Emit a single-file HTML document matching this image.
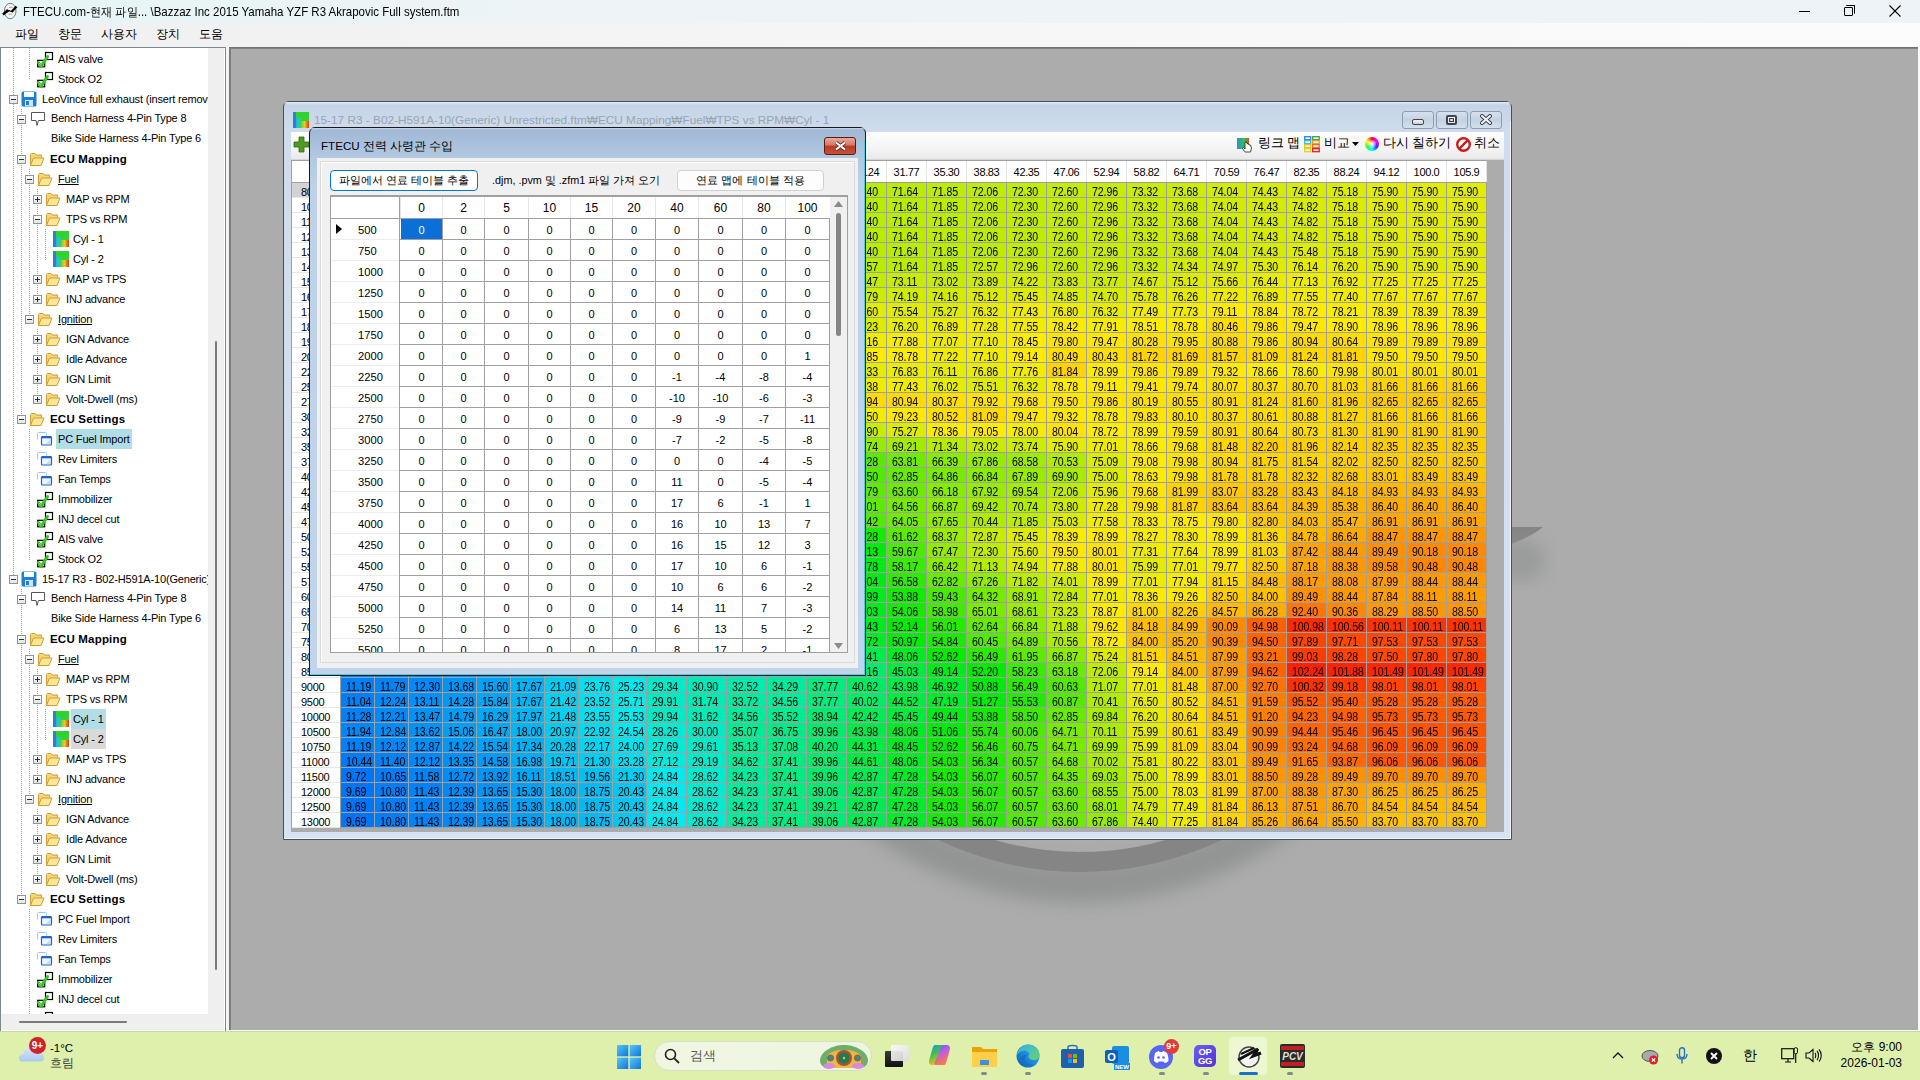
<!DOCTYPE html><html><head><meta charset="utf-8"><style>

*{margin:0;padding:0;box-sizing:border-box}
html,body{width:1920px;height:1080px;overflow:hidden;background:#abacac;font-family:"Liberation Sans", sans-serif;font-size:12px;color:#000}
div,span{position:absolute}
.t{white-space:nowrap;line-height:1}

</style></head><body>
<div style="left:0px;top:0px;width:1920px;height:23px;background:#eef3f7"></div>
<div style="left:0px;top:0px;width:600px;height:23px;background:linear-gradient(90deg,#e6f5f6,#eef3f7)"></div>
<svg style="position:absolute;left:0px;top:0px" width="22" height="23" viewBox="0 0 22 23"><ellipse cx="10.2" cy="11" rx="5.8" ry="7.7" fill="#f6f6f6" stroke="#7a7a7a" stroke-width="1"/><path d="M9 7.5q2-.7 3.5 0M8.5 14q2 .7 3.5 0" stroke="#888" stroke-width="0.8" fill="none"/><path d="M2.5 15L7.8 9.8L10.2 10.6L7.5 12.5z" fill="#000"/><path d="M3 14.5L8 10" stroke="#000" stroke-width="2.4"/><path d="M11.5 12L16.5 6.5" stroke="#000" stroke-width="2.4"/><path d="M8 10.5L12 11.5" stroke="#000" stroke-width="1.2"/></svg>
<div class="t" style="left:23px;top:6px;width:800px;height:14px;font-size:12.4px;color:#000;transform:scaleX(0.927);transform-origin:0 0">FTECU.com-현재 파일... \Bazzaz Inc 2015 Yamaha YZF R3 Akrapovic Full system.ftm</div>
<div style="left:1799px;top:11px;width:11px;height:1px;background:#000"></div>
<div style="left:1844px;top:7px;width:9px;height:9px;border:1px solid #000;border-radius:1px"></div>
<div style="left:1846px;top:5px;width:9px;height:9px;border-top:1px solid #000;border-right:1px solid #000;border-radius:1px"></div>
<svg style="position:absolute;left:1889px;top:5px" width="12" height="12" viewBox="0 0 12 12"><path d="M0.5 0.5L11.5 11.5M11.5 0.5L0.5 11.5" stroke="#000" stroke-width="1.1"/></svg>
<div style="left:0px;top:23px;width:1920px;height:24px;background:linear-gradient(90deg,#f0f0f0,#fcfcfc)"></div>
<div class="t" style="left:15px;top:28px;width:60px;height:14px;font-size:12px">파일</div>
<div class="t" style="left:58px;top:28px;width:60px;height:14px;font-size:12px">창문</div>
<div class="t" style="left:101px;top:28px;width:60px;height:14px;font-size:12px">사용자</div>
<div class="t" style="left:156px;top:28px;width:60px;height:14px;font-size:12px">장치</div>
<div class="t" style="left:199px;top:28px;width:60px;height:14px;font-size:12px">도움</div>
<div style="left:0px;top:47px;width:226px;height:985px;background:#fff;border:1px solid #7f8790;border-right:1px solid #7f8790"></div>
<div style="left:208px;top:48px;width:17px;height:983px;background:#efefef"></div>
<div style="left:1px;top:1014px;width:207px;height:17px;background:#efefef"></div>
<div style="left:215px;top:341px;width:2px;height:629px;background:#7a7a7a;border-radius:1px"></div>
<div style="left:19px;top:1021px;width:108px;height:2px;background:#7a7a7a;border-radius:1px"></div>
<div style="left:224px;top:48px;width:1px;height:983px;background:#fff"></div>
<div style="left:1px;top:1030px;width:224px;height:1px;background:#fff"></div>
<div style="left:226px;top:47px;width:3px;height:985px;background:#f4f4f4"></div>
<div style="left:1px;top:48px;width:207px;height:966px;overflow:hidden"><div style="left:-1px;top:-48px;width:1px;height:1px"><div style="left:13px;top:48px;width:1px;height:532px;background:repeating-linear-gradient(#a0a0a0 0 1px,transparent 1px 2px)"></div><div style="left:29px;top:48px;width:1px;height:32px;background:repeating-linear-gradient(#a0a0a0 0 1px,transparent 1px 2px)"></div><div style="left:21px;top:109px;width:1px;height:311px;background:repeating-linear-gradient(#a0a0a0 0 1px,transparent 1px 2px)"></div><div style="left:29px;top:169px;width:1px;height:151px;background:repeating-linear-gradient(#a0a0a0 0 1px,transparent 1px 2px)"></div><div style="left:37px;top:189px;width:1px;height:111px;background:repeating-linear-gradient(#a0a0a0 0 1px,transparent 1px 2px)"></div><div style="left:37px;top:329px;width:1px;height:71px;background:repeating-linear-gradient(#a0a0a0 0 1px,transparent 1px 2px)"></div><div style="left:45px;top:229px;width:1px;height:31px;background:repeating-linear-gradient(#a0a0a0 0 1px,transparent 1px 2px)"></div><div style="left:29px;top:429px;width:1px;height:131px;background:repeating-linear-gradient(#a0a0a0 0 1px,transparent 1px 2px)"></div><div style="left:21px;top:589px;width:1px;height:311px;background:repeating-linear-gradient(#a0a0a0 0 1px,transparent 1px 2px)"></div><div style="left:29px;top:649px;width:1px;height:151px;background:repeating-linear-gradient(#a0a0a0 0 1px,transparent 1px 2px)"></div><div style="left:37px;top:669px;width:1px;height:111px;background:repeating-linear-gradient(#a0a0a0 0 1px,transparent 1px 2px)"></div><div style="left:37px;top:809px;width:1px;height:71px;background:repeating-linear-gradient(#a0a0a0 0 1px,transparent 1px 2px)"></div><div style="left:45px;top:709px;width:1px;height:31px;background:repeating-linear-gradient(#a0a0a0 0 1px,transparent 1px 2px)"></div><div style="left:29px;top:909px;width:1px;height:105px;background:repeating-linear-gradient(#a0a0a0 0 1px,transparent 1px 2px)"></div><div style="left:37px;top:51px;width:17px;height:17px;background:#fff"><svg width="17" height="17" viewBox="0 0 17 17"><rect x="8.5" y="1.5" width="7" height="7" fill="#fff" stroke="#000" stroke-width="1.2"/><rect x="0.7" y="9.3" width="7" height="6.5" fill="#fff" stroke="#000" stroke-width="1.2"/><path d="M1.5 11.5l2.5 4 6.5-10" fill="none" stroke="#3cbf2c" stroke-width="3" stroke-linecap="round" stroke-linejoin="round"/><path d="M2 11.8l2 3" stroke="#8ee070" stroke-width="1"/></svg></div><div class="t" style="left:56px;top:49px;height:20px;padding:5px 2px 0 2px;font-size:11px;letter-spacing:-0.17px;">AIS valve</div><div style="left:37px;top:71px;width:17px;height:17px;background:#fff"><svg width="17" height="17" viewBox="0 0 17 17"><rect x="8.5" y="1.5" width="7" height="7" fill="#fff" stroke="#000" stroke-width="1.2"/><rect x="0.7" y="9.3" width="7" height="6.5" fill="#fff" stroke="#000" stroke-width="1.2"/><path d="M1.5 11.5l2.5 4 6.5-10" fill="none" stroke="#3cbf2c" stroke-width="3" stroke-linecap="round" stroke-linejoin="round"/><path d="M2 11.8l2 3" stroke="#8ee070" stroke-width="1"/></svg></div><div class="t" style="left:56px;top:69px;height:20px;padding:5px 2px 0 2px;font-size:11px;letter-spacing:-0.17px;">Stock O2</div><div style="left:9px;top:95px;width:9px;height:9px;border:1px solid #929292;background:linear-gradient(#fff,#e4e4e4)"></div><div style="left:11px;top:99px;width:5px;height:1px;background:#1b2f5a"></div><div style="left:21px;top:91px;width:17px;height:17px;background:#fff"><svg width="16" height="16" viewBox="0 0 16 16"><rect x="0.5" y="0.5" width="15" height="15" rx="1.5" fill="#1e7fd8"/><rect x="3" y="1" width="10" height="5" fill="#fff"/><rect x="4" y="9" width="8" height="6" fill="#cfe6fb"/><rect x="5" y="10" width="3" height="4" fill="#1e7fd8"/></svg></div><div class="t" style="left:40px;top:89px;height:20px;padding:5px 2px 0 2px;font-size:11px;letter-spacing:-0.17px;">LeoVince full exhaust (insert removed)</div><div style="left:17px;top:115px;width:9px;height:9px;border:1px solid #929292;background:linear-gradient(#fff,#e4e4e4)"></div><div style="left:19px;top:119px;width:5px;height:1px;background:#1b2f5a"></div><div style="left:30px;top:111px;width:17px;height:17px;background:#fff"><svg width="16" height="16" viewBox="0 0 16 16"><path d="M1.5 1.5h13v8h-6l-1.5 5-1-5h-4.5z" fill="#fff" stroke="#555" stroke-width="1"/></svg></div><div class="t" style="left:49px;top:108px;height:20px;padding:5px 2px 0 2px;font-size:11px;letter-spacing:-0.17px;">Bench Harness 4-Pin Type 8</div><div class="t" style="left:49px;top:128px;height:20px;padding:5px 2px 0 2px;font-size:11px;letter-spacing:-0.17px;">Bike Side Harness 4-Pin Type 6</div><div style="left:17px;top:155px;width:9px;height:9px;border:1px solid #929292;background:linear-gradient(#fff,#e4e4e4)"></div><div style="left:19px;top:159px;width:5px;height:1px;background:#1b2f5a"></div><div style="left:29px;top:151px;width:17px;height:17px;background:#fff"><svg width="16" height="16" viewBox="0 0 16 16"><path d="M1.5 14.5V3.5l1-1h3.5l1 1.5h5.5v2.5" fill="#f3d77a" stroke="#d09a30" stroke-width="1"/><path d="M1.5 14.5l3-7.5h10.5l-3 7.5z" fill="#fbe79a" stroke="#d49c2c" stroke-width="1" stroke-linejoin="round"/></svg></div><div class="t" style="left:48px;top:149px;height:20px;padding:5px 2px 0 2px;font-size:11.5px;letter-spacing:0.2px;font-weight:bold;">ECU Mapping</div><div style="left:25px;top:175px;width:9px;height:9px;border:1px solid #929292;background:linear-gradient(#fff,#e4e4e4)"></div><div style="left:27px;top:179px;width:5px;height:1px;background:#1b2f5a"></div><div style="left:37px;top:171px;width:17px;height:17px;background:#fff"><svg width="16" height="16" viewBox="0 0 16 16"><path d="M1.5 14.5V3.5l1-1h3.5l1 1.5h5.5v2.5" fill="#f3d77a" stroke="#d09a30" stroke-width="1"/><path d="M1.5 14.5l3-7.5h10.5l-3 7.5z" fill="#fbe79a" stroke="#d49c2c" stroke-width="1" stroke-linejoin="round"/></svg></div><div class="t" style="left:56px;top:169px;height:20px;padding:5px 2px 0 2px;font-size:11px;letter-spacing:-0.17px;text-decoration:underline;">Fuel</div><div style="left:33px;top:195px;width:9px;height:9px;border:1px solid #929292;background:linear-gradient(#fff,#e4e4e4)"></div><div style="left:35px;top:199px;width:5px;height:1px;background:#1b2f5a"></div><div style="left:37px;top:197px;width:1px;height:5px;background:#1b2f5a"></div><div style="left:45px;top:191px;width:17px;height:17px;background:#fff"><svg width="16" height="16" viewBox="0 0 16 16"><path d="M1.5 14.5V3.5l1-1h3.5l1 1.5h5.5v2.5" fill="#f3d77a" stroke="#d09a30" stroke-width="1"/><path d="M1.5 14.5l3-7.5h10.5l-3 7.5z" fill="#fbe79a" stroke="#d49c2c" stroke-width="1" stroke-linejoin="round"/></svg></div><div class="t" style="left:64px;top:189px;height:20px;padding:5px 2px 0 2px;font-size:11px;letter-spacing:-0.17px;">MAP vs RPM</div><div style="left:33px;top:215px;width:9px;height:9px;border:1px solid #929292;background:linear-gradient(#fff,#e4e4e4)"></div><div style="left:35px;top:219px;width:5px;height:1px;background:#1b2f5a"></div><div style="left:45px;top:211px;width:17px;height:17px;background:#fff"><svg width="16" height="16" viewBox="0 0 16 16"><path d="M1.5 14.5V3.5l1-1h3.5l1 1.5h5.5v2.5" fill="#f3d77a" stroke="#d09a30" stroke-width="1"/><path d="M1.5 14.5l3-7.5h10.5l-3 7.5z" fill="#fbe79a" stroke="#d49c2c" stroke-width="1" stroke-linejoin="round"/></svg></div><div class="t" style="left:64px;top:209px;height:20px;padding:5px 2px 0 2px;font-size:11px;letter-spacing:-0.17px;">TPS vs RPM</div><div style="left:53px;top:231px;width:17px;height:17px;background:#fff"><svg width="16" height="16" viewBox="0 0 16 16"><defs><linearGradient id="hg1" x1="0" y1="0" x2="1" y2="0"><stop offset="0" stop-color="#2a7ae8"/><stop offset="0.3" stop-color="#28c8c8"/><stop offset="0.6" stop-color="#30d040"/><stop offset="1" stop-color="#40d030"/></linearGradient><linearGradient id="hg2" x1="0" y1="0" x2="1" y2="0"><stop offset="0" stop-color="#30d060"/><stop offset="0.5" stop-color="#e0d020"/><stop offset="1" stop-color="#e83018"/></linearGradient></defs><rect width="16" height="16" fill="url(#hg1)"/><rect x="0" y="0" width="16" height="6" fill="#30d030"/><rect x="2" y="0" width="14" height="6" fill="#2fd22f"/><path d="M0 0h3v16H0z" fill="#2a7ae8" opacity="0.9"/><path d="M7 9h9v7H7z" fill="url(#hg2)"/></svg></div><div class="t" style="left:71px;top:229px;height:20px;padding:5px 2px 0 2px;font-size:11px;letter-spacing:-0.17px;">Cyl - 1</div><div style="left:53px;top:251px;width:17px;height:17px;background:#fff"><svg width="16" height="16" viewBox="0 0 16 16"><defs><linearGradient id="hg1" x1="0" y1="0" x2="1" y2="0"><stop offset="0" stop-color="#2a7ae8"/><stop offset="0.3" stop-color="#28c8c8"/><stop offset="0.6" stop-color="#30d040"/><stop offset="1" stop-color="#40d030"/></linearGradient><linearGradient id="hg2" x1="0" y1="0" x2="1" y2="0"><stop offset="0" stop-color="#30d060"/><stop offset="0.5" stop-color="#e0d020"/><stop offset="1" stop-color="#e83018"/></linearGradient></defs><rect width="16" height="16" fill="url(#hg1)"/><rect x="0" y="0" width="16" height="6" fill="#30d030"/><rect x="2" y="0" width="14" height="6" fill="#2fd22f"/><path d="M0 0h3v16H0z" fill="#2a7ae8" opacity="0.9"/><path d="M7 9h9v7H7z" fill="url(#hg2)"/></svg></div><div class="t" style="left:71px;top:249px;height:20px;padding:5px 2px 0 2px;font-size:11px;letter-spacing:-0.17px;">Cyl - 2</div><div style="left:33px;top:275px;width:9px;height:9px;border:1px solid #929292;background:linear-gradient(#fff,#e4e4e4)"></div><div style="left:35px;top:279px;width:5px;height:1px;background:#1b2f5a"></div><div style="left:37px;top:277px;width:1px;height:5px;background:#1b2f5a"></div><div style="left:45px;top:271px;width:17px;height:17px;background:#fff"><svg width="16" height="16" viewBox="0 0 16 16"><path d="M1.5 14.5V3.5l1-1h3.5l1 1.5h5.5v2.5" fill="#f3d77a" stroke="#d09a30" stroke-width="1"/><path d="M1.5 14.5l3-7.5h10.5l-3 7.5z" fill="#fbe79a" stroke="#d49c2c" stroke-width="1" stroke-linejoin="round"/></svg></div><div class="t" style="left:64px;top:269px;height:20px;padding:5px 2px 0 2px;font-size:11px;letter-spacing:-0.17px;">MAP vs TPS</div><div style="left:33px;top:295px;width:9px;height:9px;border:1px solid #929292;background:linear-gradient(#fff,#e4e4e4)"></div><div style="left:35px;top:299px;width:5px;height:1px;background:#1b2f5a"></div><div style="left:37px;top:297px;width:1px;height:5px;background:#1b2f5a"></div><div style="left:45px;top:291px;width:17px;height:17px;background:#fff"><svg width="16" height="16" viewBox="0 0 16 16"><path d="M1.5 14.5V3.5l1-1h3.5l1 1.5h5.5v2.5" fill="#f3d77a" stroke="#d09a30" stroke-width="1"/><path d="M1.5 14.5l3-7.5h10.5l-3 7.5z" fill="#fbe79a" stroke="#d49c2c" stroke-width="1" stroke-linejoin="round"/></svg></div><div class="t" style="left:64px;top:289px;height:20px;padding:5px 2px 0 2px;font-size:11px;letter-spacing:-0.17px;">INJ advance</div><div style="left:25px;top:315px;width:9px;height:9px;border:1px solid #929292;background:linear-gradient(#fff,#e4e4e4)"></div><div style="left:27px;top:319px;width:5px;height:1px;background:#1b2f5a"></div><div style="left:37px;top:311px;width:17px;height:17px;background:#fff"><svg width="16" height="16" viewBox="0 0 16 16"><path d="M1.5 14.5V3.5l1-1h3.5l1 1.5h5.5v2.5" fill="#f3d77a" stroke="#d09a30" stroke-width="1"/><path d="M1.5 14.5l3-7.5h10.5l-3 7.5z" fill="#fbe79a" stroke="#d49c2c" stroke-width="1" stroke-linejoin="round"/></svg></div><div class="t" style="left:56px;top:309px;height:20px;padding:5px 2px 0 2px;font-size:11px;letter-spacing:-0.17px;text-decoration:underline;">Ignition</div><div style="left:33px;top:335px;width:9px;height:9px;border:1px solid #929292;background:linear-gradient(#fff,#e4e4e4)"></div><div style="left:35px;top:339px;width:5px;height:1px;background:#1b2f5a"></div><div style="left:37px;top:337px;width:1px;height:5px;background:#1b2f5a"></div><div style="left:45px;top:331px;width:17px;height:17px;background:#fff"><svg width="16" height="16" viewBox="0 0 16 16"><path d="M1.5 14.5V3.5l1-1h3.5l1 1.5h5.5v2.5" fill="#f3d77a" stroke="#d09a30" stroke-width="1"/><path d="M1.5 14.5l3-7.5h10.5l-3 7.5z" fill="#fbe79a" stroke="#d49c2c" stroke-width="1" stroke-linejoin="round"/></svg></div><div class="t" style="left:64px;top:329px;height:20px;padding:5px 2px 0 2px;font-size:11px;letter-spacing:-0.17px;">IGN Advance</div><div style="left:33px;top:355px;width:9px;height:9px;border:1px solid #929292;background:linear-gradient(#fff,#e4e4e4)"></div><div style="left:35px;top:359px;width:5px;height:1px;background:#1b2f5a"></div><div style="left:37px;top:357px;width:1px;height:5px;background:#1b2f5a"></div><div style="left:45px;top:351px;width:17px;height:17px;background:#fff"><svg width="16" height="16" viewBox="0 0 16 16"><path d="M1.5 14.5V3.5l1-1h3.5l1 1.5h5.5v2.5" fill="#f3d77a" stroke="#d09a30" stroke-width="1"/><path d="M1.5 14.5l3-7.5h10.5l-3 7.5z" fill="#fbe79a" stroke="#d49c2c" stroke-width="1" stroke-linejoin="round"/></svg></div><div class="t" style="left:64px;top:349px;height:20px;padding:5px 2px 0 2px;font-size:11px;letter-spacing:-0.17px;">Idle Advance</div><div style="left:33px;top:375px;width:9px;height:9px;border:1px solid #929292;background:linear-gradient(#fff,#e4e4e4)"></div><div style="left:35px;top:379px;width:5px;height:1px;background:#1b2f5a"></div><div style="left:37px;top:377px;width:1px;height:5px;background:#1b2f5a"></div><div style="left:45px;top:371px;width:17px;height:17px;background:#fff"><svg width="16" height="16" viewBox="0 0 16 16"><path d="M1.5 14.5V3.5l1-1h3.5l1 1.5h5.5v2.5" fill="#f3d77a" stroke="#d09a30" stroke-width="1"/><path d="M1.5 14.5l3-7.5h10.5l-3 7.5z" fill="#fbe79a" stroke="#d49c2c" stroke-width="1" stroke-linejoin="round"/></svg></div><div class="t" style="left:64px;top:369px;height:20px;padding:5px 2px 0 2px;font-size:11px;letter-spacing:-0.17px;">IGN Limit</div><div style="left:33px;top:395px;width:9px;height:9px;border:1px solid #929292;background:linear-gradient(#fff,#e4e4e4)"></div><div style="left:35px;top:399px;width:5px;height:1px;background:#1b2f5a"></div><div style="left:37px;top:397px;width:1px;height:5px;background:#1b2f5a"></div><div style="left:45px;top:391px;width:17px;height:17px;background:#fff"><svg width="16" height="16" viewBox="0 0 16 16"><path d="M1.5 14.5V3.5l1-1h3.5l1 1.5h5.5v2.5" fill="#f3d77a" stroke="#d09a30" stroke-width="1"/><path d="M1.5 14.5l3-7.5h10.5l-3 7.5z" fill="#fbe79a" stroke="#d49c2c" stroke-width="1" stroke-linejoin="round"/></svg></div><div class="t" style="left:64px;top:389px;height:20px;padding:5px 2px 0 2px;font-size:11px;letter-spacing:-0.17px;">Volt-Dwell (ms)</div><div style="left:17px;top:415px;width:9px;height:9px;border:1px solid #929292;background:linear-gradient(#fff,#e4e4e4)"></div><div style="left:19px;top:419px;width:5px;height:1px;background:#1b2f5a"></div><div style="left:29px;top:411px;width:17px;height:17px;background:#fff"><svg width="16" height="16" viewBox="0 0 16 16"><path d="M1.5 14.5V3.5l1-1h3.5l1 1.5h5.5v2.5" fill="#f3d77a" stroke="#d09a30" stroke-width="1"/><path d="M1.5 14.5l3-7.5h10.5l-3 7.5z" fill="#fbe79a" stroke="#d49c2c" stroke-width="1" stroke-linejoin="round"/></svg></div><div class="t" style="left:48px;top:409px;height:20px;padding:5px 2px 0 2px;font-size:11.5px;letter-spacing:0.2px;font-weight:bold;">ECU Settings</div><div style="left:37px;top:431px;width:17px;height:17px;background:#fff"><svg width="16" height="16" viewBox="0 0 16 16"><path d="M0.5 8.5V2.5q0-1 1-1h7q1 0 1 1v2" fill="none" stroke="#9cc8e8" stroke-width="1"/><rect x="4.5" y="5.5" width="10" height="8.5" rx="1" fill="#eef4fb" stroke="#1a66d0" stroke-width="1.2"/><rect x="4.5" y="5.5" width="10" height="1.8" fill="#1a66d0"/><path d="M9 13l5-5v5z" fill="#c6dcf2"/></svg></div><div class="t" style="left:56px;top:429px;height:20px;padding:5px 2px 0 2px;background:#b0dde6;font-size:11px;letter-spacing:-0.17px;">PC Fuel Import</div><div style="left:37px;top:451px;width:17px;height:17px;background:#fff"><svg width="16" height="16" viewBox="0 0 16 16"><path d="M0.5 8.5V2.5q0-1 1-1h7q1 0 1 1v2" fill="none" stroke="#9cc8e8" stroke-width="1"/><rect x="4.5" y="5.5" width="10" height="8.5" rx="1" fill="#eef4fb" stroke="#1a66d0" stroke-width="1.2"/><rect x="4.5" y="5.5" width="10" height="1.8" fill="#1a66d0"/><path d="M9 13l5-5v5z" fill="#c6dcf2"/></svg></div><div class="t" style="left:56px;top:449px;height:20px;padding:5px 2px 0 2px;font-size:11px;letter-spacing:-0.17px;">Rev Limiters</div><div style="left:37px;top:471px;width:17px;height:17px;background:#fff"><svg width="16" height="16" viewBox="0 0 16 16"><path d="M0.5 8.5V2.5q0-1 1-1h7q1 0 1 1v2" fill="none" stroke="#9cc8e8" stroke-width="1"/><rect x="4.5" y="5.5" width="10" height="8.5" rx="1" fill="#eef4fb" stroke="#1a66d0" stroke-width="1.2"/><rect x="4.5" y="5.5" width="10" height="1.8" fill="#1a66d0"/><path d="M9 13l5-5v5z" fill="#c6dcf2"/></svg></div><div class="t" style="left:56px;top:469px;height:20px;padding:5px 2px 0 2px;font-size:11px;letter-spacing:-0.17px;">Fan Temps</div><div style="left:37px;top:491px;width:17px;height:17px;background:#fff"><svg width="17" height="17" viewBox="0 0 17 17"><rect x="8.5" y="1.5" width="7" height="7" fill="#fff" stroke="#000" stroke-width="1.2"/><rect x="0.7" y="9.3" width="7" height="6.5" fill="#fff" stroke="#000" stroke-width="1.2"/><path d="M1.5 11.5l2.5 4 6.5-10" fill="none" stroke="#3cbf2c" stroke-width="3" stroke-linecap="round" stroke-linejoin="round"/><path d="M2 11.8l2 3" stroke="#8ee070" stroke-width="1"/></svg></div><div class="t" style="left:56px;top:489px;height:20px;padding:5px 2px 0 2px;font-size:11px;letter-spacing:-0.17px;">Immobilizer</div><div style="left:37px;top:511px;width:17px;height:17px;background:#fff"><svg width="17" height="17" viewBox="0 0 17 17"><rect x="8.5" y="1.5" width="7" height="7" fill="#fff" stroke="#000" stroke-width="1.2"/><rect x="0.7" y="9.3" width="7" height="6.5" fill="#fff" stroke="#000" stroke-width="1.2"/><path d="M1.5 11.5l2.5 4 6.5-10" fill="none" stroke="#3cbf2c" stroke-width="3" stroke-linecap="round" stroke-linejoin="round"/><path d="M2 11.8l2 3" stroke="#8ee070" stroke-width="1"/></svg></div><div class="t" style="left:56px;top:509px;height:20px;padding:5px 2px 0 2px;font-size:11px;letter-spacing:-0.17px;">INJ decel cut</div><div style="left:37px;top:531px;width:17px;height:17px;background:#fff"><svg width="17" height="17" viewBox="0 0 17 17"><rect x="8.5" y="1.5" width="7" height="7" fill="#fff" stroke="#000" stroke-width="1.2"/><rect x="0.7" y="9.3" width="7" height="6.5" fill="#fff" stroke="#000" stroke-width="1.2"/><path d="M1.5 11.5l2.5 4 6.5-10" fill="none" stroke="#3cbf2c" stroke-width="3" stroke-linecap="round" stroke-linejoin="round"/><path d="M2 11.8l2 3" stroke="#8ee070" stroke-width="1"/></svg></div><div class="t" style="left:56px;top:529px;height:20px;padding:5px 2px 0 2px;font-size:11px;letter-spacing:-0.17px;">AIS valve</div><div style="left:37px;top:551px;width:17px;height:17px;background:#fff"><svg width="17" height="17" viewBox="0 0 17 17"><rect x="8.5" y="1.5" width="7" height="7" fill="#fff" stroke="#000" stroke-width="1.2"/><rect x="0.7" y="9.3" width="7" height="6.5" fill="#fff" stroke="#000" stroke-width="1.2"/><path d="M1.5 11.5l2.5 4 6.5-10" fill="none" stroke="#3cbf2c" stroke-width="3" stroke-linecap="round" stroke-linejoin="round"/><path d="M2 11.8l2 3" stroke="#8ee070" stroke-width="1"/></svg></div><div class="t" style="left:56px;top:549px;height:20px;padding:5px 2px 0 2px;font-size:11px;letter-spacing:-0.17px;">Stock O2</div><div style="left:9px;top:575px;width:9px;height:9px;border:1px solid #929292;background:linear-gradient(#fff,#e4e4e4)"></div><div style="left:11px;top:579px;width:5px;height:1px;background:#1b2f5a"></div><div style="left:21px;top:571px;width:17px;height:17px;background:#fff"><svg width="16" height="16" viewBox="0 0 16 16"><rect x="0.5" y="0.5" width="15" height="15" rx="1.5" fill="#1e7fd8"/><rect x="3" y="1" width="10" height="5" fill="#fff"/><rect x="4" y="9" width="8" height="6" fill="#cfe6fb"/><rect x="5" y="10" width="3" height="4" fill="#1e7fd8"/></svg></div><div class="t" style="left:40px;top:569px;height:20px;padding:5px 2px 0 2px;font-size:11px;letter-spacing:-0.17px;">15-17 R3 - B02-H591A-10(Generic) Unrestricted</div><div style="left:17px;top:595px;width:9px;height:9px;border:1px solid #929292;background:linear-gradient(#fff,#e4e4e4)"></div><div style="left:19px;top:599px;width:5px;height:1px;background:#1b2f5a"></div><div style="left:30px;top:591px;width:17px;height:17px;background:#fff"><svg width="16" height="16" viewBox="0 0 16 16"><path d="M1.5 1.5h13v8h-6l-1.5 5-1-5h-4.5z" fill="#fff" stroke="#555" stroke-width="1"/></svg></div><div class="t" style="left:49px;top:588px;height:20px;padding:5px 2px 0 2px;font-size:11px;letter-spacing:-0.17px;">Bench Harness 4-Pin Type 8</div><div class="t" style="left:49px;top:608px;height:20px;padding:5px 2px 0 2px;font-size:11px;letter-spacing:-0.17px;">Bike Side Harness 4-Pin Type 6</div><div style="left:17px;top:635px;width:9px;height:9px;border:1px solid #929292;background:linear-gradient(#fff,#e4e4e4)"></div><div style="left:19px;top:639px;width:5px;height:1px;background:#1b2f5a"></div><div style="left:29px;top:631px;width:17px;height:17px;background:#fff"><svg width="16" height="16" viewBox="0 0 16 16"><path d="M1.5 14.5V3.5l1-1h3.5l1 1.5h5.5v2.5" fill="#f3d77a" stroke="#d09a30" stroke-width="1"/><path d="M1.5 14.5l3-7.5h10.5l-3 7.5z" fill="#fbe79a" stroke="#d49c2c" stroke-width="1" stroke-linejoin="round"/></svg></div><div class="t" style="left:48px;top:629px;height:20px;padding:5px 2px 0 2px;font-size:11.5px;letter-spacing:0.2px;font-weight:bold;">ECU Mapping</div><div style="left:25px;top:655px;width:9px;height:9px;border:1px solid #929292;background:linear-gradient(#fff,#e4e4e4)"></div><div style="left:27px;top:659px;width:5px;height:1px;background:#1b2f5a"></div><div style="left:37px;top:651px;width:17px;height:17px;background:#fff"><svg width="16" height="16" viewBox="0 0 16 16"><path d="M1.5 14.5V3.5l1-1h3.5l1 1.5h5.5v2.5" fill="#f3d77a" stroke="#d09a30" stroke-width="1"/><path d="M1.5 14.5l3-7.5h10.5l-3 7.5z" fill="#fbe79a" stroke="#d49c2c" stroke-width="1" stroke-linejoin="round"/></svg></div><div class="t" style="left:56px;top:649px;height:20px;padding:5px 2px 0 2px;font-size:11px;letter-spacing:-0.17px;text-decoration:underline;">Fuel</div><div style="left:33px;top:675px;width:9px;height:9px;border:1px solid #929292;background:linear-gradient(#fff,#e4e4e4)"></div><div style="left:35px;top:679px;width:5px;height:1px;background:#1b2f5a"></div><div style="left:37px;top:677px;width:1px;height:5px;background:#1b2f5a"></div><div style="left:45px;top:671px;width:17px;height:17px;background:#fff"><svg width="16" height="16" viewBox="0 0 16 16"><path d="M1.5 14.5V3.5l1-1h3.5l1 1.5h5.5v2.5" fill="#f3d77a" stroke="#d09a30" stroke-width="1"/><path d="M1.5 14.5l3-7.5h10.5l-3 7.5z" fill="#fbe79a" stroke="#d49c2c" stroke-width="1" stroke-linejoin="round"/></svg></div><div class="t" style="left:64px;top:669px;height:20px;padding:5px 2px 0 2px;font-size:11px;letter-spacing:-0.17px;">MAP vs RPM</div><div style="left:33px;top:695px;width:9px;height:9px;border:1px solid #929292;background:linear-gradient(#fff,#e4e4e4)"></div><div style="left:35px;top:699px;width:5px;height:1px;background:#1b2f5a"></div><div style="left:45px;top:691px;width:17px;height:17px;background:#fff"><svg width="16" height="16" viewBox="0 0 16 16"><path d="M1.5 14.5V3.5l1-1h3.5l1 1.5h5.5v2.5" fill="#f3d77a" stroke="#d09a30" stroke-width="1"/><path d="M1.5 14.5l3-7.5h10.5l-3 7.5z" fill="#fbe79a" stroke="#d49c2c" stroke-width="1" stroke-linejoin="round"/></svg></div><div class="t" style="left:64px;top:689px;height:20px;padding:5px 2px 0 2px;font-size:11px;letter-spacing:-0.17px;">TPS vs RPM</div><div style="left:53px;top:711px;width:17px;height:17px;background:#fff"><svg width="16" height="16" viewBox="0 0 16 16"><defs><linearGradient id="hg1" x1="0" y1="0" x2="1" y2="0"><stop offset="0" stop-color="#2a7ae8"/><stop offset="0.3" stop-color="#28c8c8"/><stop offset="0.6" stop-color="#30d040"/><stop offset="1" stop-color="#40d030"/></linearGradient><linearGradient id="hg2" x1="0" y1="0" x2="1" y2="0"><stop offset="0" stop-color="#30d060"/><stop offset="0.5" stop-color="#e0d020"/><stop offset="1" stop-color="#e83018"/></linearGradient></defs><rect width="16" height="16" fill="url(#hg1)"/><rect x="0" y="0" width="16" height="6" fill="#30d030"/><rect x="2" y="0" width="14" height="6" fill="#2fd22f"/><path d="M0 0h3v16H0z" fill="#2a7ae8" opacity="0.9"/><path d="M7 9h9v7H7z" fill="url(#hg2)"/></svg></div><div class="t" style="left:71px;top:709px;height:20px;padding:5px 2px 0 2px;background:#b0dde6;font-size:11px;letter-spacing:-0.17px;">Cyl - 1</div><div style="left:53px;top:731px;width:17px;height:17px;background:#fff"><svg width="16" height="16" viewBox="0 0 16 16"><defs><linearGradient id="hg1" x1="0" y1="0" x2="1" y2="0"><stop offset="0" stop-color="#2a7ae8"/><stop offset="0.3" stop-color="#28c8c8"/><stop offset="0.6" stop-color="#30d040"/><stop offset="1" stop-color="#40d030"/></linearGradient><linearGradient id="hg2" x1="0" y1="0" x2="1" y2="0"><stop offset="0" stop-color="#30d060"/><stop offset="0.5" stop-color="#e0d020"/><stop offset="1" stop-color="#e83018"/></linearGradient></defs><rect width="16" height="16" fill="url(#hg1)"/><rect x="0" y="0" width="16" height="6" fill="#30d030"/><rect x="2" y="0" width="14" height="6" fill="#2fd22f"/><path d="M0 0h3v16H0z" fill="#2a7ae8" opacity="0.9"/><path d="M7 9h9v7H7z" fill="url(#hg2)"/></svg></div><div class="t" style="left:71px;top:729px;height:20px;padding:5px 2px 0 2px;background:#d9d9d9;font-size:11px;letter-spacing:-0.17px;">Cyl - 2</div><div style="left:33px;top:755px;width:9px;height:9px;border:1px solid #929292;background:linear-gradient(#fff,#e4e4e4)"></div><div style="left:35px;top:759px;width:5px;height:1px;background:#1b2f5a"></div><div style="left:37px;top:757px;width:1px;height:5px;background:#1b2f5a"></div><div style="left:45px;top:751px;width:17px;height:17px;background:#fff"><svg width="16" height="16" viewBox="0 0 16 16"><path d="M1.5 14.5V3.5l1-1h3.5l1 1.5h5.5v2.5" fill="#f3d77a" stroke="#d09a30" stroke-width="1"/><path d="M1.5 14.5l3-7.5h10.5l-3 7.5z" fill="#fbe79a" stroke="#d49c2c" stroke-width="1" stroke-linejoin="round"/></svg></div><div class="t" style="left:64px;top:749px;height:20px;padding:5px 2px 0 2px;font-size:11px;letter-spacing:-0.17px;">MAP vs TPS</div><div style="left:33px;top:775px;width:9px;height:9px;border:1px solid #929292;background:linear-gradient(#fff,#e4e4e4)"></div><div style="left:35px;top:779px;width:5px;height:1px;background:#1b2f5a"></div><div style="left:37px;top:777px;width:1px;height:5px;background:#1b2f5a"></div><div style="left:45px;top:771px;width:17px;height:17px;background:#fff"><svg width="16" height="16" viewBox="0 0 16 16"><path d="M1.5 14.5V3.5l1-1h3.5l1 1.5h5.5v2.5" fill="#f3d77a" stroke="#d09a30" stroke-width="1"/><path d="M1.5 14.5l3-7.5h10.5l-3 7.5z" fill="#fbe79a" stroke="#d49c2c" stroke-width="1" stroke-linejoin="round"/></svg></div><div class="t" style="left:64px;top:769px;height:20px;padding:5px 2px 0 2px;font-size:11px;letter-spacing:-0.17px;">INJ advance</div><div style="left:25px;top:795px;width:9px;height:9px;border:1px solid #929292;background:linear-gradient(#fff,#e4e4e4)"></div><div style="left:27px;top:799px;width:5px;height:1px;background:#1b2f5a"></div><div style="left:37px;top:791px;width:17px;height:17px;background:#fff"><svg width="16" height="16" viewBox="0 0 16 16"><path d="M1.5 14.5V3.5l1-1h3.5l1 1.5h5.5v2.5" fill="#f3d77a" stroke="#d09a30" stroke-width="1"/><path d="M1.5 14.5l3-7.5h10.5l-3 7.5z" fill="#fbe79a" stroke="#d49c2c" stroke-width="1" stroke-linejoin="round"/></svg></div><div class="t" style="left:56px;top:789px;height:20px;padding:5px 2px 0 2px;font-size:11px;letter-spacing:-0.17px;text-decoration:underline;">Ignition</div><div style="left:33px;top:815px;width:9px;height:9px;border:1px solid #929292;background:linear-gradient(#fff,#e4e4e4)"></div><div style="left:35px;top:819px;width:5px;height:1px;background:#1b2f5a"></div><div style="left:37px;top:817px;width:1px;height:5px;background:#1b2f5a"></div><div style="left:45px;top:811px;width:17px;height:17px;background:#fff"><svg width="16" height="16" viewBox="0 0 16 16"><path d="M1.5 14.5V3.5l1-1h3.5l1 1.5h5.5v2.5" fill="#f3d77a" stroke="#d09a30" stroke-width="1"/><path d="M1.5 14.5l3-7.5h10.5l-3 7.5z" fill="#fbe79a" stroke="#d49c2c" stroke-width="1" stroke-linejoin="round"/></svg></div><div class="t" style="left:64px;top:809px;height:20px;padding:5px 2px 0 2px;font-size:11px;letter-spacing:-0.17px;">IGN Advance</div><div style="left:33px;top:835px;width:9px;height:9px;border:1px solid #929292;background:linear-gradient(#fff,#e4e4e4)"></div><div style="left:35px;top:839px;width:5px;height:1px;background:#1b2f5a"></div><div style="left:37px;top:837px;width:1px;height:5px;background:#1b2f5a"></div><div style="left:45px;top:831px;width:17px;height:17px;background:#fff"><svg width="16" height="16" viewBox="0 0 16 16"><path d="M1.5 14.5V3.5l1-1h3.5l1 1.5h5.5v2.5" fill="#f3d77a" stroke="#d09a30" stroke-width="1"/><path d="M1.5 14.5l3-7.5h10.5l-3 7.5z" fill="#fbe79a" stroke="#d49c2c" stroke-width="1" stroke-linejoin="round"/></svg></div><div class="t" style="left:64px;top:829px;height:20px;padding:5px 2px 0 2px;font-size:11px;letter-spacing:-0.17px;">Idle Advance</div><div style="left:33px;top:855px;width:9px;height:9px;border:1px solid #929292;background:linear-gradient(#fff,#e4e4e4)"></div><div style="left:35px;top:859px;width:5px;height:1px;background:#1b2f5a"></div><div style="left:37px;top:857px;width:1px;height:5px;background:#1b2f5a"></div><div style="left:45px;top:851px;width:17px;height:17px;background:#fff"><svg width="16" height="16" viewBox="0 0 16 16"><path d="M1.5 14.5V3.5l1-1h3.5l1 1.5h5.5v2.5" fill="#f3d77a" stroke="#d09a30" stroke-width="1"/><path d="M1.5 14.5l3-7.5h10.5l-3 7.5z" fill="#fbe79a" stroke="#d49c2c" stroke-width="1" stroke-linejoin="round"/></svg></div><div class="t" style="left:64px;top:849px;height:20px;padding:5px 2px 0 2px;font-size:11px;letter-spacing:-0.17px;">IGN Limit</div><div style="left:33px;top:875px;width:9px;height:9px;border:1px solid #929292;background:linear-gradient(#fff,#e4e4e4)"></div><div style="left:35px;top:879px;width:5px;height:1px;background:#1b2f5a"></div><div style="left:37px;top:877px;width:1px;height:5px;background:#1b2f5a"></div><div style="left:45px;top:871px;width:17px;height:17px;background:#fff"><svg width="16" height="16" viewBox="0 0 16 16"><path d="M1.5 14.5V3.5l1-1h3.5l1 1.5h5.5v2.5" fill="#f3d77a" stroke="#d09a30" stroke-width="1"/><path d="M1.5 14.5l3-7.5h10.5l-3 7.5z" fill="#fbe79a" stroke="#d49c2c" stroke-width="1" stroke-linejoin="round"/></svg></div><div class="t" style="left:64px;top:869px;height:20px;padding:5px 2px 0 2px;font-size:11px;letter-spacing:-0.17px;">Volt-Dwell (ms)</div><div style="left:17px;top:895px;width:9px;height:9px;border:1px solid #929292;background:linear-gradient(#fff,#e4e4e4)"></div><div style="left:19px;top:899px;width:5px;height:1px;background:#1b2f5a"></div><div style="left:29px;top:891px;width:17px;height:17px;background:#fff"><svg width="16" height="16" viewBox="0 0 16 16"><path d="M1.5 14.5V3.5l1-1h3.5l1 1.5h5.5v2.5" fill="#f3d77a" stroke="#d09a30" stroke-width="1"/><path d="M1.5 14.5l3-7.5h10.5l-3 7.5z" fill="#fbe79a" stroke="#d49c2c" stroke-width="1" stroke-linejoin="round"/></svg></div><div class="t" style="left:48px;top:889px;height:20px;padding:5px 2px 0 2px;font-size:11.5px;letter-spacing:0.2px;font-weight:bold;">ECU Settings</div><div style="left:37px;top:911px;width:17px;height:17px;background:#fff"><svg width="16" height="16" viewBox="0 0 16 16"><path d="M0.5 8.5V2.5q0-1 1-1h7q1 0 1 1v2" fill="none" stroke="#9cc8e8" stroke-width="1"/><rect x="4.5" y="5.5" width="10" height="8.5" rx="1" fill="#eef4fb" stroke="#1a66d0" stroke-width="1.2"/><rect x="4.5" y="5.5" width="10" height="1.8" fill="#1a66d0"/><path d="M9 13l5-5v5z" fill="#c6dcf2"/></svg></div><div class="t" style="left:56px;top:909px;height:20px;padding:5px 2px 0 2px;font-size:11px;letter-spacing:-0.17px;">PC Fuel Import</div><div style="left:37px;top:931px;width:17px;height:17px;background:#fff"><svg width="16" height="16" viewBox="0 0 16 16"><path d="M0.5 8.5V2.5q0-1 1-1h7q1 0 1 1v2" fill="none" stroke="#9cc8e8" stroke-width="1"/><rect x="4.5" y="5.5" width="10" height="8.5" rx="1" fill="#eef4fb" stroke="#1a66d0" stroke-width="1.2"/><rect x="4.5" y="5.5" width="10" height="1.8" fill="#1a66d0"/><path d="M9 13l5-5v5z" fill="#c6dcf2"/></svg></div><div class="t" style="left:56px;top:929px;height:20px;padding:5px 2px 0 2px;font-size:11px;letter-spacing:-0.17px;">Rev Limiters</div><div style="left:37px;top:951px;width:17px;height:17px;background:#fff"><svg width="16" height="16" viewBox="0 0 16 16"><path d="M0.5 8.5V2.5q0-1 1-1h7q1 0 1 1v2" fill="none" stroke="#9cc8e8" stroke-width="1"/><rect x="4.5" y="5.5" width="10" height="8.5" rx="1" fill="#eef4fb" stroke="#1a66d0" stroke-width="1.2"/><rect x="4.5" y="5.5" width="10" height="1.8" fill="#1a66d0"/><path d="M9 13l5-5v5z" fill="#c6dcf2"/></svg></div><div class="t" style="left:56px;top:949px;height:20px;padding:5px 2px 0 2px;font-size:11px;letter-spacing:-0.17px;">Fan Temps</div><div style="left:37px;top:971px;width:17px;height:17px;background:#fff"><svg width="17" height="17" viewBox="0 0 17 17"><rect x="8.5" y="1.5" width="7" height="7" fill="#fff" stroke="#000" stroke-width="1.2"/><rect x="0.7" y="9.3" width="7" height="6.5" fill="#fff" stroke="#000" stroke-width="1.2"/><path d="M1.5 11.5l2.5 4 6.5-10" fill="none" stroke="#3cbf2c" stroke-width="3" stroke-linecap="round" stroke-linejoin="round"/><path d="M2 11.8l2 3" stroke="#8ee070" stroke-width="1"/></svg></div><div class="t" style="left:56px;top:969px;height:20px;padding:5px 2px 0 2px;font-size:11px;letter-spacing:-0.17px;">Immobilizer</div><div style="left:37px;top:991px;width:17px;height:17px;background:#fff"><svg width="17" height="17" viewBox="0 0 17 17"><rect x="8.5" y="1.5" width="7" height="7" fill="#fff" stroke="#000" stroke-width="1.2"/><rect x="0.7" y="9.3" width="7" height="6.5" fill="#fff" stroke="#000" stroke-width="1.2"/><path d="M1.5 11.5l2.5 4 6.5-10" fill="none" stroke="#3cbf2c" stroke-width="3" stroke-linecap="round" stroke-linejoin="round"/><path d="M2 11.8l2 3" stroke="#8ee070" stroke-width="1"/></svg></div><div class="t" style="left:56px;top:989px;height:20px;padding:5px 2px 0 2px;font-size:11px;letter-spacing:-0.17px;">INJ decel cut</div><div style="left:37px;top:1011px;width:17px;height:17px;background:#fff"><svg width="17" height="17" viewBox="0 0 17 17"><rect x="8.5" y="1.5" width="7" height="7" fill="#fff" stroke="#000" stroke-width="1.2"/><rect x="0.7" y="9.3" width="7" height="6.5" fill="#fff" stroke="#000" stroke-width="1.2"/><path d="M1.5 11.5l2.5 4 6.5-10" fill="none" stroke="#3cbf2c" stroke-width="3" stroke-linecap="round" stroke-linejoin="round"/><path d="M2 11.8l2 3" stroke="#8ee070" stroke-width="1"/></svg></div><div class="t" style="left:56px;top:1009px;height:20px;padding:5px 2px 0 2px;font-size:11px;letter-spacing:-0.17px;">AIS valve</div></div></div>
<div style="left:229px;top:47px;width:1691px;height:985px;background:#acacac"></div>
<div style="left:229px;top:47px;width:2px;height:984px;background:linear-gradient(90deg,#6a6a6a,#8a8a8a)"></div>
<div style="left:229px;top:47px;width:1690px;height:2px;background:linear-gradient(#6a6a6a,#8a8a8a)"></div>
<div style="left:1918px;top:47px;width:2px;height:985px;background:#fafafa"></div>
<div style="left:229px;top:1030px;width:1691px;height:2px;background:#f8f8f8"></div>
<svg style="position:absolute;left:231px;top:49px" width="1686" height="981" viewBox="231 49 1686 981">
<defs><filter id="blur1" x="-20%" y="-20%" width="140%" height="140%"><feGaussianBlur stdDeviation="9"/></filter></defs>
<ellipse cx="1080" cy="548" rx="335" ry="335" fill="none" stroke="#8c8f8f" stroke-width="40" filter="url(#blur1)" opacity="0.8"/>
<circle cx="1080" cy="542" r="320" fill="none" stroke="#858585" stroke-width="20"/>
<path d="M1500 527 L1543 527 Q1530 538 1500 548 Z" fill="#858585"/>
<ellipse cx="1520" cy="560" rx="26" ry="22" fill="#8e9090" filter="url(#blur1)" opacity="0.6"/>
</svg>
<div style="left:283px;top:101px;width:1229px;height:739px;border:1px solid #4a4f55;border-radius:6px 6px 0 0;background:linear-gradient(#c3d3e6 0px,#cfdcec 30px,#d6e3f1 100%)"></div>
<div style="left:284px;top:102px;width:1227px;height:3px;background:linear-gradient(#e6eef7,transparent);border-radius:5px 5px 0 0"></div>
<div style="left:1510px;top:121px;width:1px;height:718px;background:#f0f5fa"></div>
<div style="left:284px;top:838px;width:1227px;height:1px;background:#f0f5fa"></div>
<div style="left:293px;top:112px;width:16px;height:16px"><svg width="16" height="16" viewBox="0 0 16 16"><defs><linearGradient id="hg1" x1="0" y1="0" x2="1" y2="0"><stop offset="0" stop-color="#2a7ae8"/><stop offset="0.3" stop-color="#28c8c8"/><stop offset="0.6" stop-color="#30d040"/><stop offset="1" stop-color="#40d030"/></linearGradient><linearGradient id="hg2" x1="0" y1="0" x2="1" y2="0"><stop offset="0" stop-color="#30d060"/><stop offset="0.5" stop-color="#e0d020"/><stop offset="1" stop-color="#e83018"/></linearGradient></defs><rect width="16" height="16" fill="url(#hg1)"/><rect x="0" y="0" width="16" height="6" fill="#30d030"/><rect x="2" y="0" width="14" height="6" fill="#2fd22f"/><path d="M0 0h3v16H0z" fill="#2a7ae8" opacity="0.9"/><path d="M7 9h9v7H7z" fill="url(#hg2)"/></svg></div>
<div class="t" style="left:314px;top:115px;width:900px;height:14px;font-size:11.8px;color:#9aa4b0">15-17 R3 - B02-H591A-10(Generic) Unrestricted.ftm₩ECU Mapping₩Fuel₩TPS vs RPM₩Cyl - 1</div>
<div style="left:1402px;top:111px;width:32px;height:18px;border:1px solid #8a9cb4;border-radius:3px;background:linear-gradient(#d6e1ec,#c3d2e2 50%,#d3e0ee)"></div>
<div style="left:1412px;top:119px;width:12px;height:6px;border:1px solid #3d4550;border-radius:2px;background:linear-gradient(#f2f2f2,#cfcfcf)"></div>
<div style="left:1436px;top:111px;width:32px;height:18px;border:1px solid #8a9cb4;border-radius:3px;background:linear-gradient(#d6e1ec,#c3d2e2 50%,#d3e0ee)"></div>
<div style="left:1446px;top:115px;width:11px;height:10px;border:2px solid #3d4550;border-radius:2px;background:linear-gradient(#fff,#ddd)"></div>
<div style="left:1449px;top:118px;width:5px;height:4px;border:1px solid #3d4550;background:#c8d0da"></div>
<div style="left:1470px;top:111px;width:32px;height:18px;border:1px solid #8a9cb4;border-radius:3px;background:linear-gradient(#d6e1ec,#c3d2e2 50%,#d3e0ee)"></div>
<svg style="position:absolute;left:1480px;top:114px" width="12" height="11" viewBox="0 0 12 11"><path d="M2 2L10 9M10 2L2 9" stroke="#3d4550" stroke-width="4" stroke-linecap="round"/><path d="M2 2L10 9M10 2L2 9" stroke="#f4f4f4" stroke-width="2" stroke-linecap="round"/></svg>
<div style="left:291px;top:132px;width:1213px;height:700px;background:#acacac"></div>
<div style="left:291px;top:132px;width:1213px;height:28px;background:linear-gradient(#fdfdfd,#f4f4f4 60%,#e9e9e9)"></div>
<div style="left:291px;top:159px;width:1213px;height:1px;background:#d5d5d5"></div>
<svg style="position:absolute;left:293px;top:136px" width="17" height="17" viewBox="0 0 17 17"><path d="M6 1h5v5h5v5h-5v5H6v-5H1V6h5z" fill="#4f9a23" stroke="#2f6a12" stroke-width="0.8"/></svg>
<svg style="position:absolute;left:1237px;top:136px" width="18" height="18" viewBox="0 0 18 18"><defs><linearGradient id="lg2" x1="0" x2="1"><stop offset="0" stop-color="#2a8fe0"/><stop offset="0.6" stop-color="#33c24a"/><stop offset="1" stop-color="#e04a2a"/></linearGradient></defs><rect x="0" y="2" width="12" height="11" fill="url(#lg2)"/><path d="M8 6v7l-1.5-1.5-1 1 2.5 3.5h5.5l1-4-1-3h-1.5v-1h-1.5v-1h-1V6z" fill="#fff" stroke="#222" stroke-width="0.8"/></svg>
<div class="t" style="left:1258px;top:137px;width:60px;height:14px;font-size:12.5px">링크 맵</div>
<svg style="position:absolute;left:1304px;top:136px" width="16" height="17" viewBox="0 0 16 17"><g stroke-width="1.3" fill="none"><rect x="0.7" y="0.7" width="6" height="3" stroke="#3a7be0"/><rect x="8.7" y="0.7" width="6.5" height="3" stroke="#3aa03a"/><rect x="0.7" y="4.7" width="6" height="3" stroke="#3ac0c0"/><rect x="8.7" y="4.7" width="6.5" height="3" stroke="#e0a020"/><rect x="0.7" y="8.7" width="6" height="3" stroke="#e0c020"/><rect x="8.7" y="8.7" width="6.5" height="3" stroke="#e07020"/><rect x="0.7" y="12.7" width="6" height="3" stroke="#e0d020"/><rect x="8.7" y="12.7" width="6.5" height="3" stroke="#e02020"/></g></svg>
<div class="t" style="left:1324px;top:137px;width:40px;height:14px;font-size:12.5px">비교</div>
<svg style="position:absolute;left:1352px;top:142px" width="7" height="4" viewBox="0 0 7 4"><path d="M0 0h7L3.5 4z" fill="#000"/></svg>
<div style="left:1365px;top:137px;width:14px;height:14px;border-radius:50%;background:conic-gradient(#f03 0deg,#f0f 60deg,#33f 120deg,#0ff 180deg,#3f3 240deg,#ff0 300deg,#f03 360deg)"><div style="left:3px;top:3px;width:8px;height:8px;border-radius:50%;background:radial-gradient(#fff,rgba(255,255,255,0))"></div></div>
<div class="t" style="left:1383px;top:137px;width:70px;height:14px;font-size:12.5px">다시 칠하기</div>
<svg style="position:absolute;left:1456px;top:137px" width="15" height="15" viewBox="0 0 15 15"><circle cx="7.5" cy="7.5" r="6.3" fill="#fff" stroke="#c81e1e" stroke-width="2.4"/><path d="M3.2 11.8L11.8 3.2" stroke="#c81e1e" stroke-width="2.4"/></svg>
<div class="t" style="left:1474px;top:137px;width:30px;height:14px;font-size:12.5px">취소</div>
<style>.c{height:15px;border-right:1px solid #a0a0a0;border-bottom:1px solid #a0a0a0;line-height:1;white-space:nowrap;overflow:hidden}.c i{position:absolute;left:5px;top:3px;font-style:normal;font-size:12px;letter-spacing:-0.1px;transform:scaleX(0.88);transform-origin:0 0}</style>
<div style="left:291px;top:160px;width:1196px;height:23px;background:#fff;border-top:1px solid #a0a0a0;border-bottom:1px solid #a0a0a0"></div><div style="left:291px;top:160px;width:50px;height:23px;background:#fff;border:1px solid #a0a0a0"></div><div style="left:291px;top:183px;width:1px;height:645px;background:#a0a0a0"></div><div style="left:340px;top:183px;width:1px;height:645px;background:#a0a0a0"></div><div class="t" style="left:341px;top:161px;width:34px;height:21px;border-right:1px solid #e4e4e4;text-align:center;padding-top:6px;font-size:11px;letter-spacing:-0.35px"></div><div class="t" style="left:375px;top:161px;width:34px;height:21px;border-right:1px solid #e4e4e4;text-align:center;padding-top:6px;font-size:11px;letter-spacing:-0.35px"></div><div class="t" style="left:409px;top:161px;width:34px;height:21px;border-right:1px solid #e4e4e4;text-align:center;padding-top:6px;font-size:11px;letter-spacing:-0.35px"></div><div class="t" style="left:443px;top:161px;width:34px;height:21px;border-right:1px solid #e4e4e4;text-align:center;padding-top:6px;font-size:11px;letter-spacing:-0.35px"></div><div class="t" style="left:477px;top:161px;width:34px;height:21px;border-right:1px solid #e4e4e4;text-align:center;padding-top:6px;font-size:11px;letter-spacing:-0.35px"></div><div class="t" style="left:511px;top:161px;width:34px;height:21px;border-right:1px solid #e4e4e4;text-align:center;padding-top:6px;font-size:11px;letter-spacing:-0.35px"></div><div class="t" style="left:545px;top:161px;width:34px;height:21px;border-right:1px solid #e4e4e4;text-align:center;padding-top:6px;font-size:11px;letter-spacing:-0.35px"></div><div class="t" style="left:579px;top:161px;width:34px;height:21px;border-right:1px solid #e4e4e4;text-align:center;padding-top:6px;font-size:11px;letter-spacing:-0.35px"></div><div class="t" style="left:613px;top:161px;width:34px;height:21px;border-right:1px solid #e4e4e4;text-align:center;padding-top:6px;font-size:11px;letter-spacing:-0.35px"></div><div class="t" style="left:647px;top:161px;width:40px;height:21px;border-right:1px solid #e4e4e4;text-align:center;padding-top:6px;font-size:11px;letter-spacing:-0.35px"></div><div class="t" style="left:687px;top:161px;width:40px;height:21px;border-right:1px solid #e4e4e4;text-align:center;padding-top:6px;font-size:11px;letter-spacing:-0.35px"></div><div class="t" style="left:727px;top:161px;width:40px;height:21px;border-right:1px solid #e4e4e4;text-align:center;padding-top:6px;font-size:11px;letter-spacing:-0.35px"></div><div class="t" style="left:767px;top:161px;width:40px;height:21px;border-right:1px solid #e4e4e4;text-align:center;padding-top:6px;font-size:11px;letter-spacing:-0.35px"></div><div class="t" style="left:807px;top:161px;width:40px;height:21px;border-right:1px solid #e4e4e4;text-align:center;padding-top:6px;font-size:11px;letter-spacing:-0.35px"></div><div class="t" style="left:847px;top:161px;width:40px;height:21px;border-right:1px solid #e4e4e4;text-align:center;padding-top:6px;font-size:11px;letter-spacing:-0.35px">28.24</div><div class="t" style="left:887px;top:161px;width:40px;height:21px;border-right:1px solid #e4e4e4;text-align:center;padding-top:6px;font-size:11px;letter-spacing:-0.35px">31.77</div><div class="t" style="left:927px;top:161px;width:40px;height:21px;border-right:1px solid #e4e4e4;text-align:center;padding-top:6px;font-size:11px;letter-spacing:-0.35px">35.30</div><div class="t" style="left:967px;top:161px;width:40px;height:21px;border-right:1px solid #e4e4e4;text-align:center;padding-top:6px;font-size:11px;letter-spacing:-0.35px">38.83</div><div class="t" style="left:1007px;top:161px;width:40px;height:21px;border-right:1px solid #e4e4e4;text-align:center;padding-top:6px;font-size:11px;letter-spacing:-0.35px">42.35</div><div class="t" style="left:1047px;top:161px;width:40px;height:21px;border-right:1px solid #e4e4e4;text-align:center;padding-top:6px;font-size:11px;letter-spacing:-0.35px">47.06</div><div class="t" style="left:1087px;top:161px;width:40px;height:21px;border-right:1px solid #e4e4e4;text-align:center;padding-top:6px;font-size:11px;letter-spacing:-0.35px">52.94</div><div class="t" style="left:1127px;top:161px;width:40px;height:21px;border-right:1px solid #e4e4e4;text-align:center;padding-top:6px;font-size:11px;letter-spacing:-0.35px">58.82</div><div class="t" style="left:1167px;top:161px;width:40px;height:21px;border-right:1px solid #e4e4e4;text-align:center;padding-top:6px;font-size:11px;letter-spacing:-0.35px">64.71</div><div class="t" style="left:1207px;top:161px;width:40px;height:21px;border-right:1px solid #e4e4e4;text-align:center;padding-top:6px;font-size:11px;letter-spacing:-0.35px">70.59</div><div class="t" style="left:1247px;top:161px;width:40px;height:21px;border-right:1px solid #e4e4e4;text-align:center;padding-top:6px;font-size:11px;letter-spacing:-0.35px">76.47</div><div class="t" style="left:1287px;top:161px;width:40px;height:21px;border-right:1px solid #e4e4e4;text-align:center;padding-top:6px;font-size:11px;letter-spacing:-0.35px">82.35</div><div class="t" style="left:1327px;top:161px;width:40px;height:21px;border-right:1px solid #e4e4e4;text-align:center;padding-top:6px;font-size:11px;letter-spacing:-0.35px">88.24</div><div class="t" style="left:1367px;top:161px;width:40px;height:21px;border-right:1px solid #e4e4e4;text-align:center;padding-top:6px;font-size:11px;letter-spacing:-0.35px">94.12</div><div class="t" style="left:1407px;top:161px;width:40px;height:21px;border-right:1px solid #e4e4e4;text-align:center;padding-top:6px;font-size:11px;letter-spacing:-0.35px">100.0</div><div class="t" style="left:1447px;top:161px;width:40px;height:21px;border-right:1px solid #e4e4e4;text-align:center;padding-top:6px;font-size:11px;letter-spacing:-0.35px">105.9</div><div class="t" style="left:292px;top:183px;width:48px;height:15px;background:#d3d3d3;border-bottom:1px solid #e6e6e6;padding:4px 0 0 9px;font-size:11px;letter-spacing:-0.3px">800</div><div class="t" style="left:292px;top:198px;width:48px;height:15px;background:#fff;border-bottom:1px solid #e6e6e6;padding:4px 0 0 9px;font-size:11px;letter-spacing:-0.3px">1000</div><div class="t" style="left:292px;top:213px;width:48px;height:15px;background:#fff;border-bottom:1px solid #e6e6e6;padding:4px 0 0 9px;font-size:11px;letter-spacing:-0.3px">1100</div><div class="t" style="left:292px;top:228px;width:48px;height:15px;background:#fff;border-bottom:1px solid #e6e6e6;padding:4px 0 0 9px;font-size:11px;letter-spacing:-0.3px">1200</div><div class="t" style="left:292px;top:243px;width:48px;height:15px;background:#fff;border-bottom:1px solid #e6e6e6;padding:4px 0 0 9px;font-size:11px;letter-spacing:-0.3px">1300</div><div class="t" style="left:292px;top:258px;width:48px;height:15px;background:#fff;border-bottom:1px solid #e6e6e6;padding:4px 0 0 9px;font-size:11px;letter-spacing:-0.3px">1400</div><div class="t" style="left:292px;top:273px;width:48px;height:15px;background:#fff;border-bottom:1px solid #e6e6e6;padding:4px 0 0 9px;font-size:11px;letter-spacing:-0.3px">1500</div><div class="t" style="left:292px;top:288px;width:48px;height:15px;background:#fff;border-bottom:1px solid #e6e6e6;padding:4px 0 0 9px;font-size:11px;letter-spacing:-0.3px">1600</div><div class="t" style="left:292px;top:303px;width:48px;height:15px;background:#fff;border-bottom:1px solid #e6e6e6;padding:4px 0 0 9px;font-size:11px;letter-spacing:-0.3px">1700</div><div class="t" style="left:292px;top:318px;width:48px;height:15px;background:#fff;border-bottom:1px solid #e6e6e6;padding:4px 0 0 9px;font-size:11px;letter-spacing:-0.3px">1800</div><div class="t" style="left:292px;top:333px;width:48px;height:15px;background:#fff;border-bottom:1px solid #e6e6e6;padding:4px 0 0 9px;font-size:11px;letter-spacing:-0.3px">1900</div><div class="t" style="left:292px;top:348px;width:48px;height:15px;background:#fff;border-bottom:1px solid #e6e6e6;padding:4px 0 0 9px;font-size:11px;letter-spacing:-0.3px">2000</div><div class="t" style="left:292px;top:363px;width:48px;height:15px;background:#fff;border-bottom:1px solid #e6e6e6;padding:4px 0 0 9px;font-size:11px;letter-spacing:-0.3px">2250</div><div class="t" style="left:292px;top:378px;width:48px;height:15px;background:#fff;border-bottom:1px solid #e6e6e6;padding:4px 0 0 9px;font-size:11px;letter-spacing:-0.3px">2500</div><div class="t" style="left:292px;top:393px;width:48px;height:15px;background:#fff;border-bottom:1px solid #e6e6e6;padding:4px 0 0 9px;font-size:11px;letter-spacing:-0.3px">2750</div><div class="t" style="left:292px;top:408px;width:48px;height:15px;background:#fff;border-bottom:1px solid #e6e6e6;padding:4px 0 0 9px;font-size:11px;letter-spacing:-0.3px">3000</div><div class="t" style="left:292px;top:423px;width:48px;height:15px;background:#fff;border-bottom:1px solid #e6e6e6;padding:4px 0 0 9px;font-size:11px;letter-spacing:-0.3px">3250</div><div class="t" style="left:292px;top:438px;width:48px;height:15px;background:#fff;border-bottom:1px solid #e6e6e6;padding:4px 0 0 9px;font-size:11px;letter-spacing:-0.3px">3500</div><div class="t" style="left:292px;top:453px;width:48px;height:15px;background:#fff;border-bottom:1px solid #e6e6e6;padding:4px 0 0 9px;font-size:11px;letter-spacing:-0.3px">3750</div><div class="t" style="left:292px;top:468px;width:48px;height:15px;background:#fff;border-bottom:1px solid #e6e6e6;padding:4px 0 0 9px;font-size:11px;letter-spacing:-0.3px">4000</div><div class="t" style="left:292px;top:483px;width:48px;height:15px;background:#fff;border-bottom:1px solid #e6e6e6;padding:4px 0 0 9px;font-size:11px;letter-spacing:-0.3px">4250</div><div class="t" style="left:292px;top:498px;width:48px;height:15px;background:#fff;border-bottom:1px solid #e6e6e6;padding:4px 0 0 9px;font-size:11px;letter-spacing:-0.3px">4500</div><div class="t" style="left:292px;top:513px;width:48px;height:15px;background:#fff;border-bottom:1px solid #e6e6e6;padding:4px 0 0 9px;font-size:11px;letter-spacing:-0.3px">4750</div><div class="t" style="left:292px;top:528px;width:48px;height:15px;background:#fff;border-bottom:1px solid #e6e6e6;padding:4px 0 0 9px;font-size:11px;letter-spacing:-0.3px">5000</div><div class="t" style="left:292px;top:543px;width:48px;height:15px;background:#fff;border-bottom:1px solid #e6e6e6;padding:4px 0 0 9px;font-size:11px;letter-spacing:-0.3px">5250</div><div class="t" style="left:292px;top:558px;width:48px;height:15px;background:#fff;border-bottom:1px solid #e6e6e6;padding:4px 0 0 9px;font-size:11px;letter-spacing:-0.3px">5500</div><div class="t" style="left:292px;top:573px;width:48px;height:15px;background:#fff;border-bottom:1px solid #e6e6e6;padding:4px 0 0 9px;font-size:11px;letter-spacing:-0.3px">5750</div><div class="t" style="left:292px;top:588px;width:48px;height:15px;background:#fff;border-bottom:1px solid #e6e6e6;padding:4px 0 0 9px;font-size:11px;letter-spacing:-0.3px">6000</div><div class="t" style="left:292px;top:603px;width:48px;height:15px;background:#fff;border-bottom:1px solid #e6e6e6;padding:4px 0 0 9px;font-size:11px;letter-spacing:-0.3px">6500</div><div class="t" style="left:292px;top:618px;width:48px;height:15px;background:#fff;border-bottom:1px solid #e6e6e6;padding:4px 0 0 9px;font-size:11px;letter-spacing:-0.3px">7000</div><div class="t" style="left:292px;top:633px;width:48px;height:15px;background:#fff;border-bottom:1px solid #e6e6e6;padding:4px 0 0 9px;font-size:11px;letter-spacing:-0.3px">7500</div><div class="t" style="left:292px;top:648px;width:48px;height:15px;background:#fff;border-bottom:1px solid #e6e6e6;padding:4px 0 0 9px;font-size:11px;letter-spacing:-0.3px">8000</div><div class="t" style="left:292px;top:663px;width:48px;height:15px;background:#fff;border-bottom:1px solid #e6e6e6;padding:4px 0 0 9px;font-size:11px;letter-spacing:-0.3px">8500</div><div class="t" style="left:292px;top:678px;width:48px;height:15px;background:#fff;border-bottom:1px solid #e6e6e6;padding:4px 0 0 9px;font-size:11px;letter-spacing:-0.3px">9000</div><div class="t" style="left:292px;top:693px;width:48px;height:15px;background:#fff;border-bottom:1px solid #e6e6e6;padding:4px 0 0 9px;font-size:11px;letter-spacing:-0.3px">9500</div><div class="t" style="left:292px;top:708px;width:48px;height:15px;background:#fff;border-bottom:1px solid #e6e6e6;padding:4px 0 0 9px;font-size:11px;letter-spacing:-0.3px">10000</div><div class="t" style="left:292px;top:723px;width:48px;height:15px;background:#fff;border-bottom:1px solid #e6e6e6;padding:4px 0 0 9px;font-size:11px;letter-spacing:-0.3px">10500</div><div class="t" style="left:292px;top:738px;width:48px;height:15px;background:#fff;border-bottom:1px solid #e6e6e6;padding:4px 0 0 9px;font-size:11px;letter-spacing:-0.3px">10750</div><div class="t" style="left:292px;top:753px;width:48px;height:15px;background:#fff;border-bottom:1px solid #e6e6e6;padding:4px 0 0 9px;font-size:11px;letter-spacing:-0.3px">11000</div><div class="t" style="left:292px;top:768px;width:48px;height:15px;background:#fff;border-bottom:1px solid #e6e6e6;padding:4px 0 0 9px;font-size:11px;letter-spacing:-0.3px">11500</div><div class="t" style="left:292px;top:783px;width:48px;height:15px;background:#fff;border-bottom:1px solid #e6e6e6;padding:4px 0 0 9px;font-size:11px;letter-spacing:-0.3px">12000</div><div class="t" style="left:292px;top:798px;width:48px;height:15px;background:#fff;border-bottom:1px solid #e6e6e6;padding:4px 0 0 9px;font-size:11px;letter-spacing:-0.3px">12500</div><div class="t" style="left:292px;top:813px;width:48px;height:15px;background:#fff;border-bottom:1px solid #e6e6e6;padding:4px 0 0 9px;font-size:11px;letter-spacing:-0.3px">13000</div><div class="c" style="left:341px;top:183px;width:34px;background:#002afe"><i>0.00</i></div><div class="c" style="left:375px;top:183px;width:34px;background:#002afe"><i>0.00</i></div><div class="c" style="left:409px;top:183px;width:34px;background:#002afe"><i>0.00</i></div><div class="c" style="left:443px;top:183px;width:34px;background:#002afe"><i>0.00</i></div><div class="c" style="left:477px;top:183px;width:34px;background:#002afe"><i>0.00</i></div><div class="c" style="left:511px;top:183px;width:34px;background:#002afe"><i>0.00</i></div><div class="c" style="left:545px;top:183px;width:34px;background:#002afe"><i>0.00</i></div><div class="c" style="left:579px;top:183px;width:34px;background:#002afe"><i>0.00</i></div><div class="c" style="left:613px;top:183px;width:34px;background:#002afe"><i>0.00</i></div><div class="c" style="left:647px;top:183px;width:40px;background:#002afe"><i>0.00</i></div><div class="c" style="left:687px;top:183px;width:40px;background:#002afe"><i>0.00</i></div><div class="c" style="left:727px;top:183px;width:40px;background:#002afe"><i>0.00</i></div><div class="c" style="left:767px;top:183px;width:40px;background:#002afe"><i>0.00</i></div><div class="c" style="left:807px;top:183px;width:40px;background:#002afe"><i>0.00</i></div><div class="c" style="left:847px;top:183px;width:40px;background:#b8ec00"><i>71.40</i></div><div class="c" style="left:887px;top:183px;width:40px;background:#baec00"><i>71.64</i></div><div class="c" style="left:927px;top:183px;width:40px;background:#bcec00"><i>71.85</i></div><div class="c" style="left:967px;top:183px;width:40px;background:#beec00"><i>72.06</i></div><div class="c" style="left:1007px;top:183px;width:40px;background:#c0ec00"><i>72.30</i></div><div class="c" style="left:1047px;top:183px;width:40px;background:#c3ec00"><i>72.60</i></div><div class="c" style="left:1087px;top:183px;width:40px;background:#c7ec00"><i>72.96</i></div><div class="c" style="left:1127px;top:183px;width:40px;background:#caec00"><i>73.32</i></div><div class="c" style="left:1167px;top:183px;width:40px;background:#cdec00"><i>73.68</i></div><div class="c" style="left:1207px;top:183px;width:40px;background:#d1ec00"><i>74.04</i></div><div class="c" style="left:1247px;top:183px;width:40px;background:#d5ec00"><i>74.43</i></div><div class="c" style="left:1287px;top:183px;width:40px;background:#d8ec00"><i>74.82</i></div><div class="c" style="left:1327px;top:183px;width:40px;background:#dcec00"><i>75.18</i></div><div class="c" style="left:1367px;top:183px;width:40px;background:#e2ec00"><i>75.90</i></div><div class="c" style="left:1407px;top:183px;width:40px;background:#e2ec00"><i>75.90</i></div><div class="c" style="left:1447px;top:183px;width:40px;background:#e2ec00"><i>75.90</i></div><div class="c" style="left:341px;top:198px;width:34px;background:#002afe"><i>0.00</i></div><div class="c" style="left:375px;top:198px;width:34px;background:#002afe"><i>0.00</i></div><div class="c" style="left:409px;top:198px;width:34px;background:#002afe"><i>0.00</i></div><div class="c" style="left:443px;top:198px;width:34px;background:#002afe"><i>0.00</i></div><div class="c" style="left:477px;top:198px;width:34px;background:#002afe"><i>0.00</i></div><div class="c" style="left:511px;top:198px;width:34px;background:#002afe"><i>0.00</i></div><div class="c" style="left:545px;top:198px;width:34px;background:#002afe"><i>0.00</i></div><div class="c" style="left:579px;top:198px;width:34px;background:#002afe"><i>0.00</i></div><div class="c" style="left:613px;top:198px;width:34px;background:#002afe"><i>0.00</i></div><div class="c" style="left:647px;top:198px;width:40px;background:#002afe"><i>0.00</i></div><div class="c" style="left:687px;top:198px;width:40px;background:#002afe"><i>0.00</i></div><div class="c" style="left:727px;top:198px;width:40px;background:#002afe"><i>0.00</i></div><div class="c" style="left:767px;top:198px;width:40px;background:#002afe"><i>0.00</i></div><div class="c" style="left:807px;top:198px;width:40px;background:#002afe"><i>0.00</i></div><div class="c" style="left:847px;top:198px;width:40px;background:#b8ec00"><i>71.40</i></div><div class="c" style="left:887px;top:198px;width:40px;background:#baec00"><i>71.64</i></div><div class="c" style="left:927px;top:198px;width:40px;background:#bcec00"><i>71.85</i></div><div class="c" style="left:967px;top:198px;width:40px;background:#beec00"><i>72.06</i></div><div class="c" style="left:1007px;top:198px;width:40px;background:#c0ec00"><i>72.30</i></div><div class="c" style="left:1047px;top:198px;width:40px;background:#c3ec00"><i>72.60</i></div><div class="c" style="left:1087px;top:198px;width:40px;background:#c7ec00"><i>72.96</i></div><div class="c" style="left:1127px;top:198px;width:40px;background:#caec00"><i>73.32</i></div><div class="c" style="left:1167px;top:198px;width:40px;background:#cdec00"><i>73.68</i></div><div class="c" style="left:1207px;top:198px;width:40px;background:#d1ec00"><i>74.04</i></div><div class="c" style="left:1247px;top:198px;width:40px;background:#d5ec00"><i>74.43</i></div><div class="c" style="left:1287px;top:198px;width:40px;background:#d8ec00"><i>74.82</i></div><div class="c" style="left:1327px;top:198px;width:40px;background:#dcec00"><i>75.18</i></div><div class="c" style="left:1367px;top:198px;width:40px;background:#e2ec00"><i>75.90</i></div><div class="c" style="left:1407px;top:198px;width:40px;background:#e2ec00"><i>75.90</i></div><div class="c" style="left:1447px;top:198px;width:40px;background:#e2ec00"><i>75.90</i></div><div class="c" style="left:341px;top:213px;width:34px;background:#002afe"><i>0.00</i></div><div class="c" style="left:375px;top:213px;width:34px;background:#002afe"><i>0.00</i></div><div class="c" style="left:409px;top:213px;width:34px;background:#002afe"><i>0.00</i></div><div class="c" style="left:443px;top:213px;width:34px;background:#002afe"><i>0.00</i></div><div class="c" style="left:477px;top:213px;width:34px;background:#002afe"><i>0.00</i></div><div class="c" style="left:511px;top:213px;width:34px;background:#002afe"><i>0.00</i></div><div class="c" style="left:545px;top:213px;width:34px;background:#002afe"><i>0.00</i></div><div class="c" style="left:579px;top:213px;width:34px;background:#002afe"><i>0.00</i></div><div class="c" style="left:613px;top:213px;width:34px;background:#002afe"><i>0.00</i></div><div class="c" style="left:647px;top:213px;width:40px;background:#002afe"><i>0.00</i></div><div class="c" style="left:687px;top:213px;width:40px;background:#002afe"><i>0.00</i></div><div class="c" style="left:727px;top:213px;width:40px;background:#002afe"><i>0.00</i></div><div class="c" style="left:767px;top:213px;width:40px;background:#002afe"><i>0.00</i></div><div class="c" style="left:807px;top:213px;width:40px;background:#002afe"><i>0.00</i></div><div class="c" style="left:847px;top:213px;width:40px;background:#b8ec00"><i>71.40</i></div><div class="c" style="left:887px;top:213px;width:40px;background:#baec00"><i>71.64</i></div><div class="c" style="left:927px;top:213px;width:40px;background:#bcec00"><i>71.85</i></div><div class="c" style="left:967px;top:213px;width:40px;background:#beec00"><i>72.06</i></div><div class="c" style="left:1007px;top:213px;width:40px;background:#c0ec00"><i>72.30</i></div><div class="c" style="left:1047px;top:213px;width:40px;background:#c3ec00"><i>72.60</i></div><div class="c" style="left:1087px;top:213px;width:40px;background:#c7ec00"><i>72.96</i></div><div class="c" style="left:1127px;top:213px;width:40px;background:#caec00"><i>73.32</i></div><div class="c" style="left:1167px;top:213px;width:40px;background:#cdec00"><i>73.68</i></div><div class="c" style="left:1207px;top:213px;width:40px;background:#d1ec00"><i>74.04</i></div><div class="c" style="left:1247px;top:213px;width:40px;background:#d5ec00"><i>74.43</i></div><div class="c" style="left:1287px;top:213px;width:40px;background:#d8ec00"><i>74.82</i></div><div class="c" style="left:1327px;top:213px;width:40px;background:#dcec00"><i>75.18</i></div><div class="c" style="left:1367px;top:213px;width:40px;background:#e2ec00"><i>75.90</i></div><div class="c" style="left:1407px;top:213px;width:40px;background:#e2ec00"><i>75.90</i></div><div class="c" style="left:1447px;top:213px;width:40px;background:#e2ec00"><i>75.90</i></div><div class="c" style="left:341px;top:228px;width:34px;background:#002afe"><i>0.00</i></div><div class="c" style="left:375px;top:228px;width:34px;background:#002afe"><i>0.00</i></div><div class="c" style="left:409px;top:228px;width:34px;background:#002afe"><i>0.00</i></div><div class="c" style="left:443px;top:228px;width:34px;background:#002afe"><i>0.00</i></div><div class="c" style="left:477px;top:228px;width:34px;background:#002afe"><i>0.00</i></div><div class="c" style="left:511px;top:228px;width:34px;background:#002afe"><i>0.00</i></div><div class="c" style="left:545px;top:228px;width:34px;background:#002afe"><i>0.00</i></div><div class="c" style="left:579px;top:228px;width:34px;background:#002afe"><i>0.00</i></div><div class="c" style="left:613px;top:228px;width:34px;background:#002afe"><i>0.00</i></div><div class="c" style="left:647px;top:228px;width:40px;background:#002afe"><i>0.00</i></div><div class="c" style="left:687px;top:228px;width:40px;background:#002afe"><i>0.00</i></div><div class="c" style="left:727px;top:228px;width:40px;background:#002afe"><i>0.00</i></div><div class="c" style="left:767px;top:228px;width:40px;background:#002afe"><i>0.00</i></div><div class="c" style="left:807px;top:228px;width:40px;background:#002afe"><i>0.00</i></div><div class="c" style="left:847px;top:228px;width:40px;background:#b8ec00"><i>71.40</i></div><div class="c" style="left:887px;top:228px;width:40px;background:#baec00"><i>71.64</i></div><div class="c" style="left:927px;top:228px;width:40px;background:#bcec00"><i>71.85</i></div><div class="c" style="left:967px;top:228px;width:40px;background:#beec00"><i>72.06</i></div><div class="c" style="left:1007px;top:228px;width:40px;background:#c0ec00"><i>72.30</i></div><div class="c" style="left:1047px;top:228px;width:40px;background:#c3ec00"><i>72.60</i></div><div class="c" style="left:1087px;top:228px;width:40px;background:#c7ec00"><i>72.96</i></div><div class="c" style="left:1127px;top:228px;width:40px;background:#caec00"><i>73.32</i></div><div class="c" style="left:1167px;top:228px;width:40px;background:#cdec00"><i>73.68</i></div><div class="c" style="left:1207px;top:228px;width:40px;background:#d1ec00"><i>74.04</i></div><div class="c" style="left:1247px;top:228px;width:40px;background:#d5ec00"><i>74.43</i></div><div class="c" style="left:1287px;top:228px;width:40px;background:#d8ec00"><i>74.82</i></div><div class="c" style="left:1327px;top:228px;width:40px;background:#dcec00"><i>75.18</i></div><div class="c" style="left:1367px;top:228px;width:40px;background:#e2ec00"><i>75.90</i></div><div class="c" style="left:1407px;top:228px;width:40px;background:#e2ec00"><i>75.90</i></div><div class="c" style="left:1447px;top:228px;width:40px;background:#e2ec00"><i>75.90</i></div><div class="c" style="left:341px;top:243px;width:34px;background:#002afe"><i>0.00</i></div><div class="c" style="left:375px;top:243px;width:34px;background:#002afe"><i>0.00</i></div><div class="c" style="left:409px;top:243px;width:34px;background:#002afe"><i>0.00</i></div><div class="c" style="left:443px;top:243px;width:34px;background:#002afe"><i>0.00</i></div><div class="c" style="left:477px;top:243px;width:34px;background:#002afe"><i>0.00</i></div><div class="c" style="left:511px;top:243px;width:34px;background:#002afe"><i>0.00</i></div><div class="c" style="left:545px;top:243px;width:34px;background:#002afe"><i>0.00</i></div><div class="c" style="left:579px;top:243px;width:34px;background:#002afe"><i>0.00</i></div><div class="c" style="left:613px;top:243px;width:34px;background:#002afe"><i>0.00</i></div><div class="c" style="left:647px;top:243px;width:40px;background:#002afe"><i>0.00</i></div><div class="c" style="left:687px;top:243px;width:40px;background:#002afe"><i>0.00</i></div><div class="c" style="left:727px;top:243px;width:40px;background:#002afe"><i>0.00</i></div><div class="c" style="left:767px;top:243px;width:40px;background:#002afe"><i>0.00</i></div><div class="c" style="left:807px;top:243px;width:40px;background:#002afe"><i>0.00</i></div><div class="c" style="left:847px;top:243px;width:40px;background:#b8ec00"><i>71.40</i></div><div class="c" style="left:887px;top:243px;width:40px;background:#baec00"><i>71.64</i></div><div class="c" style="left:927px;top:243px;width:40px;background:#bcec00"><i>71.85</i></div><div class="c" style="left:967px;top:243px;width:40px;background:#beec00"><i>72.06</i></div><div class="c" style="left:1007px;top:243px;width:40px;background:#c0ec00"><i>72.30</i></div><div class="c" style="left:1047px;top:243px;width:40px;background:#c3ec00"><i>72.60</i></div><div class="c" style="left:1087px;top:243px;width:40px;background:#c7ec00"><i>72.96</i></div><div class="c" style="left:1127px;top:243px;width:40px;background:#caec00"><i>73.32</i></div><div class="c" style="left:1167px;top:243px;width:40px;background:#cdec00"><i>73.68</i></div><div class="c" style="left:1207px;top:243px;width:40px;background:#d1ec00"><i>74.04</i></div><div class="c" style="left:1247px;top:243px;width:40px;background:#d5ec00"><i>74.43</i></div><div class="c" style="left:1287px;top:243px;width:40px;background:#deec00"><i>75.48</i></div><div class="c" style="left:1327px;top:243px;width:40px;background:#dcec00"><i>75.18</i></div><div class="c" style="left:1367px;top:243px;width:40px;background:#e2ec00"><i>75.90</i></div><div class="c" style="left:1407px;top:243px;width:40px;background:#e2ec00"><i>75.90</i></div><div class="c" style="left:1447px;top:243px;width:40px;background:#e2ec00"><i>75.90</i></div><div class="c" style="left:341px;top:258px;width:34px;background:#002afe"><i>0.00</i></div><div class="c" style="left:375px;top:258px;width:34px;background:#002afe"><i>0.00</i></div><div class="c" style="left:409px;top:258px;width:34px;background:#002afe"><i>0.00</i></div><div class="c" style="left:443px;top:258px;width:34px;background:#002afe"><i>0.00</i></div><div class="c" style="left:477px;top:258px;width:34px;background:#002afe"><i>0.00</i></div><div class="c" style="left:511px;top:258px;width:34px;background:#002afe"><i>0.00</i></div><div class="c" style="left:545px;top:258px;width:34px;background:#002afe"><i>0.00</i></div><div class="c" style="left:579px;top:258px;width:34px;background:#002afe"><i>0.00</i></div><div class="c" style="left:613px;top:258px;width:34px;background:#002afe"><i>0.00</i></div><div class="c" style="left:647px;top:258px;width:40px;background:#002afe"><i>0.00</i></div><div class="c" style="left:687px;top:258px;width:40px;background:#002afe"><i>0.00</i></div><div class="c" style="left:727px;top:258px;width:40px;background:#002afe"><i>0.00</i></div><div class="c" style="left:767px;top:258px;width:40px;background:#002afe"><i>0.00</i></div><div class="c" style="left:807px;top:258px;width:40px;background:#002afe"><i>0.00</i></div><div class="c" style="left:847px;top:258px;width:40px;background:#b9ec00"><i>71.57</i></div><div class="c" style="left:887px;top:258px;width:40px;background:#baec00"><i>71.64</i></div><div class="c" style="left:927px;top:258px;width:40px;background:#bcec00"><i>71.85</i></div><div class="c" style="left:967px;top:258px;width:40px;background:#c3ec00"><i>72.57</i></div><div class="c" style="left:1007px;top:258px;width:40px;background:#c7ec00"><i>72.96</i></div><div class="c" style="left:1047px;top:258px;width:40px;background:#c3ec00"><i>72.60</i></div><div class="c" style="left:1087px;top:258px;width:40px;background:#c7ec00"><i>72.96</i></div><div class="c" style="left:1127px;top:258px;width:40px;background:#caec00"><i>73.32</i></div><div class="c" style="left:1167px;top:258px;width:40px;background:#d4ec00"><i>74.34</i></div><div class="c" style="left:1207px;top:258px;width:40px;background:#daec00"><i>74.97</i></div><div class="c" style="left:1247px;top:258px;width:40px;background:#ddec00"><i>75.30</i></div><div class="c" style="left:1287px;top:258px;width:40px;background:#e5ec00"><i>76.14</i></div><div class="c" style="left:1327px;top:258px;width:40px;background:#e5ec00"><i>76.20</i></div><div class="c" style="left:1367px;top:258px;width:40px;background:#e2ec00"><i>75.90</i></div><div class="c" style="left:1407px;top:258px;width:40px;background:#e2ec00"><i>75.90</i></div><div class="c" style="left:1447px;top:258px;width:40px;background:#e2ec00"><i>75.90</i></div><div class="c" style="left:341px;top:273px;width:34px;background:#002afe"><i>0.00</i></div><div class="c" style="left:375px;top:273px;width:34px;background:#002afe"><i>0.00</i></div><div class="c" style="left:409px;top:273px;width:34px;background:#002afe"><i>0.00</i></div><div class="c" style="left:443px;top:273px;width:34px;background:#002afe"><i>0.00</i></div><div class="c" style="left:477px;top:273px;width:34px;background:#002afe"><i>0.00</i></div><div class="c" style="left:511px;top:273px;width:34px;background:#002afe"><i>0.00</i></div><div class="c" style="left:545px;top:273px;width:34px;background:#002afe"><i>0.00</i></div><div class="c" style="left:579px;top:273px;width:34px;background:#002afe"><i>0.00</i></div><div class="c" style="left:613px;top:273px;width:34px;background:#002afe"><i>0.00</i></div><div class="c" style="left:647px;top:273px;width:40px;background:#002afe"><i>0.00</i></div><div class="c" style="left:687px;top:273px;width:40px;background:#002afe"><i>0.00</i></div><div class="c" style="left:727px;top:273px;width:40px;background:#002afe"><i>0.00</i></div><div class="c" style="left:767px;top:273px;width:40px;background:#002afe"><i>0.00</i></div><div class="c" style="left:807px;top:273px;width:40px;background:#002afe"><i>0.00</i></div><div class="c" style="left:847px;top:273px;width:40px;background:#c2ec00"><i>72.47</i></div><div class="c" style="left:887px;top:273px;width:40px;background:#c8ec00"><i>73.11</i></div><div class="c" style="left:927px;top:273px;width:40px;background:#c7ec00"><i>73.02</i></div><div class="c" style="left:967px;top:273px;width:40px;background:#cfec00"><i>73.89</i></div><div class="c" style="left:1007px;top:273px;width:40px;background:#d3ec00"><i>74.22</i></div><div class="c" style="left:1047px;top:273px;width:40px;background:#cfec00"><i>73.83</i></div><div class="c" style="left:1087px;top:273px;width:40px;background:#ceec00"><i>73.77</i></div><div class="c" style="left:1127px;top:273px;width:40px;background:#d7ec00"><i>74.67</i></div><div class="c" style="left:1167px;top:273px;width:40px;background:#dbec00"><i>75.12</i></div><div class="c" style="left:1207px;top:273px;width:40px;background:#e0ec00"><i>75.66</i></div><div class="c" style="left:1247px;top:273px;width:40px;background:#e8ec00"><i>76.44</i></div><div class="c" style="left:1287px;top:273px;width:40px;background:#eeec00"><i>77.13</i></div><div class="c" style="left:1327px;top:273px;width:40px;background:#ecec00"><i>76.92</i></div><div class="c" style="left:1367px;top:273px;width:40px;background:#efec00"><i>77.25</i></div><div class="c" style="left:1407px;top:273px;width:40px;background:#efec00"><i>77.25</i></div><div class="c" style="left:1447px;top:273px;width:40px;background:#efec00"><i>77.25</i></div><div class="c" style="left:341px;top:288px;width:34px;background:#002afe"><i>0.00</i></div><div class="c" style="left:375px;top:288px;width:34px;background:#002afe"><i>0.00</i></div><div class="c" style="left:409px;top:288px;width:34px;background:#002afe"><i>0.00</i></div><div class="c" style="left:443px;top:288px;width:34px;background:#002afe"><i>0.00</i></div><div class="c" style="left:477px;top:288px;width:34px;background:#002afe"><i>0.00</i></div><div class="c" style="left:511px;top:288px;width:34px;background:#002afe"><i>0.00</i></div><div class="c" style="left:545px;top:288px;width:34px;background:#002afe"><i>0.00</i></div><div class="c" style="left:579px;top:288px;width:34px;background:#002afe"><i>0.00</i></div><div class="c" style="left:613px;top:288px;width:34px;background:#002afe"><i>0.00</i></div><div class="c" style="left:647px;top:288px;width:40px;background:#002afe"><i>0.00</i></div><div class="c" style="left:687px;top:288px;width:40px;background:#002afe"><i>0.00</i></div><div class="c" style="left:727px;top:288px;width:40px;background:#002afe"><i>0.00</i></div><div class="c" style="left:767px;top:288px;width:40px;background:#002afe"><i>0.00</i></div><div class="c" style="left:807px;top:288px;width:40px;background:#002afe"><i>0.00</i></div><div class="c" style="left:847px;top:288px;width:40px;background:#ceec00"><i>73.79</i></div><div class="c" style="left:887px;top:288px;width:40px;background:#d2ec00"><i>74.19</i></div><div class="c" style="left:927px;top:288px;width:40px;background:#d2ec00"><i>74.16</i></div><div class="c" style="left:967px;top:288px;width:40px;background:#dbec00"><i>75.12</i></div><div class="c" style="left:1007px;top:288px;width:40px;background:#deec00"><i>75.45</i></div><div class="c" style="left:1047px;top:288px;width:40px;background:#d8ec00"><i>74.85</i></div><div class="c" style="left:1087px;top:288px;width:40px;background:#d7ec00"><i>74.70</i></div><div class="c" style="left:1127px;top:288px;width:40px;background:#e1ec00"><i>75.78</i></div><div class="c" style="left:1167px;top:288px;width:40px;background:#e6ec00"><i>76.26</i></div><div class="c" style="left:1207px;top:288px;width:40px;background:#efec00"><i>77.22</i></div><div class="c" style="left:1247px;top:288px;width:40px;background:#ecec00"><i>76.89</i></div><div class="c" style="left:1287px;top:288px;width:40px;background:#f2ec00"><i>77.55</i></div><div class="c" style="left:1327px;top:288px;width:40px;background:#f1ec00"><i>77.40</i></div><div class="c" style="left:1367px;top:288px;width:40px;background:#f3ec00"><i>77.67</i></div><div class="c" style="left:1407px;top:288px;width:40px;background:#f3ec00"><i>77.67</i></div><div class="c" style="left:1447px;top:288px;width:40px;background:#f3ec00"><i>77.67</i></div><div class="c" style="left:341px;top:303px;width:34px;background:#002afe"><i>0.00</i></div><div class="c" style="left:375px;top:303px;width:34px;background:#002afe"><i>0.00</i></div><div class="c" style="left:409px;top:303px;width:34px;background:#002afe"><i>0.00</i></div><div class="c" style="left:443px;top:303px;width:34px;background:#002afe"><i>0.00</i></div><div class="c" style="left:477px;top:303px;width:34px;background:#002afe"><i>0.00</i></div><div class="c" style="left:511px;top:303px;width:34px;background:#002afe"><i>0.00</i></div><div class="c" style="left:545px;top:303px;width:34px;background:#002afe"><i>0.00</i></div><div class="c" style="left:579px;top:303px;width:34px;background:#002afe"><i>0.00</i></div><div class="c" style="left:613px;top:303px;width:34px;background:#002afe"><i>0.00</i></div><div class="c" style="left:647px;top:303px;width:40px;background:#002afe"><i>0.00</i></div><div class="c" style="left:687px;top:303px;width:40px;background:#002afe"><i>0.00</i></div><div class="c" style="left:727px;top:303px;width:40px;background:#002afe"><i>0.00</i></div><div class="c" style="left:767px;top:303px;width:40px;background:#002afe"><i>0.00</i></div><div class="c" style="left:807px;top:303px;width:40px;background:#002afe"><i>0.00</i></div><div class="c" style="left:847px;top:303px;width:40px;background:#e0ec00"><i>75.60</i></div><div class="c" style="left:887px;top:303px;width:40px;background:#dfec00"><i>75.54</i></div><div class="c" style="left:927px;top:303px;width:40px;background:#dcec00"><i>75.27</i></div><div class="c" style="left:967px;top:303px;width:40px;background:#e6ec00"><i>76.32</i></div><div class="c" style="left:1007px;top:303px;width:40px;background:#f1ec00"><i>77.43</i></div><div class="c" style="left:1047px;top:303px;width:40px;background:#ebec00"><i>76.80</i></div><div class="c" style="left:1087px;top:303px;width:40px;background:#e6ec00"><i>76.32</i></div><div class="c" style="left:1127px;top:303px;width:40px;background:#f1ec00"><i>77.49</i></div><div class="c" style="left:1167px;top:303px;width:40px;background:#f4ec00"><i>77.73</i></div><div class="c" style="left:1207px;top:303px;width:40px;background:#ffea00"><i>79.11</i></div><div class="c" style="left:1247px;top:303px;width:40px;background:#feec00"><i>78.84</i></div><div class="c" style="left:1287px;top:303px;width:40px;background:#fdec00"><i>78.72</i></div><div class="c" style="left:1327px;top:303px;width:40px;background:#f8ec00"><i>78.21</i></div><div class="c" style="left:1367px;top:303px;width:40px;background:#faec00"><i>78.39</i></div><div class="c" style="left:1407px;top:303px;width:40px;background:#faec00"><i>78.39</i></div><div class="c" style="left:1447px;top:303px;width:40px;background:#faec00"><i>78.39</i></div><div class="c" style="left:341px;top:318px;width:34px;background:#002afe"><i>0.00</i></div><div class="c" style="left:375px;top:318px;width:34px;background:#002afe"><i>0.00</i></div><div class="c" style="left:409px;top:318px;width:34px;background:#002afe"><i>0.00</i></div><div class="c" style="left:443px;top:318px;width:34px;background:#002afe"><i>0.00</i></div><div class="c" style="left:477px;top:318px;width:34px;background:#002afe"><i>0.00</i></div><div class="c" style="left:511px;top:318px;width:34px;background:#002afe"><i>0.00</i></div><div class="c" style="left:545px;top:318px;width:34px;background:#002afe"><i>0.00</i></div><div class="c" style="left:579px;top:318px;width:34px;background:#002afe"><i>0.00</i></div><div class="c" style="left:613px;top:318px;width:34px;background:#002afe"><i>0.00</i></div><div class="c" style="left:647px;top:318px;width:40px;background:#002afe"><i>0.00</i></div><div class="c" style="left:687px;top:318px;width:40px;background:#002afe"><i>0.00</i></div><div class="c" style="left:727px;top:318px;width:40px;background:#002afe"><i>0.00</i></div><div class="c" style="left:767px;top:318px;width:40px;background:#002afe"><i>0.00</i></div><div class="c" style="left:807px;top:318px;width:40px;background:#002afe"><i>0.00</i></div><div class="c" style="left:847px;top:318px;width:40px;background:#dcec00"><i>75.23</i></div><div class="c" style="left:887px;top:318px;width:40px;background:#e5ec00"><i>76.20</i></div><div class="c" style="left:927px;top:318px;width:40px;background:#ecec00"><i>76.89</i></div><div class="c" style="left:967px;top:318px;width:40px;background:#efec00"><i>77.28</i></div><div class="c" style="left:1007px;top:318px;width:40px;background:#f2ec00"><i>77.55</i></div><div class="c" style="left:1047px;top:318px;width:40px;background:#faec00"><i>78.42</i></div><div class="c" style="left:1087px;top:318px;width:40px;background:#f5ec00"><i>77.91</i></div><div class="c" style="left:1127px;top:318px;width:40px;background:#fbec00"><i>78.51</i></div><div class="c" style="left:1167px;top:318px;width:40px;background:#feec00"><i>78.78</i></div><div class="c" style="left:1207px;top:318px;width:40px;background:#ffdf00"><i>80.46</i></div><div class="c" style="left:1247px;top:318px;width:40px;background:#ffe400"><i>79.86</i></div><div class="c" style="left:1287px;top:318px;width:40px;background:#ffe700"><i>79.47</i></div><div class="c" style="left:1327px;top:318px;width:40px;background:#ffec00"><i>78.90</i></div><div class="c" style="left:1367px;top:318px;width:40px;background:#ffec00"><i>78.96</i></div><div class="c" style="left:1407px;top:318px;width:40px;background:#ffec00"><i>78.96</i></div><div class="c" style="left:1447px;top:318px;width:40px;background:#ffec00"><i>78.96</i></div><div class="c" style="left:341px;top:333px;width:34px;background:#002afe"><i>0.00</i></div><div class="c" style="left:375px;top:333px;width:34px;background:#002afe"><i>0.00</i></div><div class="c" style="left:409px;top:333px;width:34px;background:#002afe"><i>0.00</i></div><div class="c" style="left:443px;top:333px;width:34px;background:#002afe"><i>0.00</i></div><div class="c" style="left:477px;top:333px;width:34px;background:#002afe"><i>0.00</i></div><div class="c" style="left:511px;top:333px;width:34px;background:#002afe"><i>0.00</i></div><div class="c" style="left:545px;top:333px;width:34px;background:#002afe"><i>0.00</i></div><div class="c" style="left:579px;top:333px;width:34px;background:#002afe"><i>0.00</i></div><div class="c" style="left:613px;top:333px;width:34px;background:#002afe"><i>0.00</i></div><div class="c" style="left:647px;top:333px;width:40px;background:#002afe"><i>0.00</i></div><div class="c" style="left:687px;top:333px;width:40px;background:#002afe"><i>0.00</i></div><div class="c" style="left:727px;top:333px;width:40px;background:#002afe"><i>0.00</i></div><div class="c" style="left:767px;top:333px;width:40px;background:#002afe"><i>0.00</i></div><div class="c" style="left:807px;top:333px;width:40px;background:#002afe"><i>0.00</i></div><div class="c" style="left:847px;top:333px;width:40px;background:#eeec00"><i>77.16</i></div><div class="c" style="left:887px;top:333px;width:40px;background:#f5ec00"><i>77.88</i></div><div class="c" style="left:927px;top:333px;width:40px;background:#edec00"><i>77.07</i></div><div class="c" style="left:967px;top:333px;width:40px;background:#eeec00"><i>77.10</i></div><div class="c" style="left:1007px;top:333px;width:40px;background:#fbec00"><i>78.45</i></div><div class="c" style="left:1047px;top:333px;width:40px;background:#ffe400"><i>79.80</i></div><div class="c" style="left:1087px;top:333px;width:40px;background:#ffe700"><i>79.47</i></div><div class="c" style="left:1127px;top:333px;width:40px;background:#ffe000"><i>80.28</i></div><div class="c" style="left:1167px;top:333px;width:40px;background:#ffe300"><i>79.95</i></div><div class="c" style="left:1207px;top:333px;width:40px;background:#ffdb00"><i>80.88</i></div><div class="c" style="left:1247px;top:333px;width:40px;background:#ffe400"><i>79.86</i></div><div class="c" style="left:1287px;top:333px;width:40px;background:#ffda00"><i>80.94</i></div><div class="c" style="left:1327px;top:333px;width:40px;background:#ffdd00"><i>80.64</i></div><div class="c" style="left:1367px;top:333px;width:40px;background:#ffe400"><i>79.89</i></div><div class="c" style="left:1407px;top:333px;width:40px;background:#ffe400"><i>79.89</i></div><div class="c" style="left:1447px;top:333px;width:40px;background:#ffe400"><i>79.89</i></div><div class="c" style="left:341px;top:348px;width:34px;background:#002afe"><i>0.00</i></div><div class="c" style="left:375px;top:348px;width:34px;background:#002afe"><i>0.00</i></div><div class="c" style="left:409px;top:348px;width:34px;background:#002afe"><i>0.00</i></div><div class="c" style="left:443px;top:348px;width:34px;background:#002afe"><i>0.00</i></div><div class="c" style="left:477px;top:348px;width:34px;background:#002afe"><i>0.00</i></div><div class="c" style="left:511px;top:348px;width:34px;background:#002afe"><i>0.00</i></div><div class="c" style="left:545px;top:348px;width:34px;background:#002afe"><i>0.00</i></div><div class="c" style="left:579px;top:348px;width:34px;background:#002afe"><i>0.00</i></div><div class="c" style="left:613px;top:348px;width:34px;background:#002afe"><i>0.00</i></div><div class="c" style="left:647px;top:348px;width:40px;background:#002afe"><i>0.00</i></div><div class="c" style="left:687px;top:348px;width:40px;background:#002afe"><i>0.00</i></div><div class="c" style="left:727px;top:348px;width:40px;background:#002afe"><i>0.00</i></div><div class="c" style="left:767px;top:348px;width:40px;background:#002afe"><i>0.00</i></div><div class="c" style="left:807px;top:348px;width:40px;background:#002afe"><i>0.00</i></div><div class="c" style="left:847px;top:348px;width:40px;background:#feec00"><i>78.85</i></div><div class="c" style="left:887px;top:348px;width:40px;background:#feec00"><i>78.78</i></div><div class="c" style="left:927px;top:348px;width:40px;background:#efec00"><i>77.22</i></div><div class="c" style="left:967px;top:348px;width:40px;background:#eeec00"><i>77.10</i></div><div class="c" style="left:1007px;top:348px;width:40px;background:#ffea00"><i>79.14</i></div><div class="c" style="left:1047px;top:348px;width:40px;background:#ffde00"><i>80.49</i></div><div class="c" style="left:1087px;top:348px;width:40px;background:#ffdf00"><i>80.43</i></div><div class="c" style="left:1127px;top:348px;width:40px;background:#ffd400"><i>81.72</i></div><div class="c" style="left:1167px;top:348px;width:40px;background:#ffd400"><i>81.69</i></div><div class="c" style="left:1207px;top:348px;width:40px;background:#ffd500"><i>81.57</i></div><div class="c" style="left:1247px;top:348px;width:40px;background:#ffd900"><i>81.09</i></div><div class="c" style="left:1287px;top:348px;width:40px;background:#ffd800"><i>81.24</i></div><div class="c" style="left:1327px;top:348px;width:40px;background:#ffd300"><i>81.81</i></div><div class="c" style="left:1367px;top:348px;width:40px;background:#ffe700"><i>79.50</i></div><div class="c" style="left:1407px;top:348px;width:40px;background:#ffe700"><i>79.50</i></div><div class="c" style="left:1447px;top:348px;width:40px;background:#ffe700"><i>79.50</i></div><div class="c" style="left:341px;top:363px;width:34px;background:#002afe"><i>0.00</i></div><div class="c" style="left:375px;top:363px;width:34px;background:#002afe"><i>0.00</i></div><div class="c" style="left:409px;top:363px;width:34px;background:#002afe"><i>0.00</i></div><div class="c" style="left:443px;top:363px;width:34px;background:#002afe"><i>0.00</i></div><div class="c" style="left:477px;top:363px;width:34px;background:#002afe"><i>0.00</i></div><div class="c" style="left:511px;top:363px;width:34px;background:#002afe"><i>0.00</i></div><div class="c" style="left:545px;top:363px;width:34px;background:#002afe"><i>0.00</i></div><div class="c" style="left:579px;top:363px;width:34px;background:#002afe"><i>0.00</i></div><div class="c" style="left:613px;top:363px;width:34px;background:#002afe"><i>0.00</i></div><div class="c" style="left:647px;top:363px;width:40px;background:#002afe"><i>0.00</i></div><div class="c" style="left:687px;top:363px;width:40px;background:#002afe"><i>0.00</i></div><div class="c" style="left:727px;top:363px;width:40px;background:#002afe"><i>0.00</i></div><div class="c" style="left:767px;top:363px;width:40px;background:#002afe"><i>0.00</i></div><div class="c" style="left:807px;top:363px;width:40px;background:#002afe"><i>0.00</i></div><div class="c" style="left:847px;top:363px;width:40px;background:#e6ec00"><i>76.33</i></div><div class="c" style="left:887px;top:363px;width:40px;background:#ebec00"><i>76.83</i></div><div class="c" style="left:927px;top:363px;width:40px;background:#e4ec00"><i>76.11</i></div><div class="c" style="left:967px;top:363px;width:40px;background:#ebec00"><i>76.86</i></div><div class="c" style="left:1007px;top:363px;width:40px;background:#f4ec00"><i>77.76</i></div><div class="c" style="left:1047px;top:363px;width:40px;background:#ffd200"><i>81.84</i></div><div class="c" style="left:1087px;top:363px;width:40px;background:#ffeb00"><i>78.99</i></div><div class="c" style="left:1127px;top:363px;width:40px;background:#ffe400"><i>79.86</i></div><div class="c" style="left:1167px;top:363px;width:40px;background:#ffe400"><i>79.89</i></div><div class="c" style="left:1207px;top:363px;width:40px;background:#ffe900"><i>79.32</i></div><div class="c" style="left:1247px;top:363px;width:40px;background:#fcec00"><i>78.66</i></div><div class="c" style="left:1287px;top:363px;width:40px;background:#fcec00"><i>78.60</i></div><div class="c" style="left:1327px;top:363px;width:40px;background:#ffe300"><i>79.98</i></div><div class="c" style="left:1367px;top:363px;width:40px;background:#ffe300"><i>80.01</i></div><div class="c" style="left:1407px;top:363px;width:40px;background:#ffe300"><i>80.01</i></div><div class="c" style="left:1447px;top:363px;width:40px;background:#ffe300"><i>80.01</i></div><div class="c" style="left:341px;top:378px;width:34px;background:#002afe"><i>0.00</i></div><div class="c" style="left:375px;top:378px;width:34px;background:#002afe"><i>0.00</i></div><div class="c" style="left:409px;top:378px;width:34px;background:#002afe"><i>0.00</i></div><div class="c" style="left:443px;top:378px;width:34px;background:#002afe"><i>0.00</i></div><div class="c" style="left:477px;top:378px;width:34px;background:#002afe"><i>0.00</i></div><div class="c" style="left:511px;top:378px;width:34px;background:#002afe"><i>0.00</i></div><div class="c" style="left:545px;top:378px;width:34px;background:#002afe"><i>0.00</i></div><div class="c" style="left:579px;top:378px;width:34px;background:#002afe"><i>0.00</i></div><div class="c" style="left:613px;top:378px;width:34px;background:#002afe"><i>0.00</i></div><div class="c" style="left:647px;top:378px;width:40px;background:#002afe"><i>0.00</i></div><div class="c" style="left:687px;top:378px;width:40px;background:#002afe"><i>0.00</i></div><div class="c" style="left:727px;top:378px;width:40px;background:#002afe"><i>0.00</i></div><div class="c" style="left:767px;top:378px;width:40px;background:#002afe"><i>0.00</i></div><div class="c" style="left:807px;top:378px;width:40px;background:#002afe"><i>0.00</i></div><div class="c" style="left:847px;top:378px;width:40px;background:#f0ec00"><i>77.38</i></div><div class="c" style="left:887px;top:378px;width:40px;background:#f1ec00"><i>77.43</i></div><div class="c" style="left:927px;top:378px;width:40px;background:#e4ec00"><i>76.02</i></div><div class="c" style="left:967px;top:378px;width:40px;background:#dfec00"><i>75.51</i></div><div class="c" style="left:1007px;top:378px;width:40px;background:#e6ec00"><i>76.32</i></div><div class="c" style="left:1047px;top:378px;width:40px;background:#feec00"><i>78.78</i></div><div class="c" style="left:1087px;top:378px;width:40px;background:#ffea00"><i>79.11</i></div><div class="c" style="left:1127px;top:378px;width:40px;background:#ffe800"><i>79.41</i></div><div class="c" style="left:1167px;top:378px;width:40px;background:#ffe500"><i>79.74</i></div><div class="c" style="left:1207px;top:378px;width:40px;background:#ffe200"><i>80.07</i></div><div class="c" style="left:1247px;top:378px;width:40px;background:#ffdf00"><i>80.37</i></div><div class="c" style="left:1287px;top:378px;width:40px;background:#ffdc00"><i>80.70</i></div><div class="c" style="left:1327px;top:378px;width:40px;background:#ffda00"><i>81.03</i></div><div class="c" style="left:1367px;top:378px;width:40px;background:#ffd400"><i>81.66</i></div><div class="c" style="left:1407px;top:378px;width:40px;background:#ffd400"><i>81.66</i></div><div class="c" style="left:1447px;top:378px;width:40px;background:#ffd400"><i>81.66</i></div><div class="c" style="left:341px;top:393px;width:34px;background:#002afe"><i>0.00</i></div><div class="c" style="left:375px;top:393px;width:34px;background:#002afe"><i>0.00</i></div><div class="c" style="left:409px;top:393px;width:34px;background:#002afe"><i>0.00</i></div><div class="c" style="left:443px;top:393px;width:34px;background:#002afe"><i>0.00</i></div><div class="c" style="left:477px;top:393px;width:34px;background:#002afe"><i>0.00</i></div><div class="c" style="left:511px;top:393px;width:34px;background:#002afe"><i>0.00</i></div><div class="c" style="left:545px;top:393px;width:34px;background:#002afe"><i>0.00</i></div><div class="c" style="left:579px;top:393px;width:34px;background:#002afe"><i>0.00</i></div><div class="c" style="left:613px;top:393px;width:34px;background:#002afe"><i>0.00</i></div><div class="c" style="left:647px;top:393px;width:40px;background:#002afe"><i>0.00</i></div><div class="c" style="left:687px;top:393px;width:40px;background:#002afe"><i>0.00</i></div><div class="c" style="left:727px;top:393px;width:40px;background:#002afe"><i>0.00</i></div><div class="c" style="left:767px;top:393px;width:40px;background:#002afe"><i>0.00</i></div><div class="c" style="left:807px;top:393px;width:40px;background:#002afe"><i>0.00</i></div><div class="c" style="left:847px;top:393px;width:40px;background:#ffda00"><i>80.94</i></div><div class="c" style="left:887px;top:393px;width:40px;background:#ffda00"><i>80.94</i></div><div class="c" style="left:927px;top:393px;width:40px;background:#ffdf00"><i>80.37</i></div><div class="c" style="left:967px;top:393px;width:40px;background:#ffe300"><i>79.92</i></div><div class="c" style="left:1007px;top:393px;width:40px;background:#ffe500"><i>79.68</i></div><div class="c" style="left:1047px;top:393px;width:40px;background:#ffe700"><i>79.50</i></div><div class="c" style="left:1087px;top:393px;width:40px;background:#ffe400"><i>79.86</i></div><div class="c" style="left:1127px;top:393px;width:40px;background:#ffe100"><i>80.19</i></div><div class="c" style="left:1167px;top:393px;width:40px;background:#ffde00"><i>80.55</i></div><div class="c" style="left:1207px;top:393px;width:40px;background:#ffdb00"><i>80.91</i></div><div class="c" style="left:1247px;top:393px;width:40px;background:#ffd800"><i>81.24</i></div><div class="c" style="left:1287px;top:393px;width:40px;background:#ffd500"><i>81.60</i></div><div class="c" style="left:1327px;top:393px;width:40px;background:#ffd100"><i>81.96</i></div><div class="c" style="left:1367px;top:393px;width:40px;background:#ffcb00"><i>82.65</i></div><div class="c" style="left:1407px;top:393px;width:40px;background:#ffcb00"><i>82.65</i></div><div class="c" style="left:1447px;top:393px;width:40px;background:#ffcb00"><i>82.65</i></div><div class="c" style="left:341px;top:408px;width:34px;background:#002afe"><i>0.00</i></div><div class="c" style="left:375px;top:408px;width:34px;background:#002afe"><i>0.00</i></div><div class="c" style="left:409px;top:408px;width:34px;background:#002afe"><i>0.00</i></div><div class="c" style="left:443px;top:408px;width:34px;background:#002afe"><i>0.00</i></div><div class="c" style="left:477px;top:408px;width:34px;background:#002afe"><i>0.00</i></div><div class="c" style="left:511px;top:408px;width:34px;background:#002afe"><i>0.00</i></div><div class="c" style="left:545px;top:408px;width:34px;background:#002afe"><i>0.00</i></div><div class="c" style="left:579px;top:408px;width:34px;background:#002afe"><i>0.00</i></div><div class="c" style="left:613px;top:408px;width:34px;background:#002afe"><i>0.00</i></div><div class="c" style="left:647px;top:408px;width:40px;background:#002afe"><i>0.00</i></div><div class="c" style="left:687px;top:408px;width:40px;background:#002afe"><i>0.00</i></div><div class="c" style="left:727px;top:408px;width:40px;background:#002afe"><i>0.00</i></div><div class="c" style="left:767px;top:408px;width:40px;background:#002afe"><i>0.00</i></div><div class="c" style="left:807px;top:408px;width:40px;background:#002afe"><i>0.00</i></div><div class="c" style="left:847px;top:408px;width:40px;background:#f2ec00"><i>77.50</i></div><div class="c" style="left:887px;top:408px;width:40px;background:#ffe900"><i>79.23</i></div><div class="c" style="left:927px;top:408px;width:40px;background:#ffde00"><i>80.52</i></div><div class="c" style="left:967px;top:408px;width:40px;background:#ffd900"><i>81.09</i></div><div class="c" style="left:1007px;top:408px;width:40px;background:#ffe700"><i>79.47</i></div><div class="c" style="left:1047px;top:408px;width:40px;background:#ffe900"><i>79.32</i></div><div class="c" style="left:1087px;top:408px;width:40px;background:#feec00"><i>78.78</i></div><div class="c" style="left:1127px;top:408px;width:40px;background:#ffe400"><i>79.83</i></div><div class="c" style="left:1167px;top:408px;width:40px;background:#ffe200"><i>80.10</i></div><div class="c" style="left:1207px;top:408px;width:40px;background:#ffdf00"><i>80.37</i></div><div class="c" style="left:1247px;top:408px;width:40px;background:#ffdd00"><i>80.61</i></div><div class="c" style="left:1287px;top:408px;width:40px;background:#ffdb00"><i>80.88</i></div><div class="c" style="left:1327px;top:408px;width:40px;background:#ffd700"><i>81.27</i></div><div class="c" style="left:1367px;top:408px;width:40px;background:#ffd400"><i>81.66</i></div><div class="c" style="left:1407px;top:408px;width:40px;background:#ffd400"><i>81.66</i></div><div class="c" style="left:1447px;top:408px;width:40px;background:#ffd400"><i>81.66</i></div><div class="c" style="left:341px;top:423px;width:34px;background:#002afe"><i>0.00</i></div><div class="c" style="left:375px;top:423px;width:34px;background:#002afe"><i>0.00</i></div><div class="c" style="left:409px;top:423px;width:34px;background:#002afe"><i>0.00</i></div><div class="c" style="left:443px;top:423px;width:34px;background:#002afe"><i>0.00</i></div><div class="c" style="left:477px;top:423px;width:34px;background:#002afe"><i>0.00</i></div><div class="c" style="left:511px;top:423px;width:34px;background:#002afe"><i>0.00</i></div><div class="c" style="left:545px;top:423px;width:34px;background:#002afe"><i>0.00</i></div><div class="c" style="left:579px;top:423px;width:34px;background:#002afe"><i>0.00</i></div><div class="c" style="left:613px;top:423px;width:34px;background:#002afe"><i>0.00</i></div><div class="c" style="left:647px;top:423px;width:40px;background:#002afe"><i>0.00</i></div><div class="c" style="left:687px;top:423px;width:40px;background:#002afe"><i>0.00</i></div><div class="c" style="left:727px;top:423px;width:40px;background:#002afe"><i>0.00</i></div><div class="c" style="left:767px;top:423px;width:40px;background:#002afe"><i>0.00</i></div><div class="c" style="left:807px;top:423px;width:40px;background:#002afe"><i>0.00</i></div><div class="c" style="left:847px;top:423px;width:40px;background:#c6ec00"><i>72.90</i></div><div class="c" style="left:887px;top:423px;width:40px;background:#dcec00"><i>75.27</i></div><div class="c" style="left:927px;top:423px;width:40px;background:#faec00"><i>78.36</i></div><div class="c" style="left:967px;top:423px;width:40px;background:#ffeb00"><i>79.05</i></div><div class="c" style="left:1007px;top:423px;width:40px;background:#f6ec00"><i>78.00</i></div><div class="c" style="left:1047px;top:423px;width:40px;background:#ffe200"><i>80.04</i></div><div class="c" style="left:1087px;top:423px;width:40px;background:#fdec00"><i>78.72</i></div><div class="c" style="left:1127px;top:423px;width:40px;background:#ffeb00"><i>78.99</i></div><div class="c" style="left:1167px;top:423px;width:40px;background:#ffe600"><i>79.59</i></div><div class="c" style="left:1207px;top:423px;width:40px;background:#ffdb00"><i>80.91</i></div><div class="c" style="left:1247px;top:423px;width:40px;background:#ffdd00"><i>80.64</i></div><div class="c" style="left:1287px;top:423px;width:40px;background:#ffdc00"><i>80.73</i></div><div class="c" style="left:1327px;top:423px;width:40px;background:#ffd700"><i>81.30</i></div><div class="c" style="left:1367px;top:423px;width:40px;background:#ffd200"><i>81.90</i></div><div class="c" style="left:1407px;top:423px;width:40px;background:#ffd200"><i>81.90</i></div><div class="c" style="left:1447px;top:423px;width:40px;background:#ffd200"><i>81.90</i></div><div class="c" style="left:341px;top:438px;width:34px;background:#002afe"><i>0.00</i></div><div class="c" style="left:375px;top:438px;width:34px;background:#002afe"><i>0.00</i></div><div class="c" style="left:409px;top:438px;width:34px;background:#002afe"><i>0.00</i></div><div class="c" style="left:443px;top:438px;width:34px;background:#002afe"><i>0.00</i></div><div class="c" style="left:477px;top:438px;width:34px;background:#002afe"><i>0.00</i></div><div class="c" style="left:511px;top:438px;width:34px;background:#002afe"><i>0.00</i></div><div class="c" style="left:545px;top:438px;width:34px;background:#002afe"><i>0.00</i></div><div class="c" style="left:579px;top:438px;width:34px;background:#002afe"><i>0.00</i></div><div class="c" style="left:613px;top:438px;width:34px;background:#002afe"><i>0.00</i></div><div class="c" style="left:647px;top:438px;width:40px;background:#002afe"><i>0.00</i></div><div class="c" style="left:687px;top:438px;width:40px;background:#002afe"><i>0.00</i></div><div class="c" style="left:727px;top:438px;width:40px;background:#002afe"><i>0.00</i></div><div class="c" style="left:767px;top:438px;width:40px;background:#002afe"><i>0.00</i></div><div class="c" style="left:807px;top:438px;width:40px;background:#002afe"><i>0.00</i></div><div class="c" style="left:847px;top:438px;width:40px;background:#95ec00"><i>67.74</i></div><div class="c" style="left:887px;top:438px;width:40px;background:#a3ec00"><i>69.21</i></div><div class="c" style="left:927px;top:438px;width:40px;background:#b7ec00"><i>71.34</i></div><div class="c" style="left:967px;top:438px;width:40px;background:#c7ec00"><i>73.02</i></div><div class="c" style="left:1007px;top:438px;width:40px;background:#ceec00"><i>73.74</i></div><div class="c" style="left:1047px;top:438px;width:40px;background:#e2ec00"><i>75.90</i></div><div class="c" style="left:1087px;top:438px;width:40px;background:#edec00"><i>77.01</i></div><div class="c" style="left:1127px;top:438px;width:40px;background:#fcec00"><i>78.66</i></div><div class="c" style="left:1167px;top:438px;width:40px;background:#ffe500"><i>79.68</i></div><div class="c" style="left:1207px;top:438px;width:40px;background:#ffd600"><i>81.48</i></div><div class="c" style="left:1247px;top:438px;width:40px;background:#ffcf00"><i>82.20</i></div><div class="c" style="left:1287px;top:438px;width:40px;background:#ffd100"><i>81.96</i></div><div class="c" style="left:1327px;top:438px;width:40px;background:#ffd000"><i>82.14</i></div><div class="c" style="left:1367px;top:438px;width:40px;background:#ffce00"><i>82.35</i></div><div class="c" style="left:1407px;top:438px;width:40px;background:#ffce00"><i>82.35</i></div><div class="c" style="left:1447px;top:438px;width:40px;background:#ffce00"><i>82.35</i></div><div class="c" style="left:341px;top:453px;width:34px;background:#002afe"><i>0.00</i></div><div class="c" style="left:375px;top:453px;width:34px;background:#002afe"><i>0.00</i></div><div class="c" style="left:409px;top:453px;width:34px;background:#002afe"><i>0.00</i></div><div class="c" style="left:443px;top:453px;width:34px;background:#002afe"><i>0.00</i></div><div class="c" style="left:477px;top:453px;width:34px;background:#002afe"><i>0.00</i></div><div class="c" style="left:511px;top:453px;width:34px;background:#002afe"><i>0.00</i></div><div class="c" style="left:545px;top:453px;width:34px;background:#002afe"><i>0.00</i></div><div class="c" style="left:579px;top:453px;width:34px;background:#002afe"><i>0.00</i></div><div class="c" style="left:613px;top:453px;width:34px;background:#002afe"><i>0.00</i></div><div class="c" style="left:647px;top:453px;width:40px;background:#002afe"><i>0.00</i></div><div class="c" style="left:687px;top:453px;width:40px;background:#002afe"><i>0.00</i></div><div class="c" style="left:727px;top:453px;width:40px;background:#002afe"><i>0.00</i></div><div class="c" style="left:767px;top:453px;width:40px;background:#002afe"><i>0.00</i></div><div class="c" style="left:807px;top:453px;width:40px;background:#002afe"><i>0.00</i></div><div class="c" style="left:847px;top:453px;width:40px;background:#58eb00"><i>61.28</i></div><div class="c" style="left:887px;top:453px;width:40px;background:#70eb00"><i>63.81</i></div><div class="c" style="left:927px;top:453px;width:40px;background:#89ec00"><i>66.39</i></div><div class="c" style="left:967px;top:453px;width:40px;background:#96ec00"><i>67.86</i></div><div class="c" style="left:1007px;top:453px;width:40px;background:#9dec00"><i>68.58</i></div><div class="c" style="left:1047px;top:453px;width:40px;background:#b0ec00"><i>70.53</i></div><div class="c" style="left:1087px;top:453px;width:40px;background:#dbec00"><i>75.09</i></div><div class="c" style="left:1127px;top:453px;width:40px;background:#ffeb00"><i>79.08</i></div><div class="c" style="left:1167px;top:453px;width:40px;background:#ffe300"><i>79.98</i></div><div class="c" style="left:1207px;top:453px;width:40px;background:#ffda00"><i>80.94</i></div><div class="c" style="left:1247px;top:453px;width:40px;background:#ffd300"><i>81.75</i></div><div class="c" style="left:1287px;top:453px;width:40px;background:#ffd500"><i>81.54</i></div><div class="c" style="left:1327px;top:453px;width:40px;background:#ffd100"><i>82.02</i></div><div class="c" style="left:1367px;top:453px;width:40px;background:#ffcd00"><i>82.50</i></div><div class="c" style="left:1407px;top:453px;width:40px;background:#ffcd00"><i>82.50</i></div><div class="c" style="left:1447px;top:453px;width:40px;background:#ffcd00"><i>82.50</i></div><div class="c" style="left:341px;top:468px;width:34px;background:#002afe"><i>0.00</i></div><div class="c" style="left:375px;top:468px;width:34px;background:#002afe"><i>0.00</i></div><div class="c" style="left:409px;top:468px;width:34px;background:#002afe"><i>0.00</i></div><div class="c" style="left:443px;top:468px;width:34px;background:#002afe"><i>0.00</i></div><div class="c" style="left:477px;top:468px;width:34px;background:#002afe"><i>0.00</i></div><div class="c" style="left:511px;top:468px;width:34px;background:#002afe"><i>0.00</i></div><div class="c" style="left:545px;top:468px;width:34px;background:#002afe"><i>0.00</i></div><div class="c" style="left:579px;top:468px;width:34px;background:#002afe"><i>0.00</i></div><div class="c" style="left:613px;top:468px;width:34px;background:#002afe"><i>0.00</i></div><div class="c" style="left:647px;top:468px;width:40px;background:#002afe"><i>0.00</i></div><div class="c" style="left:687px;top:468px;width:40px;background:#002afe"><i>0.00</i></div><div class="c" style="left:727px;top:468px;width:40px;background:#002afe"><i>0.00</i></div><div class="c" style="left:767px;top:468px;width:40px;background:#002afe"><i>0.00</i></div><div class="c" style="left:807px;top:468px;width:40px;background:#002afe"><i>0.00</i></div><div class="c" style="left:847px;top:468px;width:40px;background:#51eb00"><i>60.50</i></div><div class="c" style="left:887px;top:468px;width:40px;background:#67eb00"><i>62.85</i></div><div class="c" style="left:927px;top:468px;width:40px;background:#7aeb00"><i>64.86</i></div><div class="c" style="left:967px;top:468px;width:40px;background:#8dec00"><i>66.84</i></div><div class="c" style="left:1007px;top:468px;width:40px;background:#97ec00"><i>67.89</i></div><div class="c" style="left:1047px;top:468px;width:40px;background:#aaec00"><i>69.90</i></div><div class="c" style="left:1087px;top:468px;width:40px;background:#daec00"><i>75.00</i></div><div class="c" style="left:1127px;top:468px;width:40px;background:#fcec00"><i>78.63</i></div><div class="c" style="left:1167px;top:468px;width:40px;background:#ffe300"><i>79.98</i></div><div class="c" style="left:1207px;top:468px;width:40px;background:#ffd300"><i>81.78</i></div><div class="c" style="left:1247px;top:468px;width:40px;background:#ffd300"><i>81.78</i></div><div class="c" style="left:1287px;top:468px;width:40px;background:#ffce00"><i>82.32</i></div><div class="c" style="left:1327px;top:468px;width:40px;background:#ffcb00"><i>82.68</i></div><div class="c" style="left:1367px;top:468px;width:40px;background:#ffc800"><i>83.01</i></div><div class="c" style="left:1407px;top:468px;width:40px;background:#ffc400"><i>83.49</i></div><div class="c" style="left:1447px;top:468px;width:40px;background:#ffc400"><i>83.49</i></div><div class="c" style="left:341px;top:483px;width:34px;background:#002afe"><i>0.00</i></div><div class="c" style="left:375px;top:483px;width:34px;background:#002afe"><i>0.00</i></div><div class="c" style="left:409px;top:483px;width:34px;background:#002afe"><i>0.00</i></div><div class="c" style="left:443px;top:483px;width:34px;background:#002afe"><i>0.00</i></div><div class="c" style="left:477px;top:483px;width:34px;background:#002afe"><i>0.00</i></div><div class="c" style="left:511px;top:483px;width:34px;background:#002afe"><i>0.00</i></div><div class="c" style="left:545px;top:483px;width:34px;background:#002afe"><i>0.00</i></div><div class="c" style="left:579px;top:483px;width:34px;background:#002afe"><i>0.00</i></div><div class="c" style="left:613px;top:483px;width:34px;background:#002afe"><i>0.00</i></div><div class="c" style="left:647px;top:483px;width:40px;background:#002afe"><i>0.00</i></div><div class="c" style="left:687px;top:483px;width:40px;background:#002afe"><i>0.00</i></div><div class="c" style="left:727px;top:483px;width:40px;background:#002afe"><i>0.00</i></div><div class="c" style="left:767px;top:483px;width:40px;background:#002afe"><i>0.00</i></div><div class="c" style="left:807px;top:483px;width:40px;background:#002afe"><i>0.00</i></div><div class="c" style="left:847px;top:483px;width:40px;background:#5deb00"><i>61.79</i></div><div class="c" style="left:887px;top:483px;width:40px;background:#6eeb00"><i>63.60</i></div><div class="c" style="left:927px;top:483px;width:40px;background:#87ec00"><i>66.18</i></div><div class="c" style="left:967px;top:483px;width:40px;background:#97ec00"><i>67.92</i></div><div class="c" style="left:1007px;top:483px;width:40px;background:#a6ec00"><i>69.54</i></div><div class="c" style="left:1047px;top:483px;width:40px;background:#beec00"><i>72.06</i></div><div class="c" style="left:1087px;top:483px;width:40px;background:#e3ec00"><i>75.96</i></div><div class="c" style="left:1127px;top:483px;width:40px;background:#ffe500"><i>79.68</i></div><div class="c" style="left:1167px;top:483px;width:40px;background:#ffd100"><i>81.99</i></div><div class="c" style="left:1207px;top:483px;width:40px;background:#ffc800"><i>83.07</i></div><div class="c" style="left:1247px;top:483px;width:40px;background:#ffc600"><i>83.28</i></div><div class="c" style="left:1287px;top:483px;width:40px;background:#ffc500"><i>83.43</i></div><div class="c" style="left:1327px;top:483px;width:40px;background:#ffbe00"><i>84.18</i></div><div class="c" style="left:1367px;top:483px;width:40px;background:#ffb700"><i>84.93</i></div><div class="c" style="left:1407px;top:483px;width:40px;background:#ffb700"><i>84.93</i></div><div class="c" style="left:1447px;top:483px;width:40px;background:#ffb700"><i>84.93</i></div><div class="c" style="left:341px;top:498px;width:34px;background:#002afe"><i>0.00</i></div><div class="c" style="left:375px;top:498px;width:34px;background:#002afe"><i>0.00</i></div><div class="c" style="left:409px;top:498px;width:34px;background:#002afe"><i>0.00</i></div><div class="c" style="left:443px;top:498px;width:34px;background:#002afe"><i>0.00</i></div><div class="c" style="left:477px;top:498px;width:34px;background:#002afe"><i>0.00</i></div><div class="c" style="left:511px;top:498px;width:34px;background:#002afe"><i>0.00</i></div><div class="c" style="left:545px;top:498px;width:34px;background:#002afe"><i>0.00</i></div><div class="c" style="left:579px;top:498px;width:34px;background:#002afe"><i>0.00</i></div><div class="c" style="left:613px;top:498px;width:34px;background:#002afe"><i>0.00</i></div><div class="c" style="left:647px;top:498px;width:40px;background:#002afe"><i>0.00</i></div><div class="c" style="left:687px;top:498px;width:40px;background:#002afe"><i>0.00</i></div><div class="c" style="left:727px;top:498px;width:40px;background:#002afe"><i>0.00</i></div><div class="c" style="left:767px;top:498px;width:40px;background:#002afe"><i>0.00</i></div><div class="c" style="left:807px;top:498px;width:40px;background:#002afe"><i>0.00</i></div><div class="c" style="left:847px;top:498px;width:40px;background:#5feb00"><i>62.01</i></div><div class="c" style="left:887px;top:498px;width:40px;background:#77eb00"><i>64.56</i></div><div class="c" style="left:927px;top:498px;width:40px;background:#8dec00"><i>66.87</i></div><div class="c" style="left:967px;top:498px;width:40px;background:#a5ec00"><i>69.42</i></div><div class="c" style="left:1007px;top:498px;width:40px;background:#b2ec00"><i>70.74</i></div><div class="c" style="left:1047px;top:498px;width:40px;background:#cfec00"><i>73.80</i></div><div class="c" style="left:1087px;top:498px;width:40px;background:#efec00"><i>77.28</i></div><div class="c" style="left:1127px;top:498px;width:40px;background:#ffe300"><i>79.98</i></div><div class="c" style="left:1167px;top:498px;width:40px;background:#ffd200"><i>81.87</i></div><div class="c" style="left:1207px;top:498px;width:40px;background:#ffc300"><i>83.64</i></div><div class="c" style="left:1247px;top:498px;width:40px;background:#ffc300"><i>83.64</i></div><div class="c" style="left:1287px;top:498px;width:40px;background:#ffbc00"><i>84.39</i></div><div class="c" style="left:1327px;top:498px;width:40px;background:#ffb400"><i>85.38</i></div><div class="c" style="left:1367px;top:498px;width:40px;background:#ffab00"><i>86.40</i></div><div class="c" style="left:1407px;top:498px;width:40px;background:#ffab00"><i>86.40</i></div><div class="c" style="left:1447px;top:498px;width:40px;background:#ffab00"><i>86.40</i></div><div class="c" style="left:341px;top:513px;width:34px;background:#002afe"><i>0.00</i></div><div class="c" style="left:375px;top:513px;width:34px;background:#002afe"><i>0.00</i></div><div class="c" style="left:409px;top:513px;width:34px;background:#002afe"><i>0.00</i></div><div class="c" style="left:443px;top:513px;width:34px;background:#002afe"><i>0.00</i></div><div class="c" style="left:477px;top:513px;width:34px;background:#002afe"><i>0.00</i></div><div class="c" style="left:511px;top:513px;width:34px;background:#002afe"><i>0.00</i></div><div class="c" style="left:545px;top:513px;width:34px;background:#002afe"><i>0.00</i></div><div class="c" style="left:579px;top:513px;width:34px;background:#002afe"><i>0.00</i></div><div class="c" style="left:613px;top:513px;width:34px;background:#002afe"><i>0.00</i></div><div class="c" style="left:647px;top:513px;width:40px;background:#002afe"><i>0.00</i></div><div class="c" style="left:687px;top:513px;width:40px;background:#002afe"><i>0.00</i></div><div class="c" style="left:727px;top:513px;width:40px;background:#002afe"><i>0.00</i></div><div class="c" style="left:767px;top:513px;width:40px;background:#002afe"><i>0.00</i></div><div class="c" style="left:807px;top:513px;width:40px;background:#002afe"><i>0.00</i></div><div class="c" style="left:847px;top:513px;width:40px;background:#50eb00"><i>60.42</i></div><div class="c" style="left:887px;top:513px;width:40px;background:#72eb00"><i>64.05</i></div><div class="c" style="left:927px;top:513px;width:40px;background:#94ec00"><i>67.65</i></div><div class="c" style="left:967px;top:513px;width:40px;background:#afec00"><i>70.44</i></div><div class="c" style="left:1007px;top:513px;width:40px;background:#bcec00"><i>71.85</i></div><div class="c" style="left:1047px;top:513px;width:40px;background:#daec00"><i>75.03</i></div><div class="c" style="left:1087px;top:513px;width:40px;background:#f2ec00"><i>77.58</i></div><div class="c" style="left:1127px;top:513px;width:40px;background:#f9ec00"><i>78.33</i></div><div class="c" style="left:1167px;top:513px;width:40px;background:#fdec00"><i>78.75</i></div><div class="c" style="left:1207px;top:513px;width:40px;background:#ffe400"><i>79.80</i></div><div class="c" style="left:1247px;top:513px;width:40px;background:#ffca00"><i>82.80</i></div><div class="c" style="left:1287px;top:513px;width:40px;background:#ffbf00"><i>84.03</i></div><div class="c" style="left:1327px;top:513px;width:40px;background:#ffb300"><i>85.47</i></div><div class="c" style="left:1367px;top:513px;width:40px;background:#ffa600"><i>86.91</i></div><div class="c" style="left:1407px;top:513px;width:40px;background:#ffa600"><i>86.91</i></div><div class="c" style="left:1447px;top:513px;width:40px;background:#ffa600"><i>86.91</i></div><div class="c" style="left:341px;top:528px;width:34px;background:#002afe"><i>0.00</i></div><div class="c" style="left:375px;top:528px;width:34px;background:#002afe"><i>0.00</i></div><div class="c" style="left:409px;top:528px;width:34px;background:#002afe"><i>0.00</i></div><div class="c" style="left:443px;top:528px;width:34px;background:#002afe"><i>0.00</i></div><div class="c" style="left:477px;top:528px;width:34px;background:#002afe"><i>0.00</i></div><div class="c" style="left:511px;top:528px;width:34px;background:#002afe"><i>0.00</i></div><div class="c" style="left:545px;top:528px;width:34px;background:#002afe"><i>0.00</i></div><div class="c" style="left:579px;top:528px;width:34px;background:#002afe"><i>0.00</i></div><div class="c" style="left:613px;top:528px;width:34px;background:#002afe"><i>0.00</i></div><div class="c" style="left:647px;top:528px;width:40px;background:#002afe"><i>0.00</i></div><div class="c" style="left:687px;top:528px;width:40px;background:#002afe"><i>0.00</i></div><div class="c" style="left:727px;top:528px;width:40px;background:#002afe"><i>0.00</i></div><div class="c" style="left:767px;top:528px;width:40px;background:#002afe"><i>0.00</i></div><div class="c" style="left:807px;top:528px;width:40px;background:#002afe"><i>0.00</i></div><div class="c" style="left:847px;top:528px;width:40px;background:#16eb00"><i>54.28</i></div><div class="c" style="left:887px;top:528px;width:40px;background:#5beb00"><i>61.62</i></div><div class="c" style="left:927px;top:528px;width:40px;background:#9bec00"><i>68.37</i></div><div class="c" style="left:967px;top:528px;width:40px;background:#c6ec00"><i>72.87</i></div><div class="c" style="left:1007px;top:528px;width:40px;background:#deec00"><i>75.45</i></div><div class="c" style="left:1047px;top:528px;width:40px;background:#faec00"><i>78.39</i></div><div class="c" style="left:1087px;top:528px;width:40px;background:#ffeb00"><i>78.99</i></div><div class="c" style="left:1127px;top:528px;width:40px;background:#f9ec00"><i>78.27</i></div><div class="c" style="left:1167px;top:528px;width:40px;background:#f9ec00"><i>78.30</i></div><div class="c" style="left:1207px;top:528px;width:40px;background:#ffeb00"><i>78.99</i></div><div class="c" style="left:1247px;top:528px;width:40px;background:#ffd700"><i>81.36</i></div><div class="c" style="left:1287px;top:528px;width:40px;background:#ffb900"><i>84.78</i></div><div class="c" style="left:1327px;top:528px;width:40px;background:#ffa900"><i>86.64</i></div><div class="c" style="left:1367px;top:528px;width:40px;background:#ff9800"><i>88.47</i></div><div class="c" style="left:1407px;top:528px;width:40px;background:#ff9800"><i>88.47</i></div><div class="c" style="left:1447px;top:528px;width:40px;background:#ff9800"><i>88.47</i></div><div class="c" style="left:341px;top:543px;width:34px;background:#002afe"><i>0.00</i></div><div class="c" style="left:375px;top:543px;width:34px;background:#002afe"><i>0.00</i></div><div class="c" style="left:409px;top:543px;width:34px;background:#002afe"><i>0.00</i></div><div class="c" style="left:443px;top:543px;width:34px;background:#002afe"><i>0.00</i></div><div class="c" style="left:477px;top:543px;width:34px;background:#002afe"><i>0.00</i></div><div class="c" style="left:511px;top:543px;width:34px;background:#002afe"><i>0.00</i></div><div class="c" style="left:545px;top:543px;width:34px;background:#002afe"><i>0.00</i></div><div class="c" style="left:579px;top:543px;width:34px;background:#002afe"><i>0.00</i></div><div class="c" style="left:613px;top:543px;width:34px;background:#002afe"><i>0.00</i></div><div class="c" style="left:647px;top:543px;width:40px;background:#002afe"><i>0.00</i></div><div class="c" style="left:687px;top:543px;width:40px;background:#002afe"><i>0.00</i></div><div class="c" style="left:727px;top:543px;width:40px;background:#002afe"><i>0.00</i></div><div class="c" style="left:767px;top:543px;width:40px;background:#002afe"><i>0.00</i></div><div class="c" style="left:807px;top:543px;width:40px;background:#002afe"><i>0.00</i></div><div class="c" style="left:847px;top:543px;width:40px;background:#00eb07"><i>51.13</i></div><div class="c" style="left:887px;top:543px;width:40px;background:#49eb00"><i>59.67</i></div><div class="c" style="left:927px;top:543px;width:40px;background:#93ec00"><i>67.47</i></div><div class="c" style="left:967px;top:543px;width:40px;background:#c0ec00"><i>72.30</i></div><div class="c" style="left:1007px;top:543px;width:40px;background:#e0ec00"><i>75.60</i></div><div class="c" style="left:1047px;top:543px;width:40px;background:#ffe700"><i>79.50</i></div><div class="c" style="left:1087px;top:543px;width:40px;background:#ffe300"><i>80.01</i></div><div class="c" style="left:1127px;top:543px;width:40px;background:#f0ec00"><i>77.31</i></div><div class="c" style="left:1167px;top:543px;width:40px;background:#f3ec00"><i>77.64</i></div><div class="c" style="left:1207px;top:543px;width:40px;background:#ffeb00"><i>78.99</i></div><div class="c" style="left:1247px;top:543px;width:40px;background:#ffda00"><i>81.03</i></div><div class="c" style="left:1287px;top:543px;width:40px;background:#ffa200"><i>87.42</i></div><div class="c" style="left:1327px;top:543px;width:40px;background:#ff9900"><i>88.44</i></div><div class="c" style="left:1367px;top:543px;width:40px;background:#ff9000"><i>89.49</i></div><div class="c" style="left:1407px;top:543px;width:40px;background:#ff8a00"><i>90.18</i></div><div class="c" style="left:1447px;top:543px;width:40px;background:#ff8a00"><i>90.18</i></div><div class="c" style="left:341px;top:558px;width:34px;background:#002afe"><i>0.00</i></div><div class="c" style="left:375px;top:558px;width:34px;background:#002afe"><i>0.00</i></div><div class="c" style="left:409px;top:558px;width:34px;background:#002afe"><i>0.00</i></div><div class="c" style="left:443px;top:558px;width:34px;background:#002afe"><i>0.00</i></div><div class="c" style="left:477px;top:558px;width:34px;background:#002afe"><i>0.00</i></div><div class="c" style="left:511px;top:558px;width:34px;background:#002afe"><i>0.00</i></div><div class="c" style="left:545px;top:558px;width:34px;background:#002afe"><i>0.00</i></div><div class="c" style="left:579px;top:558px;width:34px;background:#002afe"><i>0.00</i></div><div class="c" style="left:613px;top:558px;width:34px;background:#002afe"><i>0.00</i></div><div class="c" style="left:647px;top:558px;width:40px;background:#002afe"><i>0.00</i></div><div class="c" style="left:687px;top:558px;width:40px;background:#002afe"><i>0.00</i></div><div class="c" style="left:727px;top:558px;width:40px;background:#002afe"><i>0.00</i></div><div class="c" style="left:767px;top:558px;width:40px;background:#002afe"><i>0.00</i></div><div class="c" style="left:807px;top:558px;width:40px;background:#002afe"><i>0.00</i></div><div class="c" style="left:847px;top:558px;width:40px;background:#00eb13"><i>49.78</i></div><div class="c" style="left:887px;top:558px;width:40px;background:#3beb00"><i>58.17</i></div><div class="c" style="left:927px;top:558px;width:40px;background:#89ec00"><i>66.42</i></div><div class="c" style="left:967px;top:558px;width:40px;background:#b5ec00"><i>71.13</i></div><div class="c" style="left:1007px;top:558px;width:40px;background:#d9ec00"><i>74.94</i></div><div class="c" style="left:1047px;top:558px;width:40px;background:#f5ec00"><i>77.88</i></div><div class="c" style="left:1087px;top:558px;width:40px;background:#ffe300"><i>80.01</i></div><div class="c" style="left:1127px;top:558px;width:40px;background:#e3ec00"><i>75.99</i></div><div class="c" style="left:1167px;top:558px;width:40px;background:#edec00"><i>77.01</i></div><div class="c" style="left:1207px;top:558px;width:40px;background:#ffe500"><i>79.77</i></div><div class="c" style="left:1247px;top:558px;width:40px;background:#ffcd00"><i>82.50</i></div><div class="c" style="left:1287px;top:558px;width:40px;background:#ffa400"><i>87.18</i></div><div class="c" style="left:1327px;top:558px;width:40px;background:#ff9900"><i>88.38</i></div><div class="c" style="left:1367px;top:558px;width:40px;background:#ff8f00"><i>89.58</i></div><div class="c" style="left:1407px;top:558px;width:40px;background:#ff8700"><i>90.48</i></div><div class="c" style="left:1447px;top:558px;width:40px;background:#ff8700"><i>90.48</i></div><div class="c" style="left:341px;top:573px;width:34px;background:#002afe"><i>0.00</i></div><div class="c" style="left:375px;top:573px;width:34px;background:#002afe"><i>0.00</i></div><div class="c" style="left:409px;top:573px;width:34px;background:#002afe"><i>0.00</i></div><div class="c" style="left:443px;top:573px;width:34px;background:#002afe"><i>0.00</i></div><div class="c" style="left:477px;top:573px;width:34px;background:#002afe"><i>0.00</i></div><div class="c" style="left:511px;top:573px;width:34px;background:#002afe"><i>0.00</i></div><div class="c" style="left:545px;top:573px;width:34px;background:#002afe"><i>0.00</i></div><div class="c" style="left:579px;top:573px;width:34px;background:#002afe"><i>0.00</i></div><div class="c" style="left:613px;top:573px;width:34px;background:#002afe"><i>0.00</i></div><div class="c" style="left:647px;top:573px;width:40px;background:#002afe"><i>0.00</i></div><div class="c" style="left:687px;top:573px;width:40px;background:#002afe"><i>0.00</i></div><div class="c" style="left:727px;top:573px;width:40px;background:#002afe"><i>0.00</i></div><div class="c" style="left:767px;top:573px;width:40px;background:#002afe"><i>0.00</i></div><div class="c" style="left:807px;top:573px;width:40px;background:#002afe"><i>0.00</i></div><div class="c" style="left:847px;top:573px;width:40px;background:#00eb11"><i>50.04</i></div><div class="c" style="left:887px;top:573px;width:40px;background:#2ceb00"><i>56.58</i></div><div class="c" style="left:927px;top:573px;width:40px;background:#67eb00"><i>62.82</i></div><div class="c" style="left:967px;top:573px;width:40px;background:#91ec00"><i>67.26</i></div><div class="c" style="left:1007px;top:573px;width:40px;background:#bcec00"><i>71.82</i></div><div class="c" style="left:1047px;top:573px;width:40px;background:#d1ec00"><i>74.01</i></div><div class="c" style="left:1087px;top:573px;width:40px;background:#ffeb00"><i>78.99</i></div><div class="c" style="left:1127px;top:573px;width:40px;background:#edec00"><i>77.01</i></div><div class="c" style="left:1167px;top:573px;width:40px;background:#f6ec00"><i>77.94</i></div><div class="c" style="left:1207px;top:573px;width:40px;background:#ffd900"><i>81.15</i></div><div class="c" style="left:1247px;top:573px;width:40px;background:#ffbb00"><i>84.48</i></div><div class="c" style="left:1287px;top:573px;width:40px;background:#ff9b00"><i>88.17</i></div><div class="c" style="left:1327px;top:573px;width:40px;background:#ff9c00"><i>88.08</i></div><div class="c" style="left:1367px;top:573px;width:40px;background:#ff9d00"><i>87.99</i></div><div class="c" style="left:1407px;top:573px;width:40px;background:#ff9900"><i>88.44</i></div><div class="c" style="left:1447px;top:573px;width:40px;background:#ff9900"><i>88.44</i></div><div class="c" style="left:341px;top:588px;width:34px;background:#002afe"><i>0.00</i></div><div class="c" style="left:375px;top:588px;width:34px;background:#002afe"><i>0.00</i></div><div class="c" style="left:409px;top:588px;width:34px;background:#002afe"><i>0.00</i></div><div class="c" style="left:443px;top:588px;width:34px;background:#002afe"><i>0.00</i></div><div class="c" style="left:477px;top:588px;width:34px;background:#002afe"><i>0.00</i></div><div class="c" style="left:511px;top:588px;width:34px;background:#002afe"><i>0.00</i></div><div class="c" style="left:545px;top:588px;width:34px;background:#002afe"><i>0.00</i></div><div class="c" style="left:579px;top:588px;width:34px;background:#002afe"><i>0.00</i></div><div class="c" style="left:613px;top:588px;width:34px;background:#002afe"><i>0.00</i></div><div class="c" style="left:647px;top:588px;width:40px;background:#002afe"><i>0.00</i></div><div class="c" style="left:687px;top:588px;width:40px;background:#002afe"><i>0.00</i></div><div class="c" style="left:727px;top:588px;width:40px;background:#002afe"><i>0.00</i></div><div class="c" style="left:767px;top:588px;width:40px;background:#002afe"><i>0.00</i></div><div class="c" style="left:807px;top:588px;width:40px;background:#002afe"><i>0.00</i></div><div class="c" style="left:847px;top:588px;width:40px;background:#00eb1a"><i>48.99</i></div><div class="c" style="left:887px;top:588px;width:40px;background:#12eb00"><i>53.88</i></div><div class="c" style="left:927px;top:588px;width:40px;background:#47eb00"><i>59.43</i></div><div class="c" style="left:967px;top:588px;width:40px;background:#75eb00"><i>64.32</i></div><div class="c" style="left:1007px;top:588px;width:40px;background:#a0ec00"><i>68.91</i></div><div class="c" style="left:1047px;top:588px;width:40px;background:#c5ec00"><i>72.84</i></div><div class="c" style="left:1087px;top:588px;width:40px;background:#edec00"><i>77.01</i></div><div class="c" style="left:1127px;top:588px;width:40px;background:#faec00"><i>78.36</i></div><div class="c" style="left:1167px;top:588px;width:40px;background:#ffe900"><i>79.26</i></div><div class="c" style="left:1207px;top:588px;width:40px;background:#ffcd00"><i>82.50</i></div><div class="c" style="left:1247px;top:588px;width:40px;background:#ffc000"><i>84.00</i></div><div class="c" style="left:1287px;top:588px;width:40px;background:#ff9000"><i>89.49</i></div><div class="c" style="left:1327px;top:588px;width:40px;background:#ff9900"><i>88.44</i></div><div class="c" style="left:1367px;top:588px;width:40px;background:#ff9e00"><i>87.84</i></div><div class="c" style="left:1407px;top:588px;width:40px;background:#ff9c00"><i>88.11</i></div><div class="c" style="left:1447px;top:588px;width:40px;background:#ff9c00"><i>88.11</i></div><div class="c" style="left:341px;top:603px;width:34px;background:#002afe"><i>0.00</i></div><div class="c" style="left:375px;top:603px;width:34px;background:#002afe"><i>0.00</i></div><div class="c" style="left:409px;top:603px;width:34px;background:#002afe"><i>0.00</i></div><div class="c" style="left:443px;top:603px;width:34px;background:#002afe"><i>0.00</i></div><div class="c" style="left:477px;top:603px;width:34px;background:#002afe"><i>0.00</i></div><div class="c" style="left:511px;top:603px;width:34px;background:#002afe"><i>0.00</i></div><div class="c" style="left:545px;top:603px;width:34px;background:#002afe"><i>0.00</i></div><div class="c" style="left:579px;top:603px;width:34px;background:#002afe"><i>0.00</i></div><div class="c" style="left:613px;top:603px;width:34px;background:#002afe"><i>0.00</i></div><div class="c" style="left:647px;top:603px;width:40px;background:#002afe"><i>0.00</i></div><div class="c" style="left:687px;top:603px;width:40px;background:#002afe"><i>0.00</i></div><div class="c" style="left:727px;top:603px;width:40px;background:#002afe"><i>0.00</i></div><div class="c" style="left:767px;top:603px;width:40px;background:#002afe"><i>0.00</i></div><div class="c" style="left:807px;top:603px;width:40px;background:#002afe"><i>0.00</i></div><div class="c" style="left:847px;top:603px;width:40px;background:#00eb1a"><i>49.03</i></div><div class="c" style="left:887px;top:603px;width:40px;background:#14eb00"><i>54.06</i></div><div class="c" style="left:927px;top:603px;width:40px;background:#42eb00"><i>58.98</i></div><div class="c" style="left:967px;top:603px;width:40px;background:#7beb00"><i>65.01</i></div><div class="c" style="left:1007px;top:603px;width:40px;background:#9dec00"><i>68.61</i></div><div class="c" style="left:1047px;top:603px;width:40px;background:#c9ec00"><i>73.23</i></div><div class="c" style="left:1087px;top:603px;width:40px;background:#feec00"><i>78.87</i></div><div class="c" style="left:1127px;top:603px;width:40px;background:#ffda00"><i>81.00</i></div><div class="c" style="left:1167px;top:603px;width:40px;background:#ffcf00"><i>82.26</i></div><div class="c" style="left:1207px;top:603px;width:40px;background:#ffbb00"><i>84.57</i></div><div class="c" style="left:1247px;top:603px;width:40px;background:#ffac00"><i>86.28</i></div><div class="c" style="left:1287px;top:603px;width:40px;background:#ff7600"><i>92.40</i></div><div class="c" style="left:1327px;top:603px;width:40px;background:#ff8800"><i>90.36</i></div><div class="c" style="left:1367px;top:603px;width:40px;background:#ff9a00"><i>88.29</i></div><div class="c" style="left:1407px;top:603px;width:40px;background:#ff9800"><i>88.50</i></div><div class="c" style="left:1447px;top:603px;width:40px;background:#ff9800"><i>88.50</i></div><div class="c" style="left:341px;top:618px;width:34px;background:#002afe"><i>0.00</i></div><div class="c" style="left:375px;top:618px;width:34px;background:#002afe"><i>0.00</i></div><div class="c" style="left:409px;top:618px;width:34px;background:#002afe"><i>0.00</i></div><div class="c" style="left:443px;top:618px;width:34px;background:#002afe"><i>0.00</i></div><div class="c" style="left:477px;top:618px;width:34px;background:#002afe"><i>0.00</i></div><div class="c" style="left:511px;top:618px;width:34px;background:#002afe"><i>0.00</i></div><div class="c" style="left:545px;top:618px;width:34px;background:#002afe"><i>0.00</i></div><div class="c" style="left:579px;top:618px;width:34px;background:#002afe"><i>0.00</i></div><div class="c" style="left:613px;top:618px;width:34px;background:#002afe"><i>0.00</i></div><div class="c" style="left:647px;top:618px;width:40px;background:#002afe"><i>0.00</i></div><div class="c" style="left:687px;top:618px;width:40px;background:#002afe"><i>0.00</i></div><div class="c" style="left:727px;top:618px;width:40px;background:#002afe"><i>0.00</i></div><div class="c" style="left:767px;top:618px;width:40px;background:#002afe"><i>0.00</i></div><div class="c" style="left:807px;top:618px;width:40px;background:#002afe"><i>0.00</i></div><div class="c" style="left:847px;top:618px;width:40px;background:#00eb1f"><i>48.43</i></div><div class="c" style="left:887px;top:618px;width:40px;background:#02eb00"><i>52.14</i></div><div class="c" style="left:927px;top:618px;width:40px;background:#26eb00"><i>56.01</i></div><div class="c" style="left:967px;top:618px;width:40px;background:#65eb00"><i>62.64</i></div><div class="c" style="left:1007px;top:618px;width:40px;background:#8dec00"><i>66.84</i></div><div class="c" style="left:1047px;top:618px;width:40px;background:#bcec00"><i>71.88</i></div><div class="c" style="left:1087px;top:618px;width:40px;background:#ffe600"><i>79.62</i></div><div class="c" style="left:1127px;top:618px;width:40px;background:#ffbe00"><i>84.18</i></div><div class="c" style="left:1167px;top:618px;width:40px;background:#ffb700"><i>84.99</i></div><div class="c" style="left:1207px;top:618px;width:40px;background:#ff8a00"><i>90.09</i></div><div class="c" style="left:1247px;top:618px;width:40px;background:#ff6000"><i>94.98</i></div><div class="c" style="left:1287px;top:618px;width:40px;background:#ff2b00"><i>100.98</i></div><div class="c" style="left:1327px;top:618px;width:40px;background:#ff2f00"><i>100.56</i></div><div class="c" style="left:1367px;top:618px;width:40px;background:#ff3300"><i>100.11</i></div><div class="c" style="left:1407px;top:618px;width:40px;background:#ff3300"><i>100.11</i></div><div class="c" style="left:1447px;top:618px;width:40px;background:#ff3300"><i>100.11</i></div><div class="c" style="left:341px;top:633px;width:34px;background:#002afe"><i>0.00</i></div><div class="c" style="left:375px;top:633px;width:34px;background:#002afe"><i>0.00</i></div><div class="c" style="left:409px;top:633px;width:34px;background:#002afe"><i>0.00</i></div><div class="c" style="left:443px;top:633px;width:34px;background:#002afe"><i>0.00</i></div><div class="c" style="left:477px;top:633px;width:34px;background:#002afe"><i>0.00</i></div><div class="c" style="left:511px;top:633px;width:34px;background:#002afe"><i>0.00</i></div><div class="c" style="left:545px;top:633px;width:34px;background:#002afe"><i>0.00</i></div><div class="c" style="left:579px;top:633px;width:34px;background:#002afe"><i>0.00</i></div><div class="c" style="left:613px;top:633px;width:34px;background:#002afe"><i>0.00</i></div><div class="c" style="left:647px;top:633px;width:40px;background:#002afe"><i>0.00</i></div><div class="c" style="left:687px;top:633px;width:40px;background:#002afe"><i>0.00</i></div><div class="c" style="left:727px;top:633px;width:40px;background:#002afe"><i>0.00</i></div><div class="c" style="left:767px;top:633px;width:40px;background:#002afe"><i>0.00</i></div><div class="c" style="left:807px;top:633px;width:40px;background:#002afe"><i>0.00</i></div><div class="c" style="left:847px;top:633px;width:40px;background:#00eb26"><i>47.72</i></div><div class="c" style="left:887px;top:633px;width:40px;background:#00eb09"><i>50.97</i></div><div class="c" style="left:927px;top:633px;width:40px;background:#1beb00"><i>54.84</i></div><div class="c" style="left:967px;top:633px;width:40px;background:#50eb00"><i>60.45</i></div><div class="c" style="left:1007px;top:633px;width:40px;background:#7aeb00"><i>64.89</i></div><div class="c" style="left:1047px;top:633px;width:40px;background:#b0ec00"><i>70.56</i></div><div class="c" style="left:1087px;top:633px;width:40px;background:#fdec00"><i>78.72</i></div><div class="c" style="left:1127px;top:633px;width:40px;background:#ffc000"><i>84.00</i></div><div class="c" style="left:1167px;top:633px;width:40px;background:#ffb500"><i>85.20</i></div><div class="c" style="left:1207px;top:633px;width:40px;background:#ff8800"><i>90.39</i></div><div class="c" style="left:1247px;top:633px;width:40px;background:#ff6400"><i>94.50</i></div><div class="c" style="left:1287px;top:633px;width:40px;background:#ff4600"><i>97.89</i></div><div class="c" style="left:1327px;top:633px;width:40px;background:#ff4800"><i>97.71</i></div><div class="c" style="left:1367px;top:633px;width:40px;background:#ff4900"><i>97.53</i></div><div class="c" style="left:1407px;top:633px;width:40px;background:#ff4900"><i>97.53</i></div><div class="c" style="left:1447px;top:633px;width:40px;background:#ff4900"><i>97.53</i></div><div class="c" style="left:341px;top:648px;width:34px;background:#002afe"><i>0.00</i></div><div class="c" style="left:375px;top:648px;width:34px;background:#002afe"><i>0.00</i></div><div class="c" style="left:409px;top:648px;width:34px;background:#002afe"><i>0.00</i></div><div class="c" style="left:443px;top:648px;width:34px;background:#002afe"><i>0.00</i></div><div class="c" style="left:477px;top:648px;width:34px;background:#002afe"><i>0.00</i></div><div class="c" style="left:511px;top:648px;width:34px;background:#002afe"><i>0.00</i></div><div class="c" style="left:545px;top:648px;width:34px;background:#002afe"><i>0.00</i></div><div class="c" style="left:579px;top:648px;width:34px;background:#002afe"><i>0.00</i></div><div class="c" style="left:613px;top:648px;width:34px;background:#002afe"><i>0.00</i></div><div class="c" style="left:647px;top:648px;width:40px;background:#002afe"><i>0.00</i></div><div class="c" style="left:687px;top:648px;width:40px;background:#002afe"><i>0.00</i></div><div class="c" style="left:727px;top:648px;width:40px;background:#002afe"><i>0.00</i></div><div class="c" style="left:767px;top:648px;width:40px;background:#002afe"><i>0.00</i></div><div class="c" style="left:807px;top:648px;width:40px;background:#002afe"><i>0.00</i></div><div class="c" style="left:847px;top:648px;width:40px;background:#00eb4c"><i>43.41</i></div><div class="c" style="left:887px;top:648px;width:40px;background:#00eb23"><i>48.06</i></div><div class="c" style="left:927px;top:648px;width:40px;background:#06eb00"><i>52.62</i></div><div class="c" style="left:967px;top:648px;width:40px;background:#2beb00"><i>56.49</i></div><div class="c" style="left:1007px;top:648px;width:40px;background:#5feb00"><i>61.95</i></div><div class="c" style="left:1047px;top:648px;width:40px;background:#8dec00"><i>66.87</i></div><div class="c" style="left:1087px;top:648px;width:40px;background:#dcec00"><i>75.24</i></div><div class="c" style="left:1127px;top:648px;width:40px;background:#ffd500"><i>81.51</i></div><div class="c" style="left:1167px;top:648px;width:40px;background:#ffbb00"><i>84.51</i></div><div class="c" style="left:1207px;top:648px;width:40px;background:#ff9d00"><i>87.99</i></div><div class="c" style="left:1247px;top:648px;width:40px;background:#ff6f00"><i>93.21</i></div><div class="c" style="left:1287px;top:648px;width:40px;background:#ff3c00"><i>99.03</i></div><div class="c" style="left:1327px;top:648px;width:40px;background:#ff4300"><i>98.28</i></div><div class="c" style="left:1367px;top:648px;width:40px;background:#ff4900"><i>97.50</i></div><div class="c" style="left:1407px;top:648px;width:40px;background:#ff4700"><i>97.80</i></div><div class="c" style="left:1447px;top:648px;width:40px;background:#ff4700"><i>97.80</i></div><div class="c" style="left:341px;top:663px;width:34px;background:#007ef8"><i>10.85</i></div><div class="c" style="left:375px;top:663px;width:34px;background:#0083f8"><i>11.44</i></div><div class="c" style="left:409px;top:663px;width:34px;background:#0086f7"><i>11.93</i></div><div class="c" style="left:443px;top:663px;width:34px;background:#0091f7"><i>13.27</i></div><div class="c" style="left:477px;top:663px;width:34px;background:#009ff5"><i>15.13</i></div><div class="c" style="left:511px;top:663px;width:34px;background:#00aff4"><i>17.14</i></div><div class="c" style="left:545px;top:663px;width:34px;background:#00c8f3"><i>20.46</i></div><div class="c" style="left:579px;top:663px;width:34px;background:#00dcf1"><i>23.05</i></div><div class="c" style="left:613px;top:663px;width:34px;background:#00e7f0"><i>24.47</i></div><div class="c" style="left:647px;top:663px;width:40px;background:#00ebd1"><i>28.46</i></div><div class="c" style="left:687px;top:663px;width:40px;background:#00ebc4"><i>29.97</i></div><div class="c" style="left:727px;top:663px;width:40px;background:#00ebb6"><i>31.54</i></div><div class="c" style="left:767px;top:663px;width:40px;background:#00eba6"><i>33.26</i></div><div class="c" style="left:807px;top:663px;width:40px;background:#00eb88"><i>36.64</i></div><div class="c" style="left:847px;top:663px;width:40px;background:#00eb69"><i>40.16</i></div><div class="c" style="left:887px;top:663px;width:40px;background:#00eb3e"><i>45.03</i></div><div class="c" style="left:927px;top:663px;width:40px;background:#00eb19"><i>49.14</i></div><div class="c" style="left:967px;top:663px;width:40px;background:#02eb00"><i>52.20</i></div><div class="c" style="left:1007px;top:663px;width:40px;background:#3beb00"><i>58.23</i></div><div class="c" style="left:1047px;top:663px;width:40px;background:#6aeb00"><i>63.18</i></div><div class="c" style="left:1087px;top:663px;width:40px;background:#beec00"><i>72.06</i></div><div class="c" style="left:1127px;top:663px;width:40px;background:#ffea00"><i>79.14</i></div><div class="c" style="left:1167px;top:663px;width:40px;background:#ffc000"><i>84.00</i></div><div class="c" style="left:1207px;top:663px;width:40px;background:#ff9d00"><i>87.99</i></div><div class="c" style="left:1247px;top:663px;width:40px;background:#ff6300"><i>94.62</i></div><div class="c" style="left:1287px;top:663px;width:40px;background:#ff2000"><i>102.24</i></div><div class="c" style="left:1327px;top:663px;width:40px;background:#ff2300"><i>101.88</i></div><div class="c" style="left:1367px;top:663px;width:40px;background:#ff2700"><i>101.49</i></div><div class="c" style="left:1407px;top:663px;width:40px;background:#ff2700"><i>101.49</i></div><div class="c" style="left:1447px;top:663px;width:40px;background:#ff2700"><i>101.49</i></div><div class="c" style="left:341px;top:678px;width:34px;background:#0081f8"><i>11.19</i></div><div class="c" style="left:375px;top:678px;width:34px;background:#0085f7"><i>11.79</i></div><div class="c" style="left:409px;top:678px;width:34px;background:#0089f7"><i>12.30</i></div><div class="c" style="left:443px;top:678px;width:34px;background:#0094f6"><i>13.68</i></div><div class="c" style="left:477px;top:678px;width:34px;background:#00a3f5"><i>15.60</i></div><div class="c" style="left:511px;top:678px;width:34px;background:#00b3f4"><i>17.67</i></div><div class="c" style="left:545px;top:678px;width:34px;background:#00cdf2"><i>21.09</i></div><div class="c" style="left:579px;top:678px;width:34px;background:#00e2f1"><i>23.76</i></div><div class="c" style="left:613px;top:678px;width:34px;background:#00ebee"><i>25.23</i></div><div class="c" style="left:647px;top:678px;width:40px;background:#00ebc9"><i>29.34</i></div><div class="c" style="left:687px;top:678px;width:40px;background:#00ebbb"><i>30.90</i></div><div class="c" style="left:727px;top:678px;width:40px;background:#00ebad"><i>32.52</i></div><div class="c" style="left:767px;top:678px;width:40px;background:#00eb9d"><i>34.29</i></div><div class="c" style="left:807px;top:678px;width:40px;background:#00eb7e"><i>37.77</i></div><div class="c" style="left:847px;top:678px;width:40px;background:#00eb65"><i>40.62</i></div><div class="c" style="left:887px;top:678px;width:40px;background:#00eb47"><i>43.98</i></div><div class="c" style="left:927px;top:678px;width:40px;background:#00eb2d"><i>46.92</i></div><div class="c" style="left:967px;top:678px;width:40px;background:#00eb0a"><i>50.88</i></div><div class="c" style="left:1007px;top:678px;width:40px;background:#2beb00"><i>56.49</i></div><div class="c" style="left:1047px;top:678px;width:40px;background:#52eb00"><i>60.63</i></div><div class="c" style="left:1087px;top:678px;width:40px;background:#b5ec00"><i>71.07</i></div><div class="c" style="left:1127px;top:678px;width:40px;background:#edec00"><i>77.01</i></div><div class="c" style="left:1167px;top:678px;width:40px;background:#ffd600"><i>81.48</i></div><div class="c" style="left:1207px;top:678px;width:40px;background:#ffa500"><i>87.00</i></div><div class="c" style="left:1247px;top:678px;width:40px;background:#ff7300"><i>92.70</i></div><div class="c" style="left:1287px;top:678px;width:40px;background:#ff3100"><i>100.32</i></div><div class="c" style="left:1327px;top:678px;width:40px;background:#ff3b00"><i>99.18</i></div><div class="c" style="left:1367px;top:678px;width:40px;background:#ff4500"><i>98.01</i></div><div class="c" style="left:1407px;top:678px;width:40px;background:#ff4500"><i>98.01</i></div><div class="c" style="left:1447px;top:678px;width:40px;background:#ff4500"><i>98.01</i></div><div class="c" style="left:341px;top:693px;width:34px;background:#0080f8"><i>11.04</i></div><div class="c" style="left:375px;top:693px;width:34px;background:#0089f7"><i>12.24</i></div><div class="c" style="left:409px;top:693px;width:34px;background:#0090f7"><i>13.11</i></div><div class="c" style="left:443px;top:693px;width:34px;background:#0099f6"><i>14.28</i></div><div class="c" style="left:477px;top:693px;width:34px;background:#00a5f5"><i>15.84</i></div><div class="c" style="left:511px;top:693px;width:34px;background:#00b3f4"><i>17.67</i></div><div class="c" style="left:545px;top:693px;width:34px;background:#00d0f2"><i>21.42</i></div><div class="c" style="left:579px;top:693px;width:34px;background:#00e0f1"><i>23.52</i></div><div class="c" style="left:613px;top:693px;width:34px;background:#00ebe9"><i>25.71</i></div><div class="c" style="left:647px;top:693px;width:40px;background:#00ebc4"><i>29.91</i></div><div class="c" style="left:687px;top:693px;width:40px;background:#00ebb4"><i>31.74</i></div><div class="c" style="left:727px;top:693px;width:40px;background:#00eba2"><i>33.72</i></div><div class="c" style="left:767px;top:693px;width:40px;background:#00eb9b"><i>34.56</i></div><div class="c" style="left:807px;top:693px;width:40px;background:#00eb7e"><i>37.77</i></div><div class="c" style="left:847px;top:693px;width:40px;background:#00eb6a"><i>40.02</i></div><div class="c" style="left:887px;top:693px;width:40px;background:#00eb42"><i>44.52</i></div><div class="c" style="left:927px;top:693px;width:40px;background:#00eb2a"><i>47.19</i></div><div class="c" style="left:967px;top:693px;width:40px;background:#00eb06"><i>51.27</i></div><div class="c" style="left:1007px;top:693px;width:40px;background:#22eb00"><i>55.53</i></div><div class="c" style="left:1047px;top:693px;width:40px;background:#54eb00"><i>60.87</i></div><div class="c" style="left:1087px;top:693px;width:40px;background:#afec00"><i>70.41</i></div><div class="c" style="left:1127px;top:693px;width:40px;background:#e8ec00"><i>76.50</i></div><div class="c" style="left:1167px;top:693px;width:40px;background:#ffde00"><i>80.52</i></div><div class="c" style="left:1207px;top:693px;width:40px;background:#ffbb00"><i>84.51</i></div><div class="c" style="left:1247px;top:693px;width:40px;background:#ff7d00"><i>91.59</i></div><div class="c" style="left:1287px;top:693px;width:40px;background:#ff5b00"><i>95.52</i></div><div class="c" style="left:1327px;top:693px;width:40px;background:#ff5c00"><i>95.40</i></div><div class="c" style="left:1367px;top:693px;width:40px;background:#ff5d00"><i>95.28</i></div><div class="c" style="left:1407px;top:693px;width:40px;background:#ff5d00"><i>95.28</i></div><div class="c" style="left:1447px;top:693px;width:40px;background:#ff5d00"><i>95.28</i></div><div class="c" style="left:341px;top:708px;width:34px;background:#0081f8"><i>11.28</i></div><div class="c" style="left:375px;top:708px;width:34px;background:#0089f7"><i>12.21</i></div><div class="c" style="left:409px;top:708px;width:34px;background:#0092f6"><i>13.47</i></div><div class="c" style="left:443px;top:708px;width:34px;background:#009cf6"><i>14.79</i></div><div class="c" style="left:477px;top:708px;width:34px;background:#00a8f5"><i>16.29</i></div><div class="c" style="left:511px;top:708px;width:34px;background:#00b5f4"><i>17.97</i></div><div class="c" style="left:545px;top:708px;width:34px;background:#00d0f2"><i>21.48</i></div><div class="c" style="left:579px;top:708px;width:34px;background:#00e0f1"><i>23.55</i></div><div class="c" style="left:613px;top:708px;width:34px;background:#00ebeb"><i>25.53</i></div><div class="c" style="left:647px;top:708px;width:40px;background:#00ebc4"><i>29.94</i></div><div class="c" style="left:687px;top:708px;width:40px;background:#00ebb5"><i>31.62</i></div><div class="c" style="left:727px;top:708px;width:40px;background:#00eb9b"><i>34.56</i></div><div class="c" style="left:767px;top:708px;width:40px;background:#00eb92"><i>35.52</i></div><div class="c" style="left:807px;top:708px;width:40px;background:#00eb74"><i>38.94</i></div><div class="c" style="left:847px;top:708px;width:40px;background:#00eb55"><i>42.42</i></div><div class="c" style="left:887px;top:708px;width:40px;background:#00eb3a"><i>45.45</i></div><div class="c" style="left:927px;top:708px;width:40px;background:#00eb16"><i>49.44</i></div><div class="c" style="left:967px;top:708px;width:40px;background:#12eb00"><i>53.88</i></div><div class="c" style="left:1007px;top:708px;width:40px;background:#3eeb00"><i>58.50</i></div><div class="c" style="left:1047px;top:708px;width:40px;background:#67eb00"><i>62.85</i></div><div class="c" style="left:1087px;top:708px;width:40px;background:#a9ec00"><i>69.84</i></div><div class="c" style="left:1127px;top:708px;width:40px;background:#e5ec00"><i>76.20</i></div><div class="c" style="left:1167px;top:708px;width:40px;background:#ffdd00"><i>80.64</i></div><div class="c" style="left:1207px;top:708px;width:40px;background:#ffbb00"><i>84.51</i></div><div class="c" style="left:1247px;top:708px;width:40px;background:#ff8100"><i>91.20</i></div><div class="c" style="left:1287px;top:708px;width:40px;background:#ff6600"><i>94.23</i></div><div class="c" style="left:1327px;top:708px;width:40px;background:#ff6000"><i>94.98</i></div><div class="c" style="left:1367px;top:708px;width:40px;background:#ff5900"><i>95.73</i></div><div class="c" style="left:1407px;top:708px;width:40px;background:#ff5900"><i>95.73</i></div><div class="c" style="left:1447px;top:708px;width:40px;background:#ff5900"><i>95.73</i></div><div class="c" style="left:341px;top:723px;width:34px;background:#0086f7"><i>11.94</i></div><div class="c" style="left:375px;top:723px;width:34px;background:#008df7"><i>12.84</i></div><div class="c" style="left:409px;top:723px;width:34px;background:#0093f6"><i>13.62</i></div><div class="c" style="left:443px;top:723px;width:34px;background:#009ff6"><i>15.06</i></div><div class="c" style="left:477px;top:723px;width:34px;background:#00a9f5"><i>16.47</i></div><div class="c" style="left:511px;top:723px;width:34px;background:#00b5f4"><i>18.00</i></div><div class="c" style="left:545px;top:723px;width:34px;background:#00ccf2"><i>20.97</i></div><div class="c" style="left:579px;top:723px;width:34px;background:#00dbf1"><i>22.92</i></div><div class="c" style="left:613px;top:723px;width:34px;background:#00e8f0"><i>24.54</i></div><div class="c" style="left:647px;top:723px;width:40px;background:#00ebd3"><i>28.26</i></div><div class="c" style="left:687px;top:723px;width:40px;background:#00ebc3"><i>30.00</i></div><div class="c" style="left:727px;top:723px;width:40px;background:#00eb96"><i>35.07</i></div><div class="c" style="left:767px;top:723px;width:40px;background:#00eb87"><i>36.75</i></div><div class="c" style="left:807px;top:723px;width:40px;background:#00eb6b"><i>39.96</i></div><div class="c" style="left:847px;top:723px;width:40px;background:#00eb47"><i>43.98</i></div><div class="c" style="left:887px;top:723px;width:40px;background:#00eb23"><i>48.06</i></div><div class="c" style="left:927px;top:723px;width:40px;background:#00eb08"><i>51.06</i></div><div class="c" style="left:967px;top:723px;width:40px;background:#24eb00"><i>55.74</i></div><div class="c" style="left:1007px;top:723px;width:40px;background:#4deb00"><i>60.06</i></div><div class="c" style="left:1047px;top:723px;width:40px;background:#79eb00"><i>64.71</i></div><div class="c" style="left:1087px;top:723px;width:40px;background:#acec00"><i>70.11</i></div><div class="c" style="left:1127px;top:723px;width:40px;background:#e3ec00"><i>75.99</i></div><div class="c" style="left:1167px;top:723px;width:40px;background:#ffdd00"><i>80.61</i></div><div class="c" style="left:1207px;top:723px;width:40px;background:#ffc400"><i>83.49</i></div><div class="c" style="left:1247px;top:723px;width:40px;background:#ff8200"><i>90.99</i></div><div class="c" style="left:1287px;top:723px;width:40px;background:#ff6400"><i>94.44</i></div><div class="c" style="left:1327px;top:723px;width:40px;background:#ff5b00"><i>95.46</i></div><div class="c" style="left:1367px;top:723px;width:40px;background:#ff5300"><i>96.45</i></div><div class="c" style="left:1407px;top:723px;width:40px;background:#ff5300"><i>96.45</i></div><div class="c" style="left:1447px;top:723px;width:40px;background:#ff5300"><i>96.45</i></div><div class="c" style="left:341px;top:738px;width:34px;background:#0081f8"><i>11.19</i></div><div class="c" style="left:375px;top:738px;width:34px;background:#0088f7"><i>12.12</i></div><div class="c" style="left:409px;top:738px;width:34px;background:#008ef7"><i>12.87</i></div><div class="c" style="left:443px;top:738px;width:34px;background:#0098f6"><i>14.22</i></div><div class="c" style="left:477px;top:738px;width:34px;background:#00a2f5"><i>15.54</i></div><div class="c" style="left:511px;top:738px;width:34px;background:#00b0f4"><i>17.34</i></div><div class="c" style="left:545px;top:738px;width:34px;background:#00c7f3"><i>20.28</i></div><div class="c" style="left:579px;top:738px;width:34px;background:#00d5f2"><i>22.17</i></div><div class="c" style="left:613px;top:738px;width:34px;background:#00e3f1"><i>24.00</i></div><div class="c" style="left:647px;top:738px;width:40px;background:#00ebd8"><i>27.69</i></div><div class="c" style="left:687px;top:738px;width:40px;background:#00ebc7"><i>29.61</i></div><div class="c" style="left:727px;top:738px;width:40px;background:#00eb96"><i>35.13</i></div><div class="c" style="left:767px;top:738px;width:40px;background:#00eb84"><i>37.08</i></div><div class="c" style="left:807px;top:738px;width:40px;background:#00eb69"><i>40.20</i></div><div class="c" style="left:847px;top:738px;width:40px;background:#00eb44"><i>44.31</i></div><div class="c" style="left:887px;top:738px;width:40px;background:#00eb1f"><i>48.45</i></div><div class="c" style="left:927px;top:738px;width:40px;background:#06eb00"><i>52.62</i></div><div class="c" style="left:967px;top:738px;width:40px;background:#2beb00"><i>56.46</i></div><div class="c" style="left:1007px;top:738px;width:40px;background:#53eb00"><i>60.75</i></div><div class="c" style="left:1047px;top:738px;width:40px;background:#79eb00"><i>64.71</i></div><div class="c" style="left:1087px;top:738px;width:40px;background:#abec00"><i>69.99</i></div><div class="c" style="left:1127px;top:738px;width:40px;background:#e3ec00"><i>75.99</i></div><div class="c" style="left:1167px;top:738px;width:40px;background:#ffd900"><i>81.09</i></div><div class="c" style="left:1207px;top:738px;width:40px;background:#ffc800"><i>83.04</i></div><div class="c" style="left:1247px;top:738px;width:40px;background:#ff8200"><i>90.99</i></div><div class="c" style="left:1287px;top:738px;width:40px;background:#ff6f00"><i>93.24</i></div><div class="c" style="left:1327px;top:738px;width:40px;background:#ff6200"><i>94.68</i></div><div class="c" style="left:1367px;top:738px;width:40px;background:#ff5600"><i>96.09</i></div><div class="c" style="left:1407px;top:738px;width:40px;background:#ff5600"><i>96.09</i></div><div class="c" style="left:1447px;top:738px;width:40px;background:#ff5600"><i>96.09</i></div><div class="c" style="left:341px;top:753px;width:34px;background:#007bf8"><i>10.44</i></div><div class="c" style="left:375px;top:753px;width:34px;background:#0082f8"><i>11.40</i></div><div class="c" style="left:409px;top:753px;width:34px;background:#0088f7"><i>12.12</i></div><div class="c" style="left:443px;top:753px;width:34px;background:#0091f6"><i>13.35</i></div><div class="c" style="left:477px;top:753px;width:34px;background:#009bf6"><i>14.58</i></div><div class="c" style="left:511px;top:753px;width:34px;background:#00adf4"><i>16.98</i></div><div class="c" style="left:545px;top:753px;width:34px;background:#00c2f3"><i>19.71</i></div><div class="c" style="left:579px;top:753px;width:34px;background:#00cff2"><i>21.30</i></div><div class="c" style="left:613px;top:753px;width:34px;background:#00def1"><i>23.28</i></div><div class="c" style="left:647px;top:753px;width:40px;background:#00ebdd"><i>27.12</i></div><div class="c" style="left:687px;top:753px;width:40px;background:#00ebca"><i>29.19</i></div><div class="c" style="left:727px;top:753px;width:40px;background:#00eb9a"><i>34.62</i></div><div class="c" style="left:767px;top:753px;width:40px;background:#00eb81"><i>37.41</i></div><div class="c" style="left:807px;top:753px;width:40px;background:#00eb6b"><i>39.96</i></div><div class="c" style="left:847px;top:753px;width:40px;background:#00eb41"><i>44.61</i></div><div class="c" style="left:887px;top:753px;width:40px;background:#00eb23"><i>48.06</i></div><div class="c" style="left:927px;top:753px;width:40px;background:#14eb00"><i>54.03</i></div><div class="c" style="left:967px;top:753px;width:40px;background:#29eb00"><i>56.34</i></div><div class="c" style="left:1007px;top:753px;width:40px;background:#51eb00"><i>60.57</i></div><div class="c" style="left:1047px;top:753px;width:40px;background:#78eb00"><i>64.68</i></div><div class="c" style="left:1087px;top:753px;width:40px;background:#abec00"><i>70.02</i></div><div class="c" style="left:1127px;top:753px;width:40px;background:#e2ec00"><i>75.81</i></div><div class="c" style="left:1167px;top:753px;width:40px;background:#ffe100"><i>80.22</i></div><div class="c" style="left:1207px;top:753px;width:40px;background:#ffc800"><i>83.01</i></div><div class="c" style="left:1247px;top:753px;width:40px;background:#ff9000"><i>89.49</i></div><div class="c" style="left:1287px;top:753px;width:40px;background:#ff7d00"><i>91.65</i></div><div class="c" style="left:1327px;top:753px;width:40px;background:#ff6900"><i>93.87</i></div><div class="c" style="left:1367px;top:753px;width:40px;background:#ff5600"><i>96.06</i></div><div class="c" style="left:1407px;top:753px;width:40px;background:#ff5600"><i>96.06</i></div><div class="c" style="left:1447px;top:753px;width:40px;background:#ff5600"><i>96.06</i></div><div class="c" style="left:341px;top:768px;width:34px;background:#0075f8"><i>9.72</i></div><div class="c" style="left:375px;top:768px;width:34px;background:#007df8"><i>10.65</i></div><div class="c" style="left:409px;top:768px;width:34px;background:#0084f7"><i>11.58</i></div><div class="c" style="left:443px;top:768px;width:34px;background:#008df7"><i>12.72</i></div><div class="c" style="left:477px;top:768px;width:34px;background:#0096f6"><i>13.92</i></div><div class="c" style="left:511px;top:768px;width:34px;background:#00a7f5"><i>16.11</i></div><div class="c" style="left:545px;top:768px;width:34px;background:#00b9f4"><i>18.51</i></div><div class="c" style="left:579px;top:768px;width:34px;background:#00c1f3"><i>19.56</i></div><div class="c" style="left:613px;top:768px;width:34px;background:#00cff2"><i>21.30</i></div><div class="c" style="left:647px;top:768px;width:40px;background:#00eaf0"><i>24.84</i></div><div class="c" style="left:687px;top:768px;width:40px;background:#00ebd0"><i>28.62</i></div><div class="c" style="left:727px;top:768px;width:40px;background:#00eb9e"><i>34.23</i></div><div class="c" style="left:767px;top:768px;width:40px;background:#00eb81"><i>37.41</i></div><div class="c" style="left:807px;top:768px;width:40px;background:#00eb6b"><i>39.96</i></div><div class="c" style="left:847px;top:768px;width:40px;background:#00eb51"><i>42.87</i></div><div class="c" style="left:887px;top:768px;width:40px;background:#00eb2a"><i>47.28</i></div><div class="c" style="left:927px;top:768px;width:40px;background:#14eb00"><i>54.03</i></div><div class="c" style="left:967px;top:768px;width:40px;background:#27eb00"><i>56.07</i></div><div class="c" style="left:1007px;top:768px;width:40px;background:#51eb00"><i>60.57</i></div><div class="c" style="left:1047px;top:768px;width:40px;background:#75eb00"><i>64.35</i></div><div class="c" style="left:1087px;top:768px;width:40px;background:#a1ec00"><i>69.03</i></div><div class="c" style="left:1127px;top:768px;width:40px;background:#daec00"><i>75.00</i></div><div class="c" style="left:1167px;top:768px;width:40px;background:#ffeb00"><i>78.99</i></div><div class="c" style="left:1207px;top:768px;width:40px;background:#ffc800"><i>83.01</i></div><div class="c" style="left:1247px;top:768px;width:40px;background:#ff9800"><i>88.50</i></div><div class="c" style="left:1287px;top:768px;width:40px;background:#ff9100"><i>89.28</i></div><div class="c" style="left:1327px;top:768px;width:40px;background:#ff9000"><i>89.49</i></div><div class="c" style="left:1367px;top:768px;width:40px;background:#ff8e00"><i>89.70</i></div><div class="c" style="left:1407px;top:768px;width:40px;background:#ff8e00"><i>89.70</i></div><div class="c" style="left:1447px;top:768px;width:40px;background:#ff8e00"><i>89.70</i></div><div class="c" style="left:341px;top:783px;width:34px;background:#0075f8"><i>9.69</i></div><div class="c" style="left:375px;top:783px;width:34px;background:#007ef8"><i>10.80</i></div><div class="c" style="left:409px;top:783px;width:34px;background:#0083f8"><i>11.43</i></div><div class="c" style="left:443px;top:783px;width:34px;background:#008af7"><i>12.39</i></div><div class="c" style="left:477px;top:783px;width:34px;background:#0094f6"><i>13.65</i></div><div class="c" style="left:511px;top:783px;width:34px;background:#00a0f5"><i>15.30</i></div><div class="c" style="left:545px;top:783px;width:34px;background:#00b5f4"><i>18.00</i></div><div class="c" style="left:579px;top:783px;width:34px;background:#00bbf3"><i>18.75</i></div><div class="c" style="left:613px;top:783px;width:34px;background:#00c8f3"><i>20.43</i></div><div class="c" style="left:647px;top:783px;width:40px;background:#00eaf0"><i>24.84</i></div><div class="c" style="left:687px;top:783px;width:40px;background:#00ebd0"><i>28.62</i></div><div class="c" style="left:727px;top:783px;width:40px;background:#00eb9e"><i>34.23</i></div><div class="c" style="left:767px;top:783px;width:40px;background:#00eb81"><i>37.41</i></div><div class="c" style="left:807px;top:783px;width:40px;background:#00eb73"><i>39.06</i></div><div class="c" style="left:847px;top:783px;width:40px;background:#00eb51"><i>42.87</i></div><div class="c" style="left:887px;top:783px;width:40px;background:#00eb2a"><i>47.28</i></div><div class="c" style="left:927px;top:783px;width:40px;background:#14eb00"><i>54.03</i></div><div class="c" style="left:967px;top:783px;width:40px;background:#27eb00"><i>56.07</i></div><div class="c" style="left:1007px;top:783px;width:40px;background:#51eb00"><i>60.57</i></div><div class="c" style="left:1047px;top:783px;width:40px;background:#6eeb00"><i>63.60</i></div><div class="c" style="left:1087px;top:783px;width:40px;background:#9dec00"><i>68.55</i></div><div class="c" style="left:1127px;top:783px;width:40px;background:#daec00"><i>75.00</i></div><div class="c" style="left:1167px;top:783px;width:40px;background:#f7ec00"><i>78.03</i></div><div class="c" style="left:1207px;top:783px;width:40px;background:#ffd100"><i>81.99</i></div><div class="c" style="left:1247px;top:783px;width:40px;background:#ffa500"><i>87.00</i></div><div class="c" style="left:1287px;top:783px;width:40px;background:#ff9900"><i>88.38</i></div><div class="c" style="left:1327px;top:783px;width:40px;background:#ffa300"><i>87.30</i></div><div class="c" style="left:1367px;top:783px;width:40px;background:#ffac00"><i>86.25</i></div><div class="c" style="left:1407px;top:783px;width:40px;background:#ffac00"><i>86.25</i></div><div class="c" style="left:1447px;top:783px;width:40px;background:#ffac00"><i>86.25</i></div><div class="c" style="left:341px;top:798px;width:34px;background:#0075f8"><i>9.69</i></div><div class="c" style="left:375px;top:798px;width:34px;background:#007ef8"><i>10.80</i></div><div class="c" style="left:409px;top:798px;width:34px;background:#0083f8"><i>11.43</i></div><div class="c" style="left:443px;top:798px;width:34px;background:#008af7"><i>12.39</i></div><div class="c" style="left:477px;top:798px;width:34px;background:#0094f6"><i>13.65</i></div><div class="c" style="left:511px;top:798px;width:34px;background:#00a0f5"><i>15.30</i></div><div class="c" style="left:545px;top:798px;width:34px;background:#00b5f4"><i>18.00</i></div><div class="c" style="left:579px;top:798px;width:34px;background:#00bbf3"><i>18.75</i></div><div class="c" style="left:613px;top:798px;width:34px;background:#00c8f3"><i>20.43</i></div><div class="c" style="left:647px;top:798px;width:40px;background:#00eaf0"><i>24.84</i></div><div class="c" style="left:687px;top:798px;width:40px;background:#00ebd0"><i>28.62</i></div><div class="c" style="left:727px;top:798px;width:40px;background:#00eb9e"><i>34.23</i></div><div class="c" style="left:767px;top:798px;width:40px;background:#00eb81"><i>37.41</i></div><div class="c" style="left:807px;top:798px;width:40px;background:#00eb71"><i>39.21</i></div><div class="c" style="left:847px;top:798px;width:40px;background:#00eb51"><i>42.87</i></div><div class="c" style="left:887px;top:798px;width:40px;background:#00eb2a"><i>47.28</i></div><div class="c" style="left:927px;top:798px;width:40px;background:#14eb00"><i>54.03</i></div><div class="c" style="left:967px;top:798px;width:40px;background:#27eb00"><i>56.07</i></div><div class="c" style="left:1007px;top:798px;width:40px;background:#51eb00"><i>60.57</i></div><div class="c" style="left:1047px;top:798px;width:40px;background:#6eeb00"><i>63.60</i></div><div class="c" style="left:1087px;top:798px;width:40px;background:#98ec00"><i>68.01</i></div><div class="c" style="left:1127px;top:798px;width:40px;background:#d8ec00"><i>74.79</i></div><div class="c" style="left:1167px;top:798px;width:40px;background:#f1ec00"><i>77.49</i></div><div class="c" style="left:1207px;top:798px;width:40px;background:#ffd200"><i>81.84</i></div><div class="c" style="left:1247px;top:798px;width:40px;background:#ffad00"><i>86.13</i></div><div class="c" style="left:1287px;top:798px;width:40px;background:#ffa100"><i>87.51</i></div><div class="c" style="left:1327px;top:798px;width:40px;background:#ffa800"><i>86.70</i></div><div class="c" style="left:1367px;top:798px;width:40px;background:#ffbb00"><i>84.54</i></div><div class="c" style="left:1407px;top:798px;width:40px;background:#ffbb00"><i>84.54</i></div><div class="c" style="left:1447px;top:798px;width:40px;background:#ffbb00"><i>84.54</i></div><div class="c" style="left:341px;top:813px;width:34px;background:#0075f8"><i>9.69</i></div><div class="c" style="left:375px;top:813px;width:34px;background:#007ef8"><i>10.80</i></div><div class="c" style="left:409px;top:813px;width:34px;background:#0083f8"><i>11.43</i></div><div class="c" style="left:443px;top:813px;width:34px;background:#008af7"><i>12.39</i></div><div class="c" style="left:477px;top:813px;width:34px;background:#0094f6"><i>13.65</i></div><div class="c" style="left:511px;top:813px;width:34px;background:#00a0f5"><i>15.30</i></div><div class="c" style="left:545px;top:813px;width:34px;background:#00b5f4"><i>18.00</i></div><div class="c" style="left:579px;top:813px;width:34px;background:#00bbf3"><i>18.75</i></div><div class="c" style="left:613px;top:813px;width:34px;background:#00c8f3"><i>20.43</i></div><div class="c" style="left:647px;top:813px;width:40px;background:#00eaf0"><i>24.84</i></div><div class="c" style="left:687px;top:813px;width:40px;background:#00ebd0"><i>28.62</i></div><div class="c" style="left:727px;top:813px;width:40px;background:#00eb9e"><i>34.23</i></div><div class="c" style="left:767px;top:813px;width:40px;background:#00eb81"><i>37.41</i></div><div class="c" style="left:807px;top:813px;width:40px;background:#00eb73"><i>39.06</i></div><div class="c" style="left:847px;top:813px;width:40px;background:#00eb51"><i>42.87</i></div><div class="c" style="left:887px;top:813px;width:40px;background:#00eb2a"><i>47.28</i></div><div class="c" style="left:927px;top:813px;width:40px;background:#14eb00"><i>54.03</i></div><div class="c" style="left:967px;top:813px;width:40px;background:#27eb00"><i>56.07</i></div><div class="c" style="left:1007px;top:813px;width:40px;background:#51eb00"><i>60.57</i></div><div class="c" style="left:1047px;top:813px;width:40px;background:#6eeb00"><i>63.60</i></div><div class="c" style="left:1087px;top:813px;width:40px;background:#96ec00"><i>67.86</i></div><div class="c" style="left:1127px;top:813px;width:40px;background:#d4ec00"><i>74.40</i></div><div class="c" style="left:1167px;top:813px;width:40px;background:#efec00"><i>77.25</i></div><div class="c" style="left:1207px;top:813px;width:40px;background:#ffd200"><i>81.84</i></div><div class="c" style="left:1247px;top:813px;width:40px;background:#ffb500"><i>85.26</i></div><div class="c" style="left:1287px;top:813px;width:40px;background:#ffa900"><i>86.64</i></div><div class="c" style="left:1327px;top:813px;width:40px;background:#ffb200"><i>85.50</i></div><div class="c" style="left:1367px;top:813px;width:40px;background:#ffc200"><i>83.70</i></div><div class="c" style="left:1407px;top:813px;width:40px;background:#ffc200"><i>83.70</i></div><div class="c" style="left:1447px;top:813px;width:40px;background:#ffc200"><i>83.70</i></div>
<div style="left:309px;top:127px;width:557px;height:549px;border:1px solid #1a1a1a;border-radius:6px 6px 0 0;background:linear-gradient(#9fb7d4 0px,#b3c9e2 30px,#bdd2e9 60px,#c0d5ec 100%)"></div>
<div style="left:310px;top:128px;width:555px;height:2px;background:linear-gradient(#c9d8ea,transparent);border-radius:5px 5px 0 0"></div>
<div class="t" style="left:321px;top:140px;width:300px;height:14px;font-size:11.6px;color:#000">FTECU 전력 사령관 수입</div>
<div style="left:824px;top:137px;width:32px;height:18px;border:1px solid #5a1a12;border-radius:3px;background:linear-gradient(#e8a99a 0%,#d47863 45%,#b83a22 50%,#c9503a 100%)"></div>
<svg style="position:absolute;left:834px;top:141px" width="13" height="10" viewBox="0 0 13 10"><path d="M2 1.5L11 8.5M11 1.5L2 8.5" stroke="#5a3030" stroke-width="3.6"/><path d="M2 1.5L11 8.5M11 1.5L2 8.5" stroke="#fff" stroke-width="2"/></svg>
<div style="left:317px;top:158px;width:541px;height:510px;background:#f0f0f0"></div>
<div style="left:310px;top:674px;width:555px;height:1px;background:#3cd2f0"></div>
<div style="left:864px;top:140px;width:1px;height:535px;background:#3cd2f0"></div>
<div style="left:320px;top:161px;width:535px;height:502px;border:1px solid #dadada;box-shadow:inset 1px 1px 0 #fff"></div>
<div class="t" style="left:330px;top:170px;width:148px;height:21px;border:1px solid #0078d7;border-radius:4px;background:#fff;text-align:center;padding-top:4px;font-size:11px">파일에서 연료 테이블 추출</div>
<div class="t" style="left:492px;top:175px;width:200px;height:14px;font-size:10.8px">.djm, .pvm 및 .zfm1 파일 가져 오기</div>
<div class="t" style="left:677px;top:170px;width:147px;height:21px;border:1px solid #d0d0d0;border-radius:4px;background:#fdfdfd;text-align:center;padding-top:4px;font-size:11px">연료 맵에 테이블 적용</div>
<div style="left:330px;top:195px;width:518px;height:458px;background:#fff;border:1px solid #a0a0a0;border-top:2px solid #a0a0a0;overflow:hidden"></div>
<div style="left:331px;top:197px;width:516px;height:455px;overflow:hidden"><div style="left:-331px;top:-197px;width:1px;height:1px"><div class="t" style="left:400px;top:197px;width:42px;height:21px;border-left:1px solid #e6e6e6;text-align:center;padding-top:5px;font-size:12px">0</div><div class="t" style="left:442px;top:197px;width:42px;height:21px;border-left:1px solid #e6e6e6;text-align:center;padding-top:5px;font-size:12px">2</div><div class="t" style="left:484px;top:197px;width:44px;height:21px;border-left:1px solid #e6e6e6;text-align:center;padding-top:5px;font-size:12px">5</div><div class="t" style="left:528px;top:197px;width:42px;height:21px;border-left:1px solid #e6e6e6;text-align:center;padding-top:5px;font-size:12px">10</div><div class="t" style="left:570px;top:197px;width:42px;height:21px;border-left:1px solid #e6e6e6;text-align:center;padding-top:5px;font-size:12px">15</div><div class="t" style="left:612px;top:197px;width:43px;height:21px;border-left:1px solid #e6e6e6;text-align:center;padding-top:5px;font-size:12px">20</div><div class="t" style="left:655px;top:197px;width:43px;height:21px;border-left:1px solid #e6e6e6;text-align:center;padding-top:5px;font-size:12px">40</div><div class="t" style="left:698px;top:197px;width:44px;height:21px;border-left:1px solid #e6e6e6;text-align:center;padding-top:5px;font-size:12px">60</div><div class="t" style="left:742px;top:197px;width:43px;height:21px;border-left:1px solid #e6e6e6;text-align:center;padding-top:5px;font-size:12px">80</div><div class="t" style="left:785px;top:197px;width:44px;height:21px;border-left:1px solid #e6e6e6;text-align:center;padding-top:5px;font-size:12px">100</div><div style="left:331px;top:218px;width:499px;height:1px;background:#a0a0a0"></div><div style="left:399px;top:197px;width:1px;height:456px;background:#a0a0a0"></div><div class="t" style="left:358px;top:219px;height:20px;padding-top:6px;font-size:11.2px">500</div><div style="left:331px;top:239px;width:68px;height:1px;background:#ececec"></div><div style="left:400px;top:239px;width:430px;height:1px;background:#a0a0a0"></div><div class="t" style="left:401px;top:219px;width:41px;height:20px;text-align:center;padding-top:6px;font-size:11px;background:#0a6fd6;color:#fff;">0</div><div class="t" style="left:443px;top:219px;width:41px;height:20px;text-align:center;padding-top:6px;font-size:11px;">0</div><div class="t" style="left:485px;top:219px;width:43px;height:20px;text-align:center;padding-top:6px;font-size:11px;">0</div><div class="t" style="left:529px;top:219px;width:41px;height:20px;text-align:center;padding-top:6px;font-size:11px;">0</div><div class="t" style="left:571px;top:219px;width:41px;height:20px;text-align:center;padding-top:6px;font-size:11px;">0</div><div class="t" style="left:613px;top:219px;width:42px;height:20px;text-align:center;padding-top:6px;font-size:11px;">0</div><div class="t" style="left:656px;top:219px;width:42px;height:20px;text-align:center;padding-top:6px;font-size:11px;">0</div><div class="t" style="left:699px;top:219px;width:43px;height:20px;text-align:center;padding-top:6px;font-size:11px;">0</div><div class="t" style="left:743px;top:219px;width:42px;height:20px;text-align:center;padding-top:6px;font-size:11px;">0</div><div class="t" style="left:786px;top:219px;width:43px;height:20px;text-align:center;padding-top:6px;font-size:11px;">0</div><div class="t" style="left:358px;top:240px;height:20px;padding-top:6px;font-size:11.2px">750</div><div style="left:331px;top:260px;width:68px;height:1px;background:#ececec"></div><div style="left:400px;top:260px;width:430px;height:1px;background:#a0a0a0"></div><div class="t" style="left:401px;top:240px;width:41px;height:20px;text-align:center;padding-top:6px;font-size:11px;">0</div><div class="t" style="left:443px;top:240px;width:41px;height:20px;text-align:center;padding-top:6px;font-size:11px;">0</div><div class="t" style="left:485px;top:240px;width:43px;height:20px;text-align:center;padding-top:6px;font-size:11px;">0</div><div class="t" style="left:529px;top:240px;width:41px;height:20px;text-align:center;padding-top:6px;font-size:11px;">0</div><div class="t" style="left:571px;top:240px;width:41px;height:20px;text-align:center;padding-top:6px;font-size:11px;">0</div><div class="t" style="left:613px;top:240px;width:42px;height:20px;text-align:center;padding-top:6px;font-size:11px;">0</div><div class="t" style="left:656px;top:240px;width:42px;height:20px;text-align:center;padding-top:6px;font-size:11px;">0</div><div class="t" style="left:699px;top:240px;width:43px;height:20px;text-align:center;padding-top:6px;font-size:11px;">0</div><div class="t" style="left:743px;top:240px;width:42px;height:20px;text-align:center;padding-top:6px;font-size:11px;">0</div><div class="t" style="left:786px;top:240px;width:43px;height:20px;text-align:center;padding-top:6px;font-size:11px;">0</div><div class="t" style="left:358px;top:261px;height:20px;padding-top:6px;font-size:11.2px">1000</div><div style="left:331px;top:281px;width:68px;height:1px;background:#ececec"></div><div style="left:400px;top:281px;width:430px;height:1px;background:#a0a0a0"></div><div class="t" style="left:401px;top:261px;width:41px;height:20px;text-align:center;padding-top:6px;font-size:11px;">0</div><div class="t" style="left:443px;top:261px;width:41px;height:20px;text-align:center;padding-top:6px;font-size:11px;">0</div><div class="t" style="left:485px;top:261px;width:43px;height:20px;text-align:center;padding-top:6px;font-size:11px;">0</div><div class="t" style="left:529px;top:261px;width:41px;height:20px;text-align:center;padding-top:6px;font-size:11px;">0</div><div class="t" style="left:571px;top:261px;width:41px;height:20px;text-align:center;padding-top:6px;font-size:11px;">0</div><div class="t" style="left:613px;top:261px;width:42px;height:20px;text-align:center;padding-top:6px;font-size:11px;">0</div><div class="t" style="left:656px;top:261px;width:42px;height:20px;text-align:center;padding-top:6px;font-size:11px;">0</div><div class="t" style="left:699px;top:261px;width:43px;height:20px;text-align:center;padding-top:6px;font-size:11px;">0</div><div class="t" style="left:743px;top:261px;width:42px;height:20px;text-align:center;padding-top:6px;font-size:11px;">0</div><div class="t" style="left:786px;top:261px;width:43px;height:20px;text-align:center;padding-top:6px;font-size:11px;">0</div><div class="t" style="left:358px;top:282px;height:20px;padding-top:6px;font-size:11.2px">1250</div><div style="left:331px;top:302px;width:68px;height:1px;background:#ececec"></div><div style="left:400px;top:302px;width:430px;height:1px;background:#a0a0a0"></div><div class="t" style="left:401px;top:282px;width:41px;height:20px;text-align:center;padding-top:6px;font-size:11px;">0</div><div class="t" style="left:443px;top:282px;width:41px;height:20px;text-align:center;padding-top:6px;font-size:11px;">0</div><div class="t" style="left:485px;top:282px;width:43px;height:20px;text-align:center;padding-top:6px;font-size:11px;">0</div><div class="t" style="left:529px;top:282px;width:41px;height:20px;text-align:center;padding-top:6px;font-size:11px;">0</div><div class="t" style="left:571px;top:282px;width:41px;height:20px;text-align:center;padding-top:6px;font-size:11px;">0</div><div class="t" style="left:613px;top:282px;width:42px;height:20px;text-align:center;padding-top:6px;font-size:11px;">0</div><div class="t" style="left:656px;top:282px;width:42px;height:20px;text-align:center;padding-top:6px;font-size:11px;">0</div><div class="t" style="left:699px;top:282px;width:43px;height:20px;text-align:center;padding-top:6px;font-size:11px;">0</div><div class="t" style="left:743px;top:282px;width:42px;height:20px;text-align:center;padding-top:6px;font-size:11px;">0</div><div class="t" style="left:786px;top:282px;width:43px;height:20px;text-align:center;padding-top:6px;font-size:11px;">0</div><div class="t" style="left:358px;top:303px;height:20px;padding-top:6px;font-size:11.2px">1500</div><div style="left:331px;top:323px;width:68px;height:1px;background:#ececec"></div><div style="left:400px;top:323px;width:430px;height:1px;background:#a0a0a0"></div><div class="t" style="left:401px;top:303px;width:41px;height:20px;text-align:center;padding-top:6px;font-size:11px;">0</div><div class="t" style="left:443px;top:303px;width:41px;height:20px;text-align:center;padding-top:6px;font-size:11px;">0</div><div class="t" style="left:485px;top:303px;width:43px;height:20px;text-align:center;padding-top:6px;font-size:11px;">0</div><div class="t" style="left:529px;top:303px;width:41px;height:20px;text-align:center;padding-top:6px;font-size:11px;">0</div><div class="t" style="left:571px;top:303px;width:41px;height:20px;text-align:center;padding-top:6px;font-size:11px;">0</div><div class="t" style="left:613px;top:303px;width:42px;height:20px;text-align:center;padding-top:6px;font-size:11px;">0</div><div class="t" style="left:656px;top:303px;width:42px;height:20px;text-align:center;padding-top:6px;font-size:11px;">0</div><div class="t" style="left:699px;top:303px;width:43px;height:20px;text-align:center;padding-top:6px;font-size:11px;">0</div><div class="t" style="left:743px;top:303px;width:42px;height:20px;text-align:center;padding-top:6px;font-size:11px;">0</div><div class="t" style="left:786px;top:303px;width:43px;height:20px;text-align:center;padding-top:6px;font-size:11px;">0</div><div class="t" style="left:358px;top:324px;height:20px;padding-top:6px;font-size:11.2px">1750</div><div style="left:331px;top:344px;width:68px;height:1px;background:#ececec"></div><div style="left:400px;top:344px;width:430px;height:1px;background:#a0a0a0"></div><div class="t" style="left:401px;top:324px;width:41px;height:20px;text-align:center;padding-top:6px;font-size:11px;">0</div><div class="t" style="left:443px;top:324px;width:41px;height:20px;text-align:center;padding-top:6px;font-size:11px;">0</div><div class="t" style="left:485px;top:324px;width:43px;height:20px;text-align:center;padding-top:6px;font-size:11px;">0</div><div class="t" style="left:529px;top:324px;width:41px;height:20px;text-align:center;padding-top:6px;font-size:11px;">0</div><div class="t" style="left:571px;top:324px;width:41px;height:20px;text-align:center;padding-top:6px;font-size:11px;">0</div><div class="t" style="left:613px;top:324px;width:42px;height:20px;text-align:center;padding-top:6px;font-size:11px;">0</div><div class="t" style="left:656px;top:324px;width:42px;height:20px;text-align:center;padding-top:6px;font-size:11px;">0</div><div class="t" style="left:699px;top:324px;width:43px;height:20px;text-align:center;padding-top:6px;font-size:11px;">0</div><div class="t" style="left:743px;top:324px;width:42px;height:20px;text-align:center;padding-top:6px;font-size:11px;">0</div><div class="t" style="left:786px;top:324px;width:43px;height:20px;text-align:center;padding-top:6px;font-size:11px;">0</div><div class="t" style="left:358px;top:345px;height:20px;padding-top:6px;font-size:11.2px">2000</div><div style="left:331px;top:365px;width:68px;height:1px;background:#ececec"></div><div style="left:400px;top:365px;width:430px;height:1px;background:#a0a0a0"></div><div class="t" style="left:401px;top:345px;width:41px;height:20px;text-align:center;padding-top:6px;font-size:11px;">0</div><div class="t" style="left:443px;top:345px;width:41px;height:20px;text-align:center;padding-top:6px;font-size:11px;">0</div><div class="t" style="left:485px;top:345px;width:43px;height:20px;text-align:center;padding-top:6px;font-size:11px;">0</div><div class="t" style="left:529px;top:345px;width:41px;height:20px;text-align:center;padding-top:6px;font-size:11px;">0</div><div class="t" style="left:571px;top:345px;width:41px;height:20px;text-align:center;padding-top:6px;font-size:11px;">0</div><div class="t" style="left:613px;top:345px;width:42px;height:20px;text-align:center;padding-top:6px;font-size:11px;">0</div><div class="t" style="left:656px;top:345px;width:42px;height:20px;text-align:center;padding-top:6px;font-size:11px;">0</div><div class="t" style="left:699px;top:345px;width:43px;height:20px;text-align:center;padding-top:6px;font-size:11px;">0</div><div class="t" style="left:743px;top:345px;width:42px;height:20px;text-align:center;padding-top:6px;font-size:11px;">0</div><div class="t" style="left:786px;top:345px;width:43px;height:20px;text-align:center;padding-top:6px;font-size:11px;">1</div><div class="t" style="left:358px;top:366px;height:20px;padding-top:6px;font-size:11.2px">2250</div><div style="left:331px;top:386px;width:68px;height:1px;background:#ececec"></div><div style="left:400px;top:386px;width:430px;height:1px;background:#a0a0a0"></div><div class="t" style="left:401px;top:366px;width:41px;height:20px;text-align:center;padding-top:6px;font-size:11px;">0</div><div class="t" style="left:443px;top:366px;width:41px;height:20px;text-align:center;padding-top:6px;font-size:11px;">0</div><div class="t" style="left:485px;top:366px;width:43px;height:20px;text-align:center;padding-top:6px;font-size:11px;">0</div><div class="t" style="left:529px;top:366px;width:41px;height:20px;text-align:center;padding-top:6px;font-size:11px;">0</div><div class="t" style="left:571px;top:366px;width:41px;height:20px;text-align:center;padding-top:6px;font-size:11px;">0</div><div class="t" style="left:613px;top:366px;width:42px;height:20px;text-align:center;padding-top:6px;font-size:11px;">0</div><div class="t" style="left:656px;top:366px;width:42px;height:20px;text-align:center;padding-top:6px;font-size:11px;">-1</div><div class="t" style="left:699px;top:366px;width:43px;height:20px;text-align:center;padding-top:6px;font-size:11px;">-4</div><div class="t" style="left:743px;top:366px;width:42px;height:20px;text-align:center;padding-top:6px;font-size:11px;">-8</div><div class="t" style="left:786px;top:366px;width:43px;height:20px;text-align:center;padding-top:6px;font-size:11px;">-4</div><div class="t" style="left:358px;top:387px;height:20px;padding-top:6px;font-size:11.2px">2500</div><div style="left:331px;top:407px;width:68px;height:1px;background:#ececec"></div><div style="left:400px;top:407px;width:430px;height:1px;background:#a0a0a0"></div><div class="t" style="left:401px;top:387px;width:41px;height:20px;text-align:center;padding-top:6px;font-size:11px;">0</div><div class="t" style="left:443px;top:387px;width:41px;height:20px;text-align:center;padding-top:6px;font-size:11px;">0</div><div class="t" style="left:485px;top:387px;width:43px;height:20px;text-align:center;padding-top:6px;font-size:11px;">0</div><div class="t" style="left:529px;top:387px;width:41px;height:20px;text-align:center;padding-top:6px;font-size:11px;">0</div><div class="t" style="left:571px;top:387px;width:41px;height:20px;text-align:center;padding-top:6px;font-size:11px;">0</div><div class="t" style="left:613px;top:387px;width:42px;height:20px;text-align:center;padding-top:6px;font-size:11px;">0</div><div class="t" style="left:656px;top:387px;width:42px;height:20px;text-align:center;padding-top:6px;font-size:11px;">-10</div><div class="t" style="left:699px;top:387px;width:43px;height:20px;text-align:center;padding-top:6px;font-size:11px;">-10</div><div class="t" style="left:743px;top:387px;width:42px;height:20px;text-align:center;padding-top:6px;font-size:11px;">-6</div><div class="t" style="left:786px;top:387px;width:43px;height:20px;text-align:center;padding-top:6px;font-size:11px;">-3</div><div class="t" style="left:358px;top:408px;height:20px;padding-top:6px;font-size:11.2px">2750</div><div style="left:331px;top:428px;width:68px;height:1px;background:#ececec"></div><div style="left:400px;top:428px;width:430px;height:1px;background:#a0a0a0"></div><div class="t" style="left:401px;top:408px;width:41px;height:20px;text-align:center;padding-top:6px;font-size:11px;">0</div><div class="t" style="left:443px;top:408px;width:41px;height:20px;text-align:center;padding-top:6px;font-size:11px;">0</div><div class="t" style="left:485px;top:408px;width:43px;height:20px;text-align:center;padding-top:6px;font-size:11px;">0</div><div class="t" style="left:529px;top:408px;width:41px;height:20px;text-align:center;padding-top:6px;font-size:11px;">0</div><div class="t" style="left:571px;top:408px;width:41px;height:20px;text-align:center;padding-top:6px;font-size:11px;">0</div><div class="t" style="left:613px;top:408px;width:42px;height:20px;text-align:center;padding-top:6px;font-size:11px;">0</div><div class="t" style="left:656px;top:408px;width:42px;height:20px;text-align:center;padding-top:6px;font-size:11px;">-9</div><div class="t" style="left:699px;top:408px;width:43px;height:20px;text-align:center;padding-top:6px;font-size:11px;">-9</div><div class="t" style="left:743px;top:408px;width:42px;height:20px;text-align:center;padding-top:6px;font-size:11px;">-7</div><div class="t" style="left:786px;top:408px;width:43px;height:20px;text-align:center;padding-top:6px;font-size:11px;">-11</div><div class="t" style="left:358px;top:429px;height:20px;padding-top:6px;font-size:11.2px">3000</div><div style="left:331px;top:449px;width:68px;height:1px;background:#ececec"></div><div style="left:400px;top:449px;width:430px;height:1px;background:#a0a0a0"></div><div class="t" style="left:401px;top:429px;width:41px;height:20px;text-align:center;padding-top:6px;font-size:11px;">0</div><div class="t" style="left:443px;top:429px;width:41px;height:20px;text-align:center;padding-top:6px;font-size:11px;">0</div><div class="t" style="left:485px;top:429px;width:43px;height:20px;text-align:center;padding-top:6px;font-size:11px;">0</div><div class="t" style="left:529px;top:429px;width:41px;height:20px;text-align:center;padding-top:6px;font-size:11px;">0</div><div class="t" style="left:571px;top:429px;width:41px;height:20px;text-align:center;padding-top:6px;font-size:11px;">0</div><div class="t" style="left:613px;top:429px;width:42px;height:20px;text-align:center;padding-top:6px;font-size:11px;">0</div><div class="t" style="left:656px;top:429px;width:42px;height:20px;text-align:center;padding-top:6px;font-size:11px;">-7</div><div class="t" style="left:699px;top:429px;width:43px;height:20px;text-align:center;padding-top:6px;font-size:11px;">-2</div><div class="t" style="left:743px;top:429px;width:42px;height:20px;text-align:center;padding-top:6px;font-size:11px;">-5</div><div class="t" style="left:786px;top:429px;width:43px;height:20px;text-align:center;padding-top:6px;font-size:11px;">-8</div><div class="t" style="left:358px;top:450px;height:20px;padding-top:6px;font-size:11.2px">3250</div><div style="left:331px;top:470px;width:68px;height:1px;background:#ececec"></div><div style="left:400px;top:470px;width:430px;height:1px;background:#a0a0a0"></div><div class="t" style="left:401px;top:450px;width:41px;height:20px;text-align:center;padding-top:6px;font-size:11px;">0</div><div class="t" style="left:443px;top:450px;width:41px;height:20px;text-align:center;padding-top:6px;font-size:11px;">0</div><div class="t" style="left:485px;top:450px;width:43px;height:20px;text-align:center;padding-top:6px;font-size:11px;">0</div><div class="t" style="left:529px;top:450px;width:41px;height:20px;text-align:center;padding-top:6px;font-size:11px;">0</div><div class="t" style="left:571px;top:450px;width:41px;height:20px;text-align:center;padding-top:6px;font-size:11px;">0</div><div class="t" style="left:613px;top:450px;width:42px;height:20px;text-align:center;padding-top:6px;font-size:11px;">0</div><div class="t" style="left:656px;top:450px;width:42px;height:20px;text-align:center;padding-top:6px;font-size:11px;">0</div><div class="t" style="left:699px;top:450px;width:43px;height:20px;text-align:center;padding-top:6px;font-size:11px;">0</div><div class="t" style="left:743px;top:450px;width:42px;height:20px;text-align:center;padding-top:6px;font-size:11px;">-4</div><div class="t" style="left:786px;top:450px;width:43px;height:20px;text-align:center;padding-top:6px;font-size:11px;">-5</div><div class="t" style="left:358px;top:471px;height:20px;padding-top:6px;font-size:11.2px">3500</div><div style="left:331px;top:491px;width:68px;height:1px;background:#ececec"></div><div style="left:400px;top:491px;width:430px;height:1px;background:#a0a0a0"></div><div class="t" style="left:401px;top:471px;width:41px;height:20px;text-align:center;padding-top:6px;font-size:11px;">0</div><div class="t" style="left:443px;top:471px;width:41px;height:20px;text-align:center;padding-top:6px;font-size:11px;">0</div><div class="t" style="left:485px;top:471px;width:43px;height:20px;text-align:center;padding-top:6px;font-size:11px;">0</div><div class="t" style="left:529px;top:471px;width:41px;height:20px;text-align:center;padding-top:6px;font-size:11px;">0</div><div class="t" style="left:571px;top:471px;width:41px;height:20px;text-align:center;padding-top:6px;font-size:11px;">0</div><div class="t" style="left:613px;top:471px;width:42px;height:20px;text-align:center;padding-top:6px;font-size:11px;">0</div><div class="t" style="left:656px;top:471px;width:42px;height:20px;text-align:center;padding-top:6px;font-size:11px;">11</div><div class="t" style="left:699px;top:471px;width:43px;height:20px;text-align:center;padding-top:6px;font-size:11px;">0</div><div class="t" style="left:743px;top:471px;width:42px;height:20px;text-align:center;padding-top:6px;font-size:11px;">-5</div><div class="t" style="left:786px;top:471px;width:43px;height:20px;text-align:center;padding-top:6px;font-size:11px;">-4</div><div class="t" style="left:358px;top:492px;height:20px;padding-top:6px;font-size:11.2px">3750</div><div style="left:331px;top:512px;width:68px;height:1px;background:#ececec"></div><div style="left:400px;top:512px;width:430px;height:1px;background:#a0a0a0"></div><div class="t" style="left:401px;top:492px;width:41px;height:20px;text-align:center;padding-top:6px;font-size:11px;">0</div><div class="t" style="left:443px;top:492px;width:41px;height:20px;text-align:center;padding-top:6px;font-size:11px;">0</div><div class="t" style="left:485px;top:492px;width:43px;height:20px;text-align:center;padding-top:6px;font-size:11px;">0</div><div class="t" style="left:529px;top:492px;width:41px;height:20px;text-align:center;padding-top:6px;font-size:11px;">0</div><div class="t" style="left:571px;top:492px;width:41px;height:20px;text-align:center;padding-top:6px;font-size:11px;">0</div><div class="t" style="left:613px;top:492px;width:42px;height:20px;text-align:center;padding-top:6px;font-size:11px;">0</div><div class="t" style="left:656px;top:492px;width:42px;height:20px;text-align:center;padding-top:6px;font-size:11px;">17</div><div class="t" style="left:699px;top:492px;width:43px;height:20px;text-align:center;padding-top:6px;font-size:11px;">6</div><div class="t" style="left:743px;top:492px;width:42px;height:20px;text-align:center;padding-top:6px;font-size:11px;">-1</div><div class="t" style="left:786px;top:492px;width:43px;height:20px;text-align:center;padding-top:6px;font-size:11px;">1</div><div class="t" style="left:358px;top:513px;height:20px;padding-top:6px;font-size:11.2px">4000</div><div style="left:331px;top:533px;width:68px;height:1px;background:#ececec"></div><div style="left:400px;top:533px;width:430px;height:1px;background:#a0a0a0"></div><div class="t" style="left:401px;top:513px;width:41px;height:20px;text-align:center;padding-top:6px;font-size:11px;">0</div><div class="t" style="left:443px;top:513px;width:41px;height:20px;text-align:center;padding-top:6px;font-size:11px;">0</div><div class="t" style="left:485px;top:513px;width:43px;height:20px;text-align:center;padding-top:6px;font-size:11px;">0</div><div class="t" style="left:529px;top:513px;width:41px;height:20px;text-align:center;padding-top:6px;font-size:11px;">0</div><div class="t" style="left:571px;top:513px;width:41px;height:20px;text-align:center;padding-top:6px;font-size:11px;">0</div><div class="t" style="left:613px;top:513px;width:42px;height:20px;text-align:center;padding-top:6px;font-size:11px;">0</div><div class="t" style="left:656px;top:513px;width:42px;height:20px;text-align:center;padding-top:6px;font-size:11px;">16</div><div class="t" style="left:699px;top:513px;width:43px;height:20px;text-align:center;padding-top:6px;font-size:11px;">10</div><div class="t" style="left:743px;top:513px;width:42px;height:20px;text-align:center;padding-top:6px;font-size:11px;">13</div><div class="t" style="left:786px;top:513px;width:43px;height:20px;text-align:center;padding-top:6px;font-size:11px;">7</div><div class="t" style="left:358px;top:534px;height:20px;padding-top:6px;font-size:11.2px">4250</div><div style="left:331px;top:554px;width:68px;height:1px;background:#ececec"></div><div style="left:400px;top:554px;width:430px;height:1px;background:#a0a0a0"></div><div class="t" style="left:401px;top:534px;width:41px;height:20px;text-align:center;padding-top:6px;font-size:11px;">0</div><div class="t" style="left:443px;top:534px;width:41px;height:20px;text-align:center;padding-top:6px;font-size:11px;">0</div><div class="t" style="left:485px;top:534px;width:43px;height:20px;text-align:center;padding-top:6px;font-size:11px;">0</div><div class="t" style="left:529px;top:534px;width:41px;height:20px;text-align:center;padding-top:6px;font-size:11px;">0</div><div class="t" style="left:571px;top:534px;width:41px;height:20px;text-align:center;padding-top:6px;font-size:11px;">0</div><div class="t" style="left:613px;top:534px;width:42px;height:20px;text-align:center;padding-top:6px;font-size:11px;">0</div><div class="t" style="left:656px;top:534px;width:42px;height:20px;text-align:center;padding-top:6px;font-size:11px;">16</div><div class="t" style="left:699px;top:534px;width:43px;height:20px;text-align:center;padding-top:6px;font-size:11px;">15</div><div class="t" style="left:743px;top:534px;width:42px;height:20px;text-align:center;padding-top:6px;font-size:11px;">12</div><div class="t" style="left:786px;top:534px;width:43px;height:20px;text-align:center;padding-top:6px;font-size:11px;">3</div><div class="t" style="left:358px;top:555px;height:20px;padding-top:6px;font-size:11.2px">4500</div><div style="left:331px;top:575px;width:68px;height:1px;background:#ececec"></div><div style="left:400px;top:575px;width:430px;height:1px;background:#a0a0a0"></div><div class="t" style="left:401px;top:555px;width:41px;height:20px;text-align:center;padding-top:6px;font-size:11px;">0</div><div class="t" style="left:443px;top:555px;width:41px;height:20px;text-align:center;padding-top:6px;font-size:11px;">0</div><div class="t" style="left:485px;top:555px;width:43px;height:20px;text-align:center;padding-top:6px;font-size:11px;">0</div><div class="t" style="left:529px;top:555px;width:41px;height:20px;text-align:center;padding-top:6px;font-size:11px;">0</div><div class="t" style="left:571px;top:555px;width:41px;height:20px;text-align:center;padding-top:6px;font-size:11px;">0</div><div class="t" style="left:613px;top:555px;width:42px;height:20px;text-align:center;padding-top:6px;font-size:11px;">0</div><div class="t" style="left:656px;top:555px;width:42px;height:20px;text-align:center;padding-top:6px;font-size:11px;">17</div><div class="t" style="left:699px;top:555px;width:43px;height:20px;text-align:center;padding-top:6px;font-size:11px;">10</div><div class="t" style="left:743px;top:555px;width:42px;height:20px;text-align:center;padding-top:6px;font-size:11px;">6</div><div class="t" style="left:786px;top:555px;width:43px;height:20px;text-align:center;padding-top:6px;font-size:11px;">-1</div><div class="t" style="left:358px;top:576px;height:20px;padding-top:6px;font-size:11.2px">4750</div><div style="left:331px;top:596px;width:68px;height:1px;background:#ececec"></div><div style="left:400px;top:596px;width:430px;height:1px;background:#a0a0a0"></div><div class="t" style="left:401px;top:576px;width:41px;height:20px;text-align:center;padding-top:6px;font-size:11px;">0</div><div class="t" style="left:443px;top:576px;width:41px;height:20px;text-align:center;padding-top:6px;font-size:11px;">0</div><div class="t" style="left:485px;top:576px;width:43px;height:20px;text-align:center;padding-top:6px;font-size:11px;">0</div><div class="t" style="left:529px;top:576px;width:41px;height:20px;text-align:center;padding-top:6px;font-size:11px;">0</div><div class="t" style="left:571px;top:576px;width:41px;height:20px;text-align:center;padding-top:6px;font-size:11px;">0</div><div class="t" style="left:613px;top:576px;width:42px;height:20px;text-align:center;padding-top:6px;font-size:11px;">0</div><div class="t" style="left:656px;top:576px;width:42px;height:20px;text-align:center;padding-top:6px;font-size:11px;">10</div><div class="t" style="left:699px;top:576px;width:43px;height:20px;text-align:center;padding-top:6px;font-size:11px;">6</div><div class="t" style="left:743px;top:576px;width:42px;height:20px;text-align:center;padding-top:6px;font-size:11px;">6</div><div class="t" style="left:786px;top:576px;width:43px;height:20px;text-align:center;padding-top:6px;font-size:11px;">-2</div><div class="t" style="left:358px;top:597px;height:20px;padding-top:6px;font-size:11.2px">5000</div><div style="left:331px;top:617px;width:68px;height:1px;background:#ececec"></div><div style="left:400px;top:617px;width:430px;height:1px;background:#a0a0a0"></div><div class="t" style="left:401px;top:597px;width:41px;height:20px;text-align:center;padding-top:6px;font-size:11px;">0</div><div class="t" style="left:443px;top:597px;width:41px;height:20px;text-align:center;padding-top:6px;font-size:11px;">0</div><div class="t" style="left:485px;top:597px;width:43px;height:20px;text-align:center;padding-top:6px;font-size:11px;">0</div><div class="t" style="left:529px;top:597px;width:41px;height:20px;text-align:center;padding-top:6px;font-size:11px;">0</div><div class="t" style="left:571px;top:597px;width:41px;height:20px;text-align:center;padding-top:6px;font-size:11px;">0</div><div class="t" style="left:613px;top:597px;width:42px;height:20px;text-align:center;padding-top:6px;font-size:11px;">0</div><div class="t" style="left:656px;top:597px;width:42px;height:20px;text-align:center;padding-top:6px;font-size:11px;">14</div><div class="t" style="left:699px;top:597px;width:43px;height:20px;text-align:center;padding-top:6px;font-size:11px;">11</div><div class="t" style="left:743px;top:597px;width:42px;height:20px;text-align:center;padding-top:6px;font-size:11px;">7</div><div class="t" style="left:786px;top:597px;width:43px;height:20px;text-align:center;padding-top:6px;font-size:11px;">-3</div><div class="t" style="left:358px;top:618px;height:20px;padding-top:6px;font-size:11.2px">5250</div><div style="left:331px;top:638px;width:68px;height:1px;background:#ececec"></div><div style="left:400px;top:638px;width:430px;height:1px;background:#a0a0a0"></div><div class="t" style="left:401px;top:618px;width:41px;height:20px;text-align:center;padding-top:6px;font-size:11px;">0</div><div class="t" style="left:443px;top:618px;width:41px;height:20px;text-align:center;padding-top:6px;font-size:11px;">0</div><div class="t" style="left:485px;top:618px;width:43px;height:20px;text-align:center;padding-top:6px;font-size:11px;">0</div><div class="t" style="left:529px;top:618px;width:41px;height:20px;text-align:center;padding-top:6px;font-size:11px;">0</div><div class="t" style="left:571px;top:618px;width:41px;height:20px;text-align:center;padding-top:6px;font-size:11px;">0</div><div class="t" style="left:613px;top:618px;width:42px;height:20px;text-align:center;padding-top:6px;font-size:11px;">0</div><div class="t" style="left:656px;top:618px;width:42px;height:20px;text-align:center;padding-top:6px;font-size:11px;">6</div><div class="t" style="left:699px;top:618px;width:43px;height:20px;text-align:center;padding-top:6px;font-size:11px;">13</div><div class="t" style="left:743px;top:618px;width:42px;height:20px;text-align:center;padding-top:6px;font-size:11px;">5</div><div class="t" style="left:786px;top:618px;width:43px;height:20px;text-align:center;padding-top:6px;font-size:11px;">-2</div><div class="t" style="left:358px;top:639px;height:20px;padding-top:6px;font-size:11.2px">5500</div><div style="left:331px;top:659px;width:68px;height:1px;background:#ececec"></div><div style="left:400px;top:659px;width:430px;height:1px;background:#a0a0a0"></div><div class="t" style="left:401px;top:639px;width:41px;height:20px;text-align:center;padding-top:6px;font-size:11px;">0</div><div class="t" style="left:443px;top:639px;width:41px;height:20px;text-align:center;padding-top:6px;font-size:11px;">0</div><div class="t" style="left:485px;top:639px;width:43px;height:20px;text-align:center;padding-top:6px;font-size:11px;">0</div><div class="t" style="left:529px;top:639px;width:41px;height:20px;text-align:center;padding-top:6px;font-size:11px;">0</div><div class="t" style="left:571px;top:639px;width:41px;height:20px;text-align:center;padding-top:6px;font-size:11px;">0</div><div class="t" style="left:613px;top:639px;width:42px;height:20px;text-align:center;padding-top:6px;font-size:11px;">0</div><div class="t" style="left:656px;top:639px;width:42px;height:20px;text-align:center;padding-top:6px;font-size:11px;">8</div><div class="t" style="left:699px;top:639px;width:43px;height:20px;text-align:center;padding-top:6px;font-size:11px;">17</div><div class="t" style="left:743px;top:639px;width:42px;height:20px;text-align:center;padding-top:6px;font-size:11px;">2</div><div class="t" style="left:786px;top:639px;width:43px;height:20px;text-align:center;padding-top:6px;font-size:11px;">-1</div><div style="left:442px;top:219px;width:1px;height:434px;background:#a0a0a0"></div><div style="left:484px;top:219px;width:1px;height:434px;background:#a0a0a0"></div><div style="left:528px;top:219px;width:1px;height:434px;background:#a0a0a0"></div><div style="left:570px;top:219px;width:1px;height:434px;background:#a0a0a0"></div><div style="left:612px;top:219px;width:1px;height:434px;background:#a0a0a0"></div><div style="left:655px;top:219px;width:1px;height:434px;background:#a0a0a0"></div><div style="left:698px;top:219px;width:1px;height:434px;background:#a0a0a0"></div><div style="left:742px;top:219px;width:1px;height:434px;background:#a0a0a0"></div><div style="left:785px;top:219px;width:1px;height:434px;background:#a0a0a0"></div><div style="left:829px;top:219px;width:1px;height:434px;background:#a0a0a0"></div><svg style="position:absolute;left:336px;top:224px" width="6" height="10" viewBox="0 0 6 10"><path d="M0 0L6 5L0 10z" fill="#000"/></svg><div style="left:830px;top:197px;width:17px;height:456px;background:#f0f0f0"></div><svg style="position:absolute;left:834px;top:201px" width="9" height="6" viewBox="0 0 9 6"><path d="M0 6L4.5 0L9 6z" fill="#8a8a8a"/></svg><svg style="position:absolute;left:834px;top:643px" width="9" height="6" viewBox="0 0 9 6"><path d="M0 0L4.5 6L9 0z" fill="#8a8a8a"/></svg><div style="left:836px;top:213px;width:5px;height:123px;background:#858585;border-radius:3px"></div></div></div>
<div style="left:0px;top:1032px;width:1920px;height:48px;background:#def0ac"></div>
<div style="left:0px;top:1031px;width:1920px;height:1px;background:#c8d8a8"></div>
<svg style="position:absolute;left:18px;top:1044px" width="27" height="19" viewBox="0 0 27 19"><defs><linearGradient id="cl" x1="0" y1="0" x2="0" y2="1"><stop offset="0" stop-color="#dbe9fa"/><stop offset="1" stop-color="#a9c8f0"/></linearGradient></defs><path d="M4 17.5C1.5 17.5 1 15.5 1 14c0-2.5 2-4 4.5-4 .5-4 4-8 9-8 4.5 0 8.5 3 9 7.5 1.5.5 2.5 2 2.5 4 0 2.5-1.5 4-4 4z" fill="url(#cl)"/></svg>
<div style="left:29px;top:1037px;width:17px;height:17px;border-radius:50%;background:#d0222a;color:#fff;font-size:10px;font-weight:bold;text-align:center;line-height:17px">9+</div>
<div class="t" style="left:50px;top:1043px;width:40px;height:14px;font-size:11.5px">-1°C</div>
<div class="t" style="left:50px;top:1057px;width:40px;height:14px;font-size:12px;color:#333">흐림</div>
<svg style="position:absolute;left:617px;top:1045px" width="24" height="24" viewBox="0 0 24 24"><defs><linearGradient id="wg" x1="0" y1="0" x2="1" y2="1"><stop offset="0" stop-color="#56c8f5"/><stop offset="1" stop-color="#1274d8"/></linearGradient></defs><rect x="0" y="0" width="11.3" height="11.3" fill="url(#wg)"/><rect x="12.7" y="0" width="11.3" height="11.3" fill="url(#wg)"/><rect x="0" y="12.7" width="11.3" height="11.3" fill="url(#wg)"/><rect x="12.7" y="12.7" width="11.3" height="11.3" fill="url(#wg)"/></svg>
<div style="left:654px;top:1041px;width:218px;height:30px;border-radius:15px;background:linear-gradient(90deg,#f0f6e2,#eef5df);border:1px solid #d4e0c0"></div>
<svg style="position:absolute;left:664px;top:1048px" width="16" height="16" viewBox="0 0 16 16"><circle cx="6.5" cy="6.5" r="5" fill="none" stroke="#222" stroke-width="1.6"/><path d="M10.3 10.3L15 15" stroke="#222" stroke-width="1.8"/></svg>
<div class="t" style="left:690px;top:1049px;width:40px;height:14px;font-size:13px;color:#555">검색</div>
<svg style="position:absolute;left:819px;top:1044px" width="50" height="25" viewBox="0 0 50 25"><path d="M1 16C2 7 14 1 25 1s23 6 24 15c0 5-3 8-10 8H11C4 24 1 21 1 16z" fill="#6fae6a"/><path d="M8 12c4-5 10-6 17-6s13 1 17 6v12H8z" fill="#e8b848"/><circle cx="25" cy="14" r="8" fill="#a8542a"/><circle cx="25" cy="14" r="5.5" fill="#1f7a5a"/><circle cx="25" cy="14" r="1.2" fill="#f0c040"/><circle cx="11.5" cy="14" r="3" fill="#3a8a8a" stroke="#a8542a" stroke-width="1"/><circle cx="38.5" cy="14" r="3" fill="#3a8a8a" stroke="#a8542a" stroke-width="1"/><ellipse cx="10" cy="22" rx="6" ry="3" fill="#d58ae0"/><ellipse cx="39" cy="22" rx="6" ry="3" fill="#d58ae0"/></svg>
<div style="left:885px;top:1051px;width:18px;height:16px;background:linear-gradient(#3a3a3a,#111);border-radius:1px"></div>
<div style="left:891px;top:1045px;width:18px;height:16px;background:linear-gradient(135deg,#fafafa,#dcdcdc);border-radius:1px;opacity:0.92"></div>
<svg style="position:absolute;left:928px;top:1044px" width="25" height="22" viewBox="0 0 25 22"><defs><linearGradient id="cp1" x1="0" y1="0" x2="0.4" y2="1"><stop offset="0" stop-color="#1f8ef5"/><stop offset="0.5" stop-color="#3fc24a"/><stop offset="1" stop-color="#f5c21a"/></linearGradient><linearGradient id="cp2" x1="0" y1="0" x2="0.4" y2="1"><stop offset="0" stop-color="#2a6ff0"/><stop offset="0.45" stop-color="#c05ae8"/><stop offset="1" stop-color="#f77a4a"/></linearGradient></defs><path d="M7 1h8c1.5 0 2 1 1.6 2.2L12 18c-.5 1.5-1.5 3-3.5 3H4c-2 0-3.5-2-3-4L4 6C5 3 5.5 1 7 1z" fill="url(#cp1)"/><path d="M16.5 1h2.5c2 0 3.5 2 3 4l-3 11c-1 3-1.5 5-3 5h-8c-1.5 0-2-1-1.6-2.2L13 4c.5-1.5 1.5-3 3.5-3z" fill="url(#cp2)"/></svg>
<svg style="position:absolute;left:972px;top:1045px" width="25" height="22" viewBox="0 0 25 22"><path d="M0 2h9l2 2h14v18H0z" fill="#e8a30a"/><rect x="0" y="7" width="25" height="15" fill="#ffcf48"/><rect x="8" y="15" width="9" height="5" fill="#3d8fe0"/></svg>
<svg style="position:absolute;left:1016px;top:1044px" width="24" height="24" viewBox="0 0 24 24"><defs><linearGradient id="eg1" x1="0" y1="1" x2="1" y2="0"><stop offset="0" stop-color="#0c59a8"/><stop offset="0.5" stop-color="#1c8ee0"/><stop offset="1" stop-color="#3ac0e8"/></linearGradient><linearGradient id="eg2" x1="0" y1="0" x2="1" y2="1"><stop offset="0" stop-color="#2fb4e8"/><stop offset="1" stop-color="#6cd070"/></linearGradient></defs><circle cx="12" cy="12" r="11.5" fill="url(#eg1)"/><path d="M1 11C2 5 7 .5 12.5.5 18.5.5 23.5 5 23.5 11c0 3-2.5 5-6 5-3 0-5-1.5-5-3.5 0-1 .5-1.5 1-2C13 7 9 5.5 6 7 3.5 8 2 9.5 1 11z" fill="url(#eg2)"/><path d="M4 15c1 4 5 7 9 7 2 0 3.5-.5 5-1.5-5 1-9-1.5-9-5.5 0-2 1-3.5 3-4.5-4 0-7 1.5-8 4.5z" fill="#1670c8"/></svg>
<svg style="position:absolute;left:1061px;top:1044px" width="23" height="24" viewBox="0 0 23 24"><path d="M7 5V3c0-2 9-2 9 0v2" fill="none" stroke="#2a6fb8" stroke-width="1.5"/><rect x="0" y="5" width="23" height="19" rx="2" fill="#1f5fae"/><rect x="7" y="10" width="4" height="4" fill="#f25022"/><rect x="12" y="10" width="4" height="4" fill="#7fba00"/><rect x="7" y="15" width="4" height="4" fill="#00a4ef"/><rect x="12" y="15" width="4" height="4" fill="#ffb900"/></svg>
<svg style="position:absolute;left:1104px;top:1044px" width="26" height="26" viewBox="0 0 26 26"><rect x="8" y="2" width="17" height="18" rx="2" fill="#1a8fe0"/><rect x="1" y="6" width="13" height="13" rx="2" fill="#0f5fb8"/><text x="7.5" y="16.5" font-family="Liberation Sans" font-size="11" font-weight="bold" fill="#fff" text-anchor="middle">O</text><rect x="10" y="19" width="16" height="7" fill="#1a8fe0"/><text x="18" y="25" font-family="Liberation Sans" font-size="6" font-weight="bold" fill="#fff" text-anchor="middle">NEW</text></svg>
<div style="left:1149px;top:1045px;width:24px;height:24px;border-radius:50%;background:#5865f2"></div>
<svg style="position:absolute;left:1153px;top:1051px" width="16" height="12" viewBox="0 0 16 12"><path d="M2 2c2-1.5 4-2 4-2l.5 1h3l.5-1s2 .5 4 2c1 2 1.5 5 1.5 8-1 1-3 2-4 2l-1-1.5h-5L5 12c-1 0-3-1-4-2 0-3 .5-6 1-8z" fill="#fff"/><circle cx="5.5" cy="6.5" r="1.3" fill="#5865f2"/><circle cx="10.5" cy="6.5" r="1.3" fill="#5865f2"/></svg>
<div style="left:1164px;top:1039px;width:15px;height:15px;border-radius:50%;background:#e03a3a;color:#fff;font-size:9px;font-weight:bold;text-align:center;line-height:15px">9+</div>
<div style="left:1194px;top:1045px;width:22px;height:22px;border-radius:5px;background:linear-gradient(135deg,#6a5cf0,#5235d8);color:#fff;font-size:9.5px;font-weight:bold;text-align:center;line-height:9px;padding-top:2px;letter-spacing:-0.3px">OP<br>GG</div>
<div style="left:1229px;top:1037px;width:38px;height:38px;background:rgba(255,255,255,0.45);border-radius:4px"></div>
<div style="left:1239px;top:1072px;width:19px;height:3px;background:#1a6fd0;border-radius:2px"></div>
<svg style="position:absolute;left:1236px;top:1043px" width="26" height="26" viewBox="0 0 26 26"><ellipse cx="13" cy="14" rx="10" ry="10" fill="#f4f4f4" stroke="#444" stroke-width="1.5"/><path d="M2 17L22 6L17 13L25 10" stroke="#111" stroke-width="3" fill="none"/><path d="M5 11L18 5" stroke="#111" stroke-width="2"/></svg>
<svg style="position:absolute;left:1280px;top:1044px" width="25" height="24" viewBox="0 0 25 24"><rect width="25" height="24" rx="2" fill="#2a2a2a"/><rect x="1" y="2" width="23" height="4" fill="#c02020"/><rect x="1" y="18" width="23" height="4" fill="#c02020"/><text x="12.5" y="16" font-family="Liberation Sans" font-size="10" font-weight="bold" font-style="italic" fill="#ddd" text-anchor="middle">PCV</text></svg>
<div style="left:981px;top:1072px;width:6px;height:3px;background:#888;border-radius:2px"></div>
<div style="left:1025px;top:1072px;width:6px;height:3px;background:#888;border-radius:2px"></div>
<div style="left:1159px;top:1072px;width:6px;height:3px;background:#888;border-radius:2px"></div>
<div style="left:1203px;top:1072px;width:6px;height:3px;background:#888;border-radius:2px"></div>
<div style="left:1287px;top:1072px;width:6px;height:3px;background:#888;border-radius:2px"></div>
<svg style="position:absolute;left:1612px;top:1051px" width="12" height="8" viewBox="0 0 12 8"><path d="M1 7L6 2L11 7" fill="none" stroke="#111" stroke-width="1.3"/></svg>
<svg style="position:absolute;left:1641px;top:1048px" width="20" height="17" viewBox="0 0 20 17"><ellipse cx="9" cy="8" rx="8" ry="5.5" fill="#aaa" stroke="#555" stroke-width="1"/><circle cx="12.5" cy="12" r="4.5" fill="#d8222a"/><path d="M10.8 10.3l3.4 3.4M14.2 10.3l-3.4 3.4" stroke="#fff" stroke-width="1.2"/></svg>
<svg style="position:absolute;left:1676px;top:1047px" width="12" height="17" viewBox="0 0 12 17"><rect x="3.5" y="0.7" width="5" height="10" rx="2.5" fill="none" stroke="#2a6fc0" stroke-width="1.4"/><path d="M1 7c0 3 2 5 5 5s5-2 5-5M6 12v4.5" fill="none" stroke="#2a6fc0" stroke-width="1.4"/></svg>
<div style="left:1706px;top:1048px;width:16px;height:16px;border-radius:50%;background:#111"></div>
<svg style="position:absolute;left:1709px;top:1051px" width="10" height="10" viewBox="0 0 10 10"><path d="M2 2L8 8M8 2L2 8" stroke="#fff" stroke-width="1.8"/></svg>
<div class="t" style="left:1743px;top:1048px;width:20px;height:16px;font-size:14px">한</div>
<svg style="position:absolute;left:1781px;top:1047px" width="18" height="17" viewBox="0 0 18 17"><rect x="0.7" y="1.7" width="12" height="10" fill="none" stroke="#111" stroke-width="1.2"/><path d="M4 15h6M7 12v3" stroke="#111" stroke-width="1.2"/><rect x="13" y="0.7" width="3.5" height="6" rx="1.5" fill="none" stroke="#111" stroke-width="1"/><path d="M14.7 7v9" stroke="#111" stroke-width="1.2"/></svg>
<svg style="position:absolute;left:1805px;top:1048px" width="17" height="15" viewBox="0 0 17 15"><path d="M1 5h3l4-3.5v12L4 10H1z" fill="none" stroke="#111" stroke-width="1.1"/><path d="M10 5c1 1 1 4 0 5M12 3c2 2 2 7 0 9M14 1.5c3 3 3 9 0 12" fill="none" stroke="#111" stroke-width="1.1"/></svg>
<div class="t" style="left:1820px;top:1041px;width:82px;text-align:right;font-size:12px">오후 9:00</div>
<div class="t" style="left:1820px;top:1057px;width:82px;text-align:right;font-size:12px">2026-01-03</div>
</body></html>
